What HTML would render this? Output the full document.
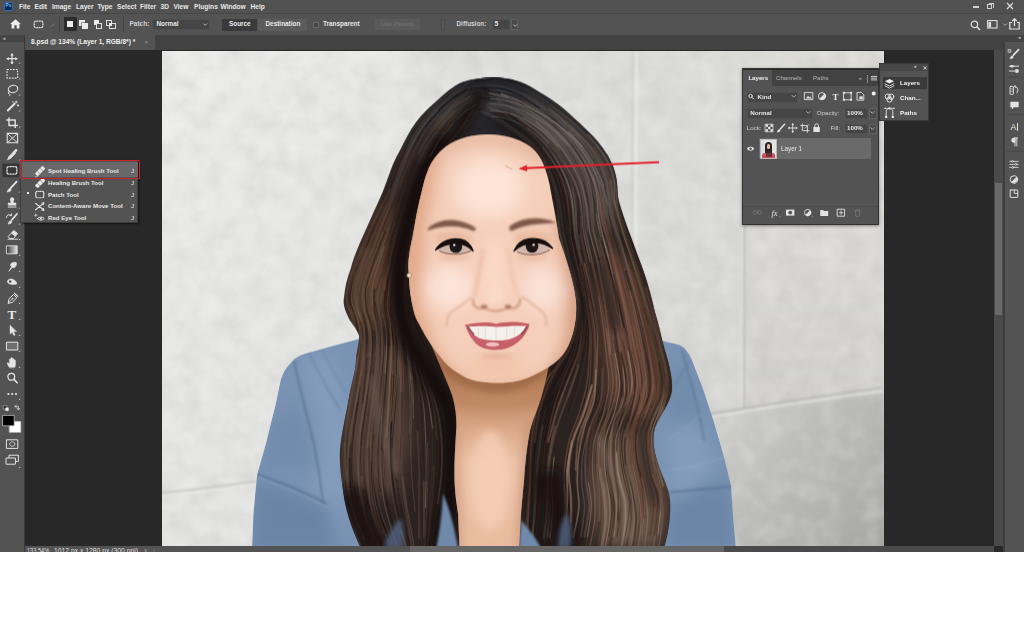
<!DOCTYPE html>
<html lang="en">
<head>
<meta charset="utf-8">
<title>Photoshop - Spot Healing Brush Tool</title>
<style>
*{box-sizing:border-box;margin:0;padding:0}
html,body{width:1024px;height:640px;overflow:hidden;background:#fff}
body{position:relative;font-family:"Liberation Sans",sans-serif;font-size:6.4px;color:#e6e6e6;line-height:1}
.abs{position:absolute}
.t{position:absolute;white-space:nowrap;font-weight:bold;color:#e8e8e8}
#app{position:absolute;left:0;top:0;width:1024px;height:552px;background:#282828;overflow:hidden}
#menubar{position:absolute;left:0;top:0;width:1024px;height:13px;background:#515151}
#menubar .t{top:3.600px;font-size:6.600px}
#optbar{position:absolute;left:0;top:13px;width:1024px;height:22px;background:#535353;border-top:1px solid #464646}
#tabbar{position:absolute;left:0;top:35px;width:1024px;height:15px;background:#424242}
#tab{position:absolute;left:25px;top:0;width:130px;height:15px;background:#535353}
#tools{position:absolute;left:0;top:35px;width:25px;height:517px;background:#535353;border-right:1px solid #3a3a3a}
#toolshead{position:absolute;left:0;top:0;width:24px;height:7px;background:#454545}
#rstrip{position:absolute;left:1003px;top:35px;width:21px;height:517px;background:#535353;border-left:2px solid #3e3e3e}
#vscroll{position:absolute;left:994px;top:50px;width:9px;height:496px;background:#4a4a4a}
#vthumb{position:absolute;left:1px;top:133px;width:7px;height:132px;background:#696969}
#status{position:absolute;left:25px;top:546px;width:385px;height:6px;background:#535353;overflow:hidden}
#hscroll{position:absolute;left:410px;top:546px;width:584px;height:6px;background:#4a4a4a}
#hthumb{position:absolute;left:0;top:0;width:314px;height:6px;background:#666}
#photo{position:absolute;left:162px;top:50.600px;width:721.500px;height:495.400px;background:#e0e0de;overflow:hidden}
.ico{position:absolute;overflow:visible}
/* flyout */
#fly{position:absolute;left:20px;top:160px;width:118px;height:63px;background:#535353;border:1px solid #3c3c3c;box-shadow:1px 1px 2px rgba(0,0,0,.5)}
#fly .t{font-size:6.100px;left:27px}
#fly .k{left:110px}
#flysel{position:absolute;left:20px;top:160px;width:119.500px;height:18.500px;border:1.800px solid #cf1f29;border-radius:1px}
/* layers panel */
#lp{position:absolute;left:742px;top:68px;width:137px;height:157px;background:#535353;border:1px solid #333;box-shadow:0 1px 3px rgba(0,0,0,.4)}
#lp .t{font-size:6.3px}
.dd{position:absolute;background:#454545;border:0.8px solid #505050;border-radius:1px}
#mp{position:absolute;left:879px;top:63px;width:50px;height:58px;background:#535353;border:1px solid #3a3a3a}
#mp .t{font-size:6.4px}
</style>
</head>
<body>
<div id="app">

<!-- ============ canvas + photo ============ -->
<div id="photo">
<svg width="721.500" height="495.400" viewBox="162 50.600 721.500 495.400" style="position:absolute;left:0;top:0;display:block">
<defs>
  <filter id="b05" x="-20%" y="-20%" width="140%" height="140%"><feGaussianBlur stdDeviation="0.5"/></filter>
  <filter id="b1" x="-20%" y="-20%" width="140%" height="140%"><feGaussianBlur stdDeviation="1"/></filter>
  <filter id="b2" x="-30%" y="-30%" width="160%" height="160%"><feGaussianBlur stdDeviation="2"/></filter>
  <filter id="b3" x="-30%" y="-30%" width="160%" height="160%"><feGaussianBlur stdDeviation="3"/></filter>
  <filter id="b5" x="-40%" y="-40%" width="180%" height="180%"><feGaussianBlur stdDeviation="5"/></filter>
  <filter id="b8" x="-50%" y="-50%" width="200%" height="200%"><feGaussianBlur stdDeviation="8"/></filter>
  <filter id="b14" x="-60%" y="-60%" width="220%" height="220%"><feGaussianBlur stdDeviation="14"/></filter>
  <filter id="b25" x="-80%" y="-80%" width="260%" height="260%"><feGaussianBlur stdDeviation="25"/></filter>
  <filter id="wallnoise" x="0" y="0" width="100%" height="100%">
    <feTurbulence type="fractalNoise" baseFrequency="0.045" numOctaves="3" seed="7" result="n"/>
    <feColorMatrix type="matrix" values="0 0 0 0 0.5  0 0 0 0 0.5  0 0 0 0 0.5  1.1 0 0 0 -0.42"/>
  </filter>
  <filter id="wallnoise2" x="0" y="0" width="100%" height="100%">
    <feTurbulence type="fractalNoise" baseFrequency="0.05" numOctaves="2" seed="23" result="n"/>
    <feColorMatrix type="matrix" values="0 0 0 0 1  0 0 0 0 1  0 0 0 0 1  1.0 0 0 0 -0.40"/>
  </filter>
  <clipPath id="pc"><rect x="162" y="50" width="722" height="497"/></clipPath>
  <linearGradient id="jk" x1="0" y1="0" x2="1" y2="0">
    <stop offset="0" stop-color="#6f8bab"/><stop offset="0.5" stop-color="#617b9a"/><stop offset="1" stop-color="#6c87a6"/>
  </linearGradient>
  <radialGradient id="faceg" cx="0.5" cy="0.42" r="0.62">
    <stop offset="0" stop-color="#fbdcc8"/><stop offset="0.55" stop-color="#f3c7ac"/><stop offset="1" stop-color="#dba385"/>
  </radialGradient>
</defs>
<g clip-path="url(#pc)">
<!-- wall -->
<defs>
  <linearGradient id="wg" x1="162" y1="0" x2="883" y2="0" gradientUnits="userSpaceOnUse">
    <stop offset="0" stop-color="#ececeb"/><stop offset="0.35" stop-color="#e6e6e4"/><stop offset="0.66" stop-color="#dddddb"/><stop offset="1" stop-color="#dad9d6"/>
  </linearGradient>
  <linearGradient id="wg2" x1="720" y1="410" x2="883" y2="546" gradientUnits="userSpaceOnUse">
    <stop offset="0" stop-color="#d0d0cd"/><stop offset="0.4" stop-color="#bdbdba"/><stop offset="1" stop-color="#a6a6a2"/>
  </linearGradient>
  <linearGradient id="wg3" x1="0" y1="225" x2="0" y2="400" gradientUnits="userSpaceOnUse">
    <stop offset="0" stop-color="#dbdad7"/><stop offset="1" stop-color="#d0cfcb"/>
  </linearGradient>
  <linearGradient id="wg4" x1="0" y1="51" x2="0" y2="546" gradientUnits="userSpaceOnUse">
    <stop offset="0" stop-color="#000" stop-opacity="0"/><stop offset="1" stop-color="#000" stop-opacity=".035"/>
  </linearGradient>
</defs>
<rect x="162" y="50" width="722" height="497" fill="url(#wg)"/>
<rect x="162" y="50" width="722" height="497" fill="url(#wg4)"/>
<g filter="url(#b3)">
  <path d="M746 225 L890 225 L890 386 L746 409 Z" fill="url(#wg3)"/>
  <path d="M690 420 C760 407 820 398 890 388 L890 560 L690 560 Z" fill="url(#wg2)"/>
  <rect x="420" y="40" width="214" height="60" fill="#dbdbd9" opacity=".6"/>
</g>
<rect x="162" y="50" width="722" height="497" filter="url(#wallnoise)" opacity=".5"/>
<rect x="162" y="50" width="722" height="497" filter="url(#wallnoise2)" opacity=".45"/>
<!-- seams -->
<g filter="url(#b1)" fill="none">
  <path d="M636.500 51 L635.500 400" stroke="#ebebe9" stroke-width="2.200" opacity=".8"/>
  <path d="M632.500 51 L631.500 330" stroke="#c6c6c4" stroke-width="1.800" opacity=".6"/>
  <path d="M744.500 225 L744 408" stroke="#bcbcba" stroke-width="2" opacity=".85"/>
  <path d="M742 225 L741.500 408" stroke="#e6e6e4" stroke-width="1.600" opacity=".6"/>
  <path d="M700 415.500 C760 405 820 396 883 387.500" stroke="#b4b4b2" stroke-width="1.800" opacity=".85"/>
  <path d="M700 418.500 C760 408 820 399 883 390.500" stroke="#e9e9e7" stroke-width="2" opacity=".7"/>
  <path d="M162 492.600 C195 489 225 485 257 481" stroke="#c6c2bf" stroke-width="2" opacity=".85"/>
  <path d="M162 495.500 C195 492 225 488 257 484" stroke="#eeeeec" stroke-width="1.600" opacity=".7"/>
</g>

<!-- jacket -->
<defs><clipPath id="jkclip"><path d="M360 338 L330 346 L309 352 C300 354 295 357 291 362 C285 368 282 374 280 382 L276 402 L266 443 L257 474 L253.5 512 L252 548 L736 548 L733.5 521 L731 485 L724 456 L713.5 420 L703 388 L692 359.5 C688 350 683 345 677 343.5 L659 339.5 L640 338 Z"/></clipPath></defs>
<g clip-path="url(#jkclip)">
  <path d="M360 338 L330 346 L309 352 C300 354 295 357 291 362 C285 368 282 374 280 382 L276 402 L266 443 L257 474 L253.5 512 L252 548 L736 548 L733.5 521 L731 485 L724 456 L713.5 420 L703 388 L692 359.5 C688 350 683 345 677 343.5 L659 339.5 L640 338 Z" fill="#7a93b4"/>
  <g filter="url(#b8)" opacity=".9">
    <path d="M300 360 L330 350 L352 420 L345 500 L330 548 L300 548 L320 440 Z" fill="#869ebd"/>
    <path d="M255 480 L330 505 L335 548 L250 548 Z" fill="#6983a5"/>
    <path d="M268 420 L300 400 L318 470 L262 470 Z" fill="#728cad"/>
    <path d="M680 350 L700 400 L728 480 L732 548 L700 548 L690 470 L665 400 Z" fill="#718bac"/>
    <path d="M668 430 L700 420 L720 470 L672 500 Z" fill="#869ebd"/>
    <path d="M670 500 L730 490 L734 548 L665 548 Z" fill="#6a84a6"/>
    <path d="M380 500 L470 490 L470 548 L380 548 Z" fill="#6f88a9"/>
    <path d="M515 500 L580 500 L580 548 L515 548 Z" fill="#6f88a9"/>
  </g>
  <!-- fold lines -->
  <g filter="url(#b1)" fill="none" stroke-linecap="round">
    <path d="M294 360 C300 390 308 420 314 444 C318 465 321 485 323 503" stroke="#54698a" stroke-width="1.6" opacity=".75"/>
    <path d="M258 474 C280 482 305 492 326 503" stroke="#50668a" stroke-width="1.8" opacity=".8"/>
    <path d="M259 477 C280 485 305 495 326 506" stroke="#8ca4c2" stroke-width="1.2" opacity=".7"/>
    <path d="M309 352 C318 372 330 392 340 410" stroke="#5a7091" stroke-width="1.1" opacity=".6"/>
    <path d="M322 350 C330 366 338 380 346 392" stroke="#5a7091" stroke-width="1" opacity=".5"/>
    <path d="M682 350 C690 380 700 410 704 440" stroke="#57708f" stroke-width="1.8" opacity=".6"/>
    <path d="M668 470 C690 468 712 462 726 456" stroke="#8fa8c6" stroke-width="1.4" opacity=".8"/>
    <path d="M670 492 C692 490 715 488 731 486" stroke="#536c8e" stroke-width="1.8" opacity=".7"/>
    <path d="M666 440 C680 432 692 424 700 414" stroke="#8ea6c3" stroke-width="1.1" opacity=".7"/>
    <path d="M660 398 C672 388 684 372 690 360" stroke="#5b7393" stroke-width="1.4" opacity=".5"/>
  </g>
</g>

<defs><clipPath id="hairclip"><path d="M500 77.5 C515 78 528 84 538 91 C552 99 563 107 572 116 C583 126 593 135 600 144 C608 154 614 165 616 176 C618 186 617 193 619 201 C624 220 632 238 638 256 C646 276 651 294 655 312 C659 324 661 336 664 347 C668 360 673 376 672 390 C670 404 660 414 655 427 C651 440 655 455 659 466 C663 478 669 488 670 500 C671 514 669 530 664 548 L361 548 C355 535 346 515 343 490 C340 470 339 455 340.500 444 C343 425 347 410 349 397 C352 380 356 370 356 359 C357 348 360 340 359 335 C356 326 350 322 348 316 C344 308 343 302 344 297 C345 287 347 278 350.500 269 C355 252 362 238 368 224.500 C374 210 382 195 387 180 C391 168 395 158 400 150 C405 140 410 130 416 122 C422 114 428 108 434 103 C444 94 452 86 463 81.5 C475 77.5 488 77 500 77.5 Z"/></clipPath></defs>
<!-- hair mass -->
<path id="hairshape" d="M500 77.5 C515 78 528 84 538 91 C552 99 563 107 572 116 C583 126 593 135 600 144 C608 154 614 165 616 176 C618 186 617 193 619 201 C624 220 632 238 638 256 C646 276 651 294 655 312 C659 324 661 336 664 347 C668 360 673 376 672 390 C670 404 660 414 655 427 C651 440 655 455 659 466 C663 478 669 488 670 500 C671 514 669 530 664 548 L361 548 C355 535 346 515 343 490 C340 470 339 455 340.500 444 C343 425 347 410 349 397 C352 380 356 370 356 359 C357 348 360 340 359 335 C356 326 350 322 348 316 C344 308 343 302 344 297 C345 287 347 278 350.500 269 C355 252 362 238 368 224.500 C374 210 382 195 387 180 C391 168 395 158 400 150 C405 140 410 130 416 122 C422 114 428 108 434 103 C444 94 452 86 463 81.5 C475 77.5 488 77 500 77.5 Z" fill="#2b2320"/>
<g clip-path="url(#hairclip)">
  <!-- toptone --><ellipse cx="500" cy="105" rx="120" ry="62" fill="#26262a" filter="url(#b14)"/>
  <g filter="url(#b8)">
    <!-- lighter zones -->
    <path d="M384 200 L400 215 L392 300 L372 335 L350 320 L352 270 Z" fill="#5a3f31"/>
    <path d="M355 345 L400 350 L410 440 L395 500 L350 480 L345 420 Z" fill="#56433a"/>
    <path d="M520 92 L575 118 L612 170 L618 230 L590 230 L570 170 L530 125 Z" fill="#5a4f4a"/>
    <path d="M600 240 L640 270 L662 350 L668 395 L640 420 L610 400 L600 320 Z" fill="#66463a"/>
    <path d="M600 430 L655 430 L668 500 L660 548 L600 548 L590 480 Z" fill="#6b5548"/>
    <path d="M430 105 L470 88 L480 110 L440 150 L410 200 L395 190 L410 140 Z" fill="#39322f"/>
  </g>
</g>

<g fill="none" stroke-linecap="round" filter="url(#b05)" clip-path="url(#hairclip)">
<path d="M543.9 95.2C547.7 98.3 559.8 107.1 567.1 113.4C574.3 119.7 581.2 126.1 587.2 133.0C593.3 139.8 598.7 147.1 603.1 154.5C607.5 162.0 611.4 170.5 613.8 177.6C616.2 184.7 616.7 193.9 617.3 197.2" stroke="#36363a" stroke-width="1.1" opacity="0.73"/>
<path d="M634.2 435.0C634.4 439.8 634.4 454.8 635.9 463.9C637.3 472.9 641.0 480.3 642.7 489.3C644.4 498.2 646.0 507.8 645.8 517.6C645.6 527.4 642.2 542.9 641.5 548.0" stroke="#6a5447" stroke-width="0.9" opacity="0.47"/>
<path d="M412.2 239.5C411.3 244.7 407.8 260.4 406.6 270.4C405.4 280.4 404.7 291.1 405.2 299.7C405.7 308.4 407.6 315.2 409.5 322.3C411.4 329.4 415.6 338.9 416.8 342.2" stroke="#452e24" stroke-width="1.5" opacity="0.68"/>
<path d="M571.7 441.1C570.9 445.9 567.8 461.1 567.1 470.1C566.4 479.1 567.6 486.7 567.4 495.2C567.2 503.8 567.1 512.7 565.8 521.5C564.5 530.3 560.6 543.6 559.6 548.0" stroke="#a8947f" stroke-width="1.8" opacity="0.71"/>
<path d="M626.7 366.5C626.9 371.6 629.8 387.2 628.1 396.8C626.5 406.4 619.5 414.7 616.9 424.0C614.4 433.3 613.1 443.2 612.9 452.5C612.8 461.8 614.5 471.4 615.9 480.0C617.4 488.7 621.1 495.1 621.6 504.4C622.1 513.6 619.3 530.5 618.8 535.8" stroke="#7e695e" stroke-width="2.1" opacity="0.46"/>
<path d="M365.2 273.1C364.2 277.4 359.5 291.6 359.3 299.2C359.1 306.9 362.6 311.7 364.0 318.8C365.3 325.9 367.2 333.1 367.5 342.0C367.7 350.8 366.4 362.0 365.5 372.1C364.7 382.1 363.0 397.2 362.5 402.2" stroke="#1e1815" stroke-width="1.7" opacity="0.48"/>
<path d="M621.1 465.8C622.1 470.0 625.6 482.2 627.0 491.1C628.5 499.9 630.2 509.3 630.0 518.8C629.8 528.3 626.7 543.1 626.0 548.0" stroke="#6a5447" stroke-width="1.3" opacity="0.57"/>
<path d="M471.0 82.3C468.8 83.5 462.9 86.3 458.1 89.4C453.2 92.6 447.0 96.5 441.9 101.0C436.7 105.4 431.9 110.3 427.2 116.2C422.6 122.0 418.0 128.4 414.0 136.1C409.9 143.9 406.7 153.6 403.1 162.6C399.6 171.6 396.3 181.4 392.7 190.3C389.1 199.1 385.3 207.0 381.5 215.6C377.8 224.3 374.0 232.8 370.1 242.2C366.2 251.6 360.1 267.0 358.1 271.9" stroke="#222225" stroke-width="1.6" opacity="0.39"/>
<path d="M545.2 441.7C544.7 446.9 543.0 463.0 542.2 472.5C541.3 482.0 540.9 490.1 540.1 498.7C539.3 507.3 538.3 515.9 537.3 524.1C536.3 532.3 534.5 544.0 533.9 548.0" stroke="#4c3a31" stroke-width="1.6" opacity="0.53"/>
<path d="M648.7 323.6C649.6 327.6 652.2 338.5 653.9 347.6C655.7 356.6 659.2 368.2 659.1 378.0C659.0 387.8 655.9 397.3 653.3 406.6C650.7 415.8 644.9 424.3 643.7 433.5C642.6 442.8 644.7 453.2 646.5 462.1C648.2 471.0 652.5 478.0 654.4 487.0C656.3 495.9 658.2 505.6 658.0 515.8C657.8 526.0 653.9 542.6 653.1 548.0" stroke="#7e695e" stroke-width="1.9" opacity="0.35"/>
<path d="M382.8 478.0C383.5 482.3 385.4 495.2 387.4 503.8C389.5 512.3 392.7 521.7 395.0 529.1C397.3 536.5 400.2 544.9 401.3 548.0" stroke="#191412" stroke-width="0.9" opacity="0.34"/>
<path d="M631.1 350.7C631.9 355.7 635.9 371.0 635.8 380.8C635.8 390.5 633.2 400.0 630.9 409.4C628.6 418.7 623.3 427.4 622.1 436.7C620.9 446.1 622.4 456.6 623.6 465.7C624.8 474.7 628.1 482.1 629.3 491.0C630.6 499.8 631.7 509.2 631.2 518.7C630.6 528.2 626.8 543.1 626.0 548.0" stroke="#2a201c" stroke-width="1.1" opacity="0.72"/>
<path d="M467.5 91.5C465.5 93.1 459.4 97.4 455.3 101.2C451.3 104.9 447.2 109.2 443.0 114.1C438.8 119.0 434.2 124.1 430.2 130.7C426.2 137.2 422.6 144.9 419.0 153.2C415.5 161.6 412.2 171.8 408.8 180.8C405.4 189.7 401.9 198.3 398.6 206.9C395.3 215.5 392.1 223.5 388.9 232.4C385.7 241.3 381.0 255.7 379.5 260.3" stroke="#56565b" stroke-width="0.7" opacity="0.67"/>
<path d="M646.4 336.1C647.2 340.6 650.2 353.4 651.2 363.0C652.2 372.6 654.4 383.9 652.6 393.5C650.9 403.1 643.1 411.3 640.7 420.5C638.3 429.7 637.5 439.5 638.0 448.8C638.5 458.1 642.7 471.6 643.7 476.2" stroke="#7d5442" stroke-width="2.2" opacity="0.60"/>
<path d="M426.1 115.3C423.8 118.6 416.3 127.6 412.1 135.4C407.9 143.2 404.4 152.9 400.7 161.9C397.1 171.0 393.9 180.8 390.3 189.6C386.7 198.5 383.0 206.3 379.4 215.0C375.7 223.6 372.1 232.1 368.2 241.6C364.3 251.0 358.9 262.1 355.9 271.5C352.9 280.9 350.1 290.3 350.0 298.0C349.8 305.6 353.8 310.3 355.2 317.5C356.5 324.6 357.8 337.0 358.3 340.9" stroke="#2a1b15" stroke-width="1.7" opacity="0.72"/>
<path d="M508.5 100.7C511.9 102.5 522.0 107.0 528.9 111.5C535.7 116.0 543.5 121.8 549.8 127.7C556.2 133.6 562.0 140.1 567.1 146.9C572.1 153.7 576.6 161.0 580.2 168.5C583.9 175.9 587.2 184.0 589.0 191.7C590.8 199.4 589.6 206.0 590.9 214.5C592.3 222.9 596.2 238.0 597.2 242.6" stroke="#37302d" stroke-width="1.6" opacity="0.69"/>
<path d="M405.7 284.4C405.8 288.7 405.4 302.6 406.4 310.4C407.4 318.2 409.5 324.4 411.5 331.1C413.4 337.9 415.8 344.1 418.2 350.8C420.5 357.4 422.8 364.2 425.4 371.0C427.9 377.9 431.2 384.5 433.5 391.6C435.8 398.7 438.2 410.1 439.1 413.8" stroke="#44352e" stroke-width="1.1" opacity="0.56"/>
<path d="M639.3 324.6C640.4 328.6 643.6 339.5 645.9 348.6C648.1 357.6 652.5 368.9 652.9 378.7C653.2 388.5 650.7 398.0 648.2 407.3C645.7 416.7 639.6 425.2 638.0 434.6C636.4 443.9 637.4 454.3 638.5 463.4C639.5 472.4 642.8 479.6 644.4 488.6C645.9 497.6 647.6 507.2 647.7 517.1C647.7 527.0 645.0 542.9 644.4 548.0" stroke="#96816f" stroke-width="0.9" opacity="0.58"/>
<path d="M392.8 375.3C392.6 380.3 392.0 395.1 391.5 405.3C391.0 415.5 389.8 426.4 389.6 436.5C389.4 446.5 389.5 456.2 390.1 465.4C390.6 474.6 391.7 483.0 393.0 491.5C394.2 500.0 395.5 508.2 397.3 516.3C399.1 524.5 402.6 536.2 403.7 540.2" stroke="#1e1815" stroke-width="2.0" opacity="0.68"/>
<path d="M646.4 447.8C647.1 452.3 648.9 466.4 650.7 475.0C652.6 483.6 656.8 489.6 657.4 499.4C658.0 509.3 654.9 528.4 654.4 534.2" stroke="#4c3a31" stroke-width="2.0" opacity="0.62"/>
<path d="M495.3 116.1C497.3 117.5 503.0 121.3 507.5 124.5C511.9 127.6 517.3 131.0 522.1 135.2C526.9 139.4 532.0 144.1 536.2 149.8C540.4 155.5 545.4 166.2 547.2 169.4" stroke="#36363a" stroke-width="1.0" opacity="0.46"/>
<path d="M490.5 88.2C494.1 89.0 505.0 90.3 512.4 92.9C519.7 95.6 527.1 99.4 534.6 104.2C542.1 108.9 550.5 115.4 557.5 121.5C564.6 127.6 571.4 134.1 577.1 140.9C582.8 147.7 587.8 155.0 591.8 162.5C595.7 169.9 599.0 178.2 600.9 185.6C602.7 193.1 601.2 198.6 602.7 207.0C604.2 215.4 608.8 231.4 610.0 236.2" stroke="#222225" stroke-width="0.9" opacity="0.62"/>
<path d="M616.7 423.9C616.0 428.7 612.5 443.1 612.4 452.5C612.2 461.8 614.0 471.4 615.6 480.0C617.2 488.6 621.3 495.0 622.1 504.3C622.8 513.6 620.2 530.5 619.9 535.8" stroke="#2a201c" stroke-width="1.8" opacity="0.31"/>
<path d="M653.3 307.0C654.4 311.5 657.7 325.1 659.6 334.1C661.4 343.1 663.3 351.5 664.7 361.2C666.0 370.8 669.0 382.5 667.7 392.1C666.4 401.7 658.8 414.2 657.0 418.6" stroke="#9a7260" stroke-width="1.4" opacity="0.56"/>
<path d="M577.6 313.8C576.6 319.2 575.2 336.1 571.5 346.2C567.8 356.2 560.3 363.9 555.4 374.0C550.6 384.1 544.5 401.1 542.3 406.5" stroke="#4d3329" stroke-width="1.7" opacity="0.42"/>
<path d="M389.3 232.5C387.6 237.2 382.5 251.0 379.6 260.4C376.8 269.8 373.2 280.4 372.2 288.8C371.2 297.3 372.5 304.0 373.6 311.0C374.7 318.0 378.1 323.2 378.9 330.9C379.7 338.7 379.1 348.1 378.4 357.5C377.7 367.0 375.9 377.7 374.6 387.7C373.2 397.7 371.5 407.7 370.3 417.7C369.0 427.6 367.7 442.5 367.2 447.5" stroke="#725d50" stroke-width="1.4" opacity="0.70"/>
<path d="M560.7 118.4C564.2 121.7 575.7 131.1 581.8 137.9C588.0 144.7 593.5 152.0 597.7 159.5C601.9 166.9 605.2 175.3 606.9 182.6C608.7 189.9 606.7 194.9 608.2 203.3C609.6 211.7 612.2 221.9 615.4 233.0C618.6 244.2 623.3 257.4 627.2 270.1C631.0 282.8 636.5 302.6 638.3 309.2" stroke="#675d57" stroke-width="1.3" opacity="0.31"/>
<path d="M591.3 214.6C592.2 219.3 594.4 232.5 596.6 242.8C598.9 253.0 602.2 264.5 604.7 276.2C607.3 287.9 610.0 302.2 612.0 312.8C614.0 323.4 615.4 330.9 616.9 339.9C618.4 349.0 620.1 357.6 621.1 367.2C622.1 376.8 622.5 392.5 622.8 397.5" stroke="#3f2c24" stroke-width="2.0" opacity="0.55"/>
<path d="M443.2 128.5C441.1 131.6 434.7 140.1 430.9 147.2C427.1 154.4 423.5 163.1 420.2 171.4C416.9 179.7 413.8 188.7 411.0 197.3C408.1 205.8 404.5 218.4 403.3 222.6" stroke="#303034" stroke-width="0.7" opacity="0.41"/>
<path d="M473.5 107.1C472.3 109.3 468.9 115.7 466.0 120.2C463.1 124.7 459.6 129.1 456.1 134.1C452.6 139.2 448.5 144.0 445.1 150.4C441.8 156.7 438.9 164.4 435.8 172.3C432.7 180.2 429.7 188.9 426.5 197.7C423.3 206.6 419.5 215.7 416.6 225.2C413.6 234.6 410.8 244.4 408.9 254.6C406.9 264.7 405.6 280.6 405.0 285.8" stroke="#82664f" stroke-width="1.6" opacity="0.59"/>
<path d="M394.8 360.9C394.8 365.8 395.0 380.3 394.7 390.3C394.4 400.3 393.5 410.8 392.8 421.0C392.1 431.2 390.7 441.9 390.4 451.6C390.0 461.2 390.3 470.1 390.9 478.8C391.5 487.5 392.3 495.4 393.9 503.8C395.5 512.1 398.2 521.7 400.5 529.0C402.7 536.4 406.2 544.8 407.3 548.0" stroke="#44352e" stroke-width="1.6" opacity="0.67"/>
<path d="M443.6 102.0C441.1 104.5 433.4 111.2 428.6 117.1C423.8 122.9 419.0 129.2 414.9 136.9C410.8 144.6 407.5 154.3 404.1 163.3C400.6 172.3 395.9 186.3 394.2 190.9" stroke="#36363a" stroke-width="2.1" opacity="0.63"/>
<path d="M400.3 312.6C400.9 315.9 402.7 325.6 403.9 332.4C405.1 339.3 406.5 346.1 407.6 353.7C408.8 361.4 410.3 374.2 410.8 378.3" stroke="#725d50" stroke-width="1.8" opacity="0.73"/>
<path d="M358.1 416.4C357.3 421.1 354.5 435.2 353.6 444.7C352.7 454.2 352.3 464.0 352.6 473.5C353.0 482.9 353.7 492.1 355.9 501.2C358.0 510.3 362.2 520.2 365.3 528.0C368.5 535.8 373.2 544.7 374.8 548.0" stroke="#5f4c40" stroke-width="1.1" opacity="0.51"/>
<path d="M388.4 203.4C386.4 207.7 380.3 219.9 376.3 228.9C372.2 237.8 367.8 247.7 364.3 257.2C360.7 266.8 356.2 277.8 355.0 286.4C353.8 295.0 355.5 301.7 357.0 308.7C358.5 315.7 363.0 320.7 364.0 328.6C365.1 336.5 364.3 346.4 363.3 356.2C362.4 366.0 360.0 377.4 358.3 387.4C356.6 397.4 354.6 406.7 353.1 416.1C351.6 425.6 350.0 439.4 349.4 444.0" stroke="#82664f" stroke-width="1.9" opacity="0.47"/>
<path d="M375.0 301.9C375.8 305.1 378.4 314.4 379.7 321.5C381.1 328.6 382.9 335.7 383.3 344.3C383.6 352.9 382.6 363.4 381.8 373.3C381.0 383.1 379.8 393.3 378.4 403.3C377.1 413.4 375.0 423.7 373.9 433.6C372.8 443.6 372.0 453.3 372.1 462.9C372.1 472.4 372.8 481.8 374.2 490.8C375.6 499.7 377.8 508.3 380.4 516.5C383.0 524.8 388.3 536.3 389.9 540.2" stroke="#1e1815" stroke-width="1.8" opacity="0.52"/>
<path d="M616.9 424.1C616.3 428.9 613.4 443.3 613.1 452.6C612.9 462.0 614.3 471.5 615.5 480.2C616.6 488.8 619.9 495.2 620.1 504.5C620.3 513.7 617.3 530.6 616.7 535.8" stroke="#6a5447" stroke-width="1.5" opacity="0.30"/>
<path d="M369.7 258.1C368.2 263.0 362.1 278.5 360.8 287.0C359.4 295.6 360.6 302.3 361.8 309.3C362.9 316.4 366.7 321.4 367.5 329.2C368.4 337.1 366.9 352.0 366.8 356.5" stroke="#452e24" stroke-width="2.2" opacity="0.32"/>
<path d="M399.4 268.2C398.6 272.8 395.0 287.8 394.2 296.2C393.5 304.5 394.0 311.2 394.8 318.2C395.5 325.2 397.8 330.6 399.0 338.1C400.1 345.5 401.1 354.1 401.8 362.9C402.5 371.7 403.3 381.2 403.4 390.7C403.6 400.3 403.1 410.3 402.6 420.1C402.2 430.0 400.9 440.4 400.6 449.8C400.3 459.1 400.8 472.0 400.8 476.4" stroke="#1e1815" stroke-width="1.4" opacity="0.40"/>
<path d="M581.6 138.5C584.0 142.1 592.4 152.6 596.2 160.1C600.0 167.5 603.0 175.9 604.6 183.2C606.2 190.5 604.4 195.6 606.0 204.1C607.6 212.5 610.7 222.6 614.1 233.7C617.6 244.8 622.8 257.9 626.8 270.5C630.7 283.1 635.1 298.4 638.1 309.4C641.0 320.4 642.7 327.4 644.6 336.3C646.4 345.3 648.2 353.6 649.2 363.2C650.2 372.7 650.6 388.5 650.9 393.6" stroke="#2b2320" stroke-width="0.8" opacity="0.45"/>
<path d="M413.5 220.0C412.5 224.7 409.0 238.4 407.3 248.1C405.6 257.8 404.3 268.7 403.5 278.1C402.7 287.6 402.2 296.9 402.7 304.9C403.1 312.9 404.6 319.3 406.0 326.2C407.4 333.0 409.4 338.9 411.0 345.9C412.6 352.8 414.0 360.4 415.7 367.9C417.3 375.5 419.4 383.2 420.9 391.3C422.4 399.3 423.6 407.7 424.4 416.2C425.3 424.8 425.6 438.2 425.9 442.5" stroke="#342924" stroke-width="2.1" opacity="0.64"/>
<path d="M425.8 115.7C423.6 119.1 416.3 128.0 412.3 135.8C408.3 143.5 405.2 153.2 401.8 162.3C398.5 171.3 395.6 181.1 392.2 190.0C388.8 198.8 383.2 211.1 381.4 215.3" stroke="#46464b" stroke-width="1.7" opacity="0.31"/>
<path d="M637.6 421.1C636.9 425.9 633.8 440.2 633.7 449.6C633.7 458.9 635.6 468.5 637.3 477.2C639.1 486.0 643.4 492.4 644.3 502.1C645.1 511.7 642.7 529.6 642.4 535.1" stroke="#5a463b" stroke-width="1.8" opacity="0.58"/>
<path d="M646.1 287.6C647.6 293.4 652.7 312.7 655.1 322.5C657.5 332.3 658.5 337.3 660.5 346.4C662.6 355.5 667.1 367.2 667.6 377.1C668.1 387.0 665.8 396.5 663.7 405.7C661.6 414.9 655.9 423.1 654.8 432.3C653.7 441.4 655.6 451.8 657.0 460.5C658.4 469.3 662.2 480.9 663.3 485.0" stroke="#9a7260" stroke-width="2.1" opacity="0.59"/>
<path d="M658.7 346.7C659.8 351.8 665.1 367.5 665.6 377.4C666.0 387.2 663.5 396.7 661.2 405.9C658.9 415.1 653.1 423.4 651.9 432.6C650.6 441.8 652.4 452.1 653.9 461.0C655.3 469.8 658.9 476.6 660.4 485.5C661.9 494.5 663.4 504.3 663.1 514.7C662.7 525.1 659.3 542.5 658.5 548.0" stroke="#7e695e" stroke-width="1.3" opacity="0.55"/>
<path d="M382.8 313.4C383.5 316.8 385.9 325.7 386.7 333.4C387.4 341.0 387.4 350.2 387.3 359.5C387.2 368.8 386.8 379.2 386.2 389.2C385.6 399.2 384.6 409.5 383.8 419.6C382.9 429.7 381.6 440.1 381.2 449.8C380.9 459.5 381.0 468.9 381.6 477.8C382.1 486.8 382.9 495.2 384.5 503.7C386.2 512.3 389.1 521.8 391.4 529.1C393.8 536.5 397.4 544.9 398.6 548.0" stroke="#725d50" stroke-width="1.2" opacity="0.60"/>
<path d="M492.6 82.9C496.4 83.7 507.4 84.8 515.0 87.5C522.6 90.2 530.3 94.3 538.2 99.2C546.1 104.1 554.9 110.8 562.5 117.0C570.1 123.3 577.7 129.7 583.9 136.5C590.1 143.4 595.7 150.6 599.9 158.1C604.1 165.5 607.6 177.3 609.1 181.2" stroke="#28282b" stroke-width="1.0" opacity="0.35"/>
<path d="M663.7 346.2C664.7 351.3 669.8 367.1 669.9 377.0C670.0 386.9 666.9 396.4 664.2 405.6C661.6 414.7 655.4 423.0 654.1 432.1C652.8 441.2 654.9 451.6 656.6 460.3C658.3 469.1 662.5 475.8 664.4 484.7C666.3 493.7 668.3 503.5 668.2 514.1C668.1 524.6 664.5 542.3 663.8 548.0" stroke="#4c3a31" stroke-width="0.9" opacity="0.66"/>
<path d="M407.4 352.9C407.9 357.0 409.6 369.4 410.4 378.0C411.1 386.5 411.8 395.3 411.9 404.4C412.0 413.5 411.2 423.4 411.0 432.6C410.9 441.9 410.7 451.1 410.9 459.8C411.2 468.6 411.8 476.6 412.5 485.1C413.2 493.7 414.7 506.7 415.2 511.0" stroke="#725d50" stroke-width="0.7" opacity="0.69"/>
<path d="M587.8 469.0C588.2 473.1 589.5 485.4 590.0 494.0C590.4 502.7 591.0 511.7 590.3 520.7C589.6 529.7 586.5 543.4 585.7 548.0" stroke="#6a5447" stroke-width="1.0" opacity="0.40"/>
<path d="M406.6 179.9C405.2 184.3 400.9 197.5 397.8 206.1C394.7 214.7 391.6 222.7 388.1 231.6C384.7 240.5 380.5 250.2 377.1 259.6C373.7 269.0 369.1 279.6 367.5 288.1C366.0 296.6 366.7 303.3 367.7 310.3C368.7 317.3 372.5 326.9 373.5 330.2" stroke="#82664f" stroke-width="0.9" opacity="0.61"/>
<path d="M542.9 147.1C545.2 150.4 552.7 160.2 556.4 167.4C560.1 174.6 563.3 182.6 565.4 190.2C567.5 197.8 568.2 205.3 569.1 213.0C570.0 220.8 569.5 228.0 570.8 236.7C572.1 245.4 574.8 255.2 576.9 265.0C579.1 274.9 582.6 290.7 583.7 295.9" stroke="#85726a" stroke-width="1.5" opacity="0.75"/>
<path d="M364.8 257.0C363.2 261.9 356.7 277.6 355.2 286.2C353.8 294.8 354.9 301.5 356.0 308.5C357.1 315.6 360.9 320.5 361.7 328.4C362.4 336.4 361.4 346.3 360.5 356.1C359.6 366.0 357.6 377.4 356.3 387.4C354.9 397.4 353.6 406.7 352.5 416.0C351.4 425.4 350.2 439.1 349.8 443.8" stroke="#44352e" stroke-width="1.5" opacity="0.58"/>
<path d="M479.5 92.8C483.0 93.1 493.7 93.0 500.5 94.7C507.2 96.3 513.4 99.1 520.2 102.8C527.0 106.4 534.3 111.4 541.1 116.8C547.9 122.1 554.9 128.4 561.0 134.9C567.1 141.3 574.8 151.9 577.5 155.3" stroke="#303034" stroke-width="1.6" opacity="0.33"/>
<path d="M489.9 88.1C493.7 88.9 505.1 90.1 512.7 92.8C520.3 95.5 528.0 99.3 535.7 104.1C543.3 108.8 551.6 115.3 558.6 121.4C565.5 127.6 572.0 134.0 577.4 140.8C582.9 147.6 587.5 154.9 591.3 162.4C595.0 169.8 598.5 181.7 600.0 185.5" stroke="#56565b" stroke-width="1.7" opacity="0.72"/>
<path d="M569.8 279.1C570.9 282.3 575.4 289.8 576.0 298.1C576.7 306.3 576.1 318.3 573.6 328.5C571.1 338.7 566.2 349.3 561.1 359.1C555.9 369.0 547.4 376.8 542.7 387.6C538.1 398.5 535.4 412.7 533.1 424.5C530.9 436.3 529.9 447.8 529.0 458.4C528.2 468.9 528.2 478.7 527.9 487.7C527.5 496.7 527.1 508.2 526.9 512.3" stroke="#5a3a2d" stroke-width="2.1" opacity="0.31"/>
<path d="M489.1 92.6C492.4 93.4 502.1 94.9 508.8 97.6C515.6 100.3 522.5 104.0 529.7 108.6C536.9 113.2 545.3 119.3 552.3 125.3C559.3 131.3 566.1 137.7 571.7 144.5C577.4 151.3 582.4 158.6 586.2 166.1C590.0 173.6 593.2 181.8 594.7 189.3C596.3 196.9 594.4 203.1 595.4 211.5C596.5 220.0 600.1 235.4 601.0 240.1" stroke="#70665f" stroke-width="1.3" opacity="0.72"/>
<path d="M386.8 314.2C387.4 317.5 389.5 326.5 390.1 334.1C390.6 341.8 390.4 350.9 390.3 360.1C390.1 369.4 389.6 379.6 389.1 389.7C388.5 399.7 387.4 415.1 387.0 420.2" stroke="#806c5e" stroke-width="0.8" opacity="0.65"/>
<path d="M627.8 351.4C628.5 356.4 632.4 371.7 632.1 381.5C631.8 391.3 628.7 400.8 626.0 410.1C623.2 419.4 617.4 428.1 615.8 437.5C614.3 446.9 615.5 457.4 616.6 466.4C617.7 475.4 621.2 482.8 622.6 491.6C624.1 500.4 625.7 509.7 625.5 519.1C625.3 528.5 621.9 543.2 621.2 548.0" stroke="#a8947f" stroke-width="1.8" opacity="0.45"/>
<path d="M466.7 103.6C465.2 105.7 460.7 111.4 457.3 116.0C453.9 120.5 450.0 125.2 446.2 130.8C442.4 136.4 438.2 142.4 434.3 149.5C430.5 156.5 425.0 169.1 423.1 173.0" stroke="#1d1d20" stroke-width="0.7" opacity="0.57"/>
<path d="M547.7 157.7C549.4 161.3 554.8 171.8 557.5 179.3C560.1 186.8 562.2 195.2 563.6 202.9C564.9 210.5 564.5 217.0 565.8 225.0C567.1 233.1 569.2 242.1 571.4 251.2C573.6 260.4 576.7 270.4 578.9 279.9C581.2 289.4 584.0 298.7 584.8 308.1C585.5 317.6 584.9 327.0 583.5 336.5C582.2 346.1 577.8 360.5 576.6 365.3" stroke="#4a3a33" stroke-width="1.8" opacity="0.72"/>
<path d="M646.7 379.2C645.9 383.9 644.0 398.5 641.7 407.8C639.5 417.1 634.1 425.8 633.0 435.1C632.0 444.5 633.8 455.0 635.3 464.1C636.9 473.1 640.6 480.6 642.2 489.5C643.8 498.5 644.4 513.1 644.8 517.8" stroke="#7e695e" stroke-width="1.1" opacity="0.61"/>
<path d="M352.2 271.0C351.2 275.4 346.1 289.9 346.0 297.6C346.0 305.2 350.3 309.9 351.9 317.1C353.6 324.2 355.7 331.4 355.9 340.5C356.1 349.6 354.2 361.5 353.0 371.8C351.9 382.0 350.4 392.3 349.0 401.8C347.6 411.4 345.7 419.8 344.5 428.9C343.4 438.0 342.4 447.1 342.0 456.4C341.7 465.8 342.5 480.3 342.6 485.0" stroke="#634e43" stroke-width="0.9" opacity="0.74"/>
<path d="M500.6 119.5C502.7 121.1 508.8 125.6 513.7 129.3C518.6 132.9 525.1 136.6 530.0 141.6C535.0 146.5 539.5 152.5 543.3 159.0C547.1 165.5 550.4 172.9 553.1 180.5C555.8 188.0 557.8 196.7 559.3 204.3C560.9 211.9 560.8 218.3 562.1 226.3C563.5 234.3 565.6 243.6 567.6 252.4C569.7 261.3 573.3 275.0 574.5 279.5" stroke="#70665f" stroke-width="2.1" opacity="0.55"/>
<path d="M558.0 136.8C560.9 140.2 570.5 150.1 575.5 157.3C580.5 164.5 585.0 172.4 587.9 180.0C590.7 187.5 591.6 194.9 592.5 202.9C593.4 210.8 592.1 218.3 593.3 227.6C594.6 236.9 597.6 247.6 600.0 258.8C602.4 270.0 605.2 283.3 607.7 294.8C610.2 306.3 612.8 318.0 614.9 327.6C617.0 337.2 619.3 348.3 620.2 352.5" stroke="#75625a" stroke-width="0.9" opacity="0.57"/>
<path d="M613.1 353.3C613.7 358.4 617.1 373.7 616.6 383.4C616.2 393.2 613.2 402.7 610.5 412.0C607.7 421.4 602.1 430.0 600.2 439.4C598.2 448.8 598.5 459.4 599.0 468.4C599.5 477.4 602.1 484.8 603.0 493.4C604.0 502.0 605.1 511.1 604.7 520.2C604.2 529.3 601.1 543.4 600.4 548.0" stroke="#a8947f" stroke-width="1.0" opacity="0.43"/>
<path d="M596.8 210.7C597.8 215.4 600.0 228.8 602.6 239.4C605.1 250.0 609.1 262.0 612.3 274.1C615.5 286.1 619.1 300.8 621.7 311.5C624.3 322.3 626.1 329.5 628.0 338.5C629.8 347.6 631.7 356.1 632.8 365.6C633.8 375.2 635.9 386.3 634.2 395.9C632.5 405.5 624.7 418.6 622.7 423.1" stroke="#3f2c24" stroke-width="0.9" opacity="0.56"/>
<path d="M622.2 272.0C623.8 278.4 629.0 299.4 631.4 310.3C633.8 321.2 634.9 328.2 636.5 337.2C638.1 346.1 639.8 354.5 641.0 364.0C642.2 373.6 644.9 384.8 643.7 394.4C642.5 403.9 635.9 412.3 634.0 421.5C632.0 430.8 631.6 440.7 632.0 450.0C632.4 459.4 634.7 468.9 636.4 477.7C638.2 486.4 642.0 492.9 642.4 502.5C642.7 512.0 639.1 529.7 638.5 535.2" stroke="#6e4838" stroke-width="1.8" opacity="0.51"/>
<path d="M577.2 221.8C577.8 226.3 579.2 238.8 580.8 248.4C582.3 258.1 584.6 268.7 586.5 279.7C588.4 290.8 590.9 304.6 592.2 314.9C593.5 325.3 593.9 332.9 594.4 341.9C594.8 351.0 595.2 359.7 594.9 369.4C594.6 379.0 594.8 390.0 592.6 399.6C590.5 409.2 585.1 417.5 582.2 426.8C579.3 436.1 576.4 450.6 575.3 455.3" stroke="#3f2c24" stroke-width="1.7" opacity="0.54"/>
<path d="M448.9 135.6C447.0 138.7 441.3 147.2 437.7 154.3C434.0 161.4 430.3 169.8 426.8 178.0C423.3 186.2 419.7 195.0 416.7 203.7C413.6 212.4 410.7 221.0 408.4 230.1C406.1 239.3 403.7 253.7 402.7 258.5" stroke="#684838" stroke-width="1.1" opacity="0.34"/>
<path d="M588.3 482.1C588.9 486.1 591.6 497.2 591.4 506.2C591.2 515.3 588.0 531.3 587.3 536.4" stroke="#8a7060" stroke-width="1.1" opacity="0.72"/>
<path d="M403.2 209.1C402.0 213.4 398.3 225.8 396.0 234.8C393.7 243.7 391.5 253.3 389.5 262.7C387.5 272.1 385.0 282.7 384.1 291.1C383.3 299.5 384.0 306.3 384.5 313.3C385.0 320.4 387.1 325.6 387.3 333.3C387.6 340.9 386.7 350.1 386.1 359.4C385.5 368.7 384.4 379.1 383.6 389.1C382.9 399.1 381.8 414.4 381.5 419.5" stroke="#82664f" stroke-width="1.4" opacity="0.71"/>
<path d="M550.6 142.9C553.0 146.3 561.0 156.2 564.9 163.5C568.9 170.7 572.3 178.6 574.5 186.1C576.7 193.7 577.4 201.2 578.2 209.0C579.1 216.9 578.4 224.3 579.8 233.3C581.3 242.2 584.5 251.9 586.9 262.6C589.4 273.2 592.5 286.0 594.6 297.1C596.7 308.2 598.7 319.7 599.7 329.2C600.6 338.8 600.2 350.1 600.4 354.3" stroke="#5f4c43" stroke-width="0.9" opacity="0.65"/>
<path d="M594.0 200.7C594.3 204.8 594.2 215.9 596.0 225.3C597.9 234.7 602.1 245.7 605.3 257.1C608.5 268.6 612.2 282.2 615.1 293.8C618.0 305.5 620.7 317.3 622.7 326.9C624.6 336.5 625.4 342.4 626.7 351.5C628.0 360.6 630.8 371.8 630.4 381.6C630.1 391.4 627.0 400.9 624.5 410.2C622.0 419.5 616.8 433.0 615.3 437.6" stroke="#6e4838" stroke-width="0.8" opacity="0.55"/>
<path d="M413.6 347.9C414.7 351.5 417.8 362.0 420.0 369.2C422.2 376.5 425.1 383.7 426.9 391.4C428.8 399.1 430.3 407.0 431.2 415.2C432.1 423.4 432.2 432.2 432.3 440.7C432.5 449.1 432.4 457.3 432.1 465.7C431.9 474.1 431.4 481.6 430.9 490.9C430.4 500.3 429.7 512.1 429.1 521.6C428.5 531.1 427.6 543.6 427.3 548.0" stroke="#44352e" stroke-width="1.0" opacity="0.64"/>
<path d="M434.2 465.4C434.0 469.6 433.8 481.3 433.1 490.7C432.5 500.0 431.3 511.9 430.2 521.5C429.2 531.0 427.5 543.6 427.0 548.0" stroke="#4e3e35" stroke-width="1.7" opacity="0.42"/>
<path d="M622.7 339.1C623.5 343.6 626.2 356.7 627.4 366.2C628.5 375.8 631.0 386.9 629.6 396.5C628.3 406.1 621.6 414.4 619.3 423.7C617.1 433.0 616.5 447.5 616.0 452.2" stroke="#2a1f1b" stroke-width="1.9" opacity="0.37"/>
<path d="M630.2 291.0C631.6 296.7 636.5 315.2 638.7 324.9C640.9 334.5 641.7 339.9 643.4 348.9C645.0 357.9 648.5 369.2 648.5 379.0C648.5 388.8 645.8 398.3 643.6 407.6C641.3 416.9 635.9 425.5 634.8 434.9C633.8 444.3 636.8 458.9 637.2 463.8" stroke="#8b6350" stroke-width="1.1" opacity="0.56"/>
<path d="M562.1 359.8C559.3 364.6 549.9 377.7 545.7 388.5C541.5 399.3 539.1 413.0 537.0 424.6C534.9 436.3 533.9 447.7 532.9 458.2C531.9 468.7 531.6 478.4 531.0 487.4C530.3 496.3 529.8 503.5 529.1 512.0C528.4 520.5 527.2 533.9 526.8 538.3" stroke="#2a201c" stroke-width="2.2" opacity="0.68"/>
<path d="M592.0 385.0C590.5 389.7 586.6 404.2 583.4 413.6C580.2 422.9 575.1 431.6 572.6 440.9C570.2 450.3 568.9 460.9 568.5 469.9C568.2 478.9 570.3 486.5 570.7 495.0C571.1 503.6 571.0 517.0 571.1 521.4" stroke="#a8947f" stroke-width="2.0" opacity="0.73"/>
<path d="M519.5 120.2C522.9 122.7 533.9 129.4 540.2 135.1C546.4 140.7 552.3 147.2 557.1 153.9C561.9 160.7 566.0 168.1 569.1 175.6C572.2 183.1 574.6 191.2 575.8 198.9C576.9 206.5 575.3 213.2 576.0 221.4C576.7 229.6 579.4 243.7 580.1 248.1" stroke="#4a413d" stroke-width="1.6" opacity="0.67"/>
<path d="M451.7 110.0C449.4 112.4 442.4 119.0 438.1 124.6C433.8 130.2 429.4 136.3 425.8 143.6C422.1 151.0 419.1 160.1 416.1 168.8C413.0 177.4 410.4 186.8 407.5 195.5C404.7 204.2 402.0 212.2 399.1 220.8C396.3 229.5 393.4 238.1 390.3 247.3C387.3 256.5 383.2 267.1 380.8 276.3C378.5 285.4 377.1 297.8 376.3 302.1" stroke="#573a2d" stroke-width="1.3" opacity="0.72"/>
<path d="M610.2 313.1C611.3 317.6 614.6 331.2 616.3 340.3C618.0 349.4 619.7 358.0 620.4 367.6C621.2 377.2 622.7 388.3 620.7 397.9C618.7 407.4 611.3 415.8 608.6 425.1C605.8 434.3 604.3 444.3 604.1 453.6C603.8 462.9 606.6 476.5 607.1 481.1" stroke="#4d3329" stroke-width="1.9" opacity="0.40"/>
<path d="M378.3 418.8C377.7 423.8 375.1 439.1 374.5 448.8C373.9 458.6 374.0 468.1 374.7 477.3C375.4 486.4 376.6 495.1 378.7 503.7C380.8 512.4 384.5 521.8 387.3 529.2C390.1 536.6 394.0 544.9 395.3 548.0" stroke="#4e3e35" stroke-width="1.0" opacity="0.53"/>
<path d="M582.5 319.8C581.9 324.8 581.4 339.8 579.1 349.5C576.8 359.2 572.2 368.2 568.5 378.2C564.8 388.1 560.4 398.7 557.0 409.2C553.7 419.8 549.6 436.2 548.2 441.6" stroke="#8b6350" stroke-width="1.9" opacity="0.63"/>
<path d="M578.0 155.0C580.1 158.7 587.4 170.1 590.4 177.7C593.5 185.2 594.9 192.4 596.3 200.3C597.8 208.1 597.2 215.3 599.0 224.8C600.9 234.2 604.7 245.3 607.4 256.8C610.1 268.3 613.1 282.0 615.5 293.6C617.9 305.3 620.8 321.2 621.9 326.7" stroke="#5f4c43" stroke-width="0.9" opacity="0.59"/>
<path d="M460.8 122.8C459.0 125.2 453.6 131.9 449.9 137.4C446.2 143.0 442.2 149.1 438.5 156.2C434.8 163.3 431.1 171.8 427.6 180.0C424.1 188.3 420.5 197.2 417.4 206.0C414.4 214.8 411.5 223.7 409.3 233.0C407.1 242.4 405.1 257.2 404.2 262.1" stroke="#775846" stroke-width="0.7" opacity="0.47"/>
<path d="M430.4 146.3C428.4 150.3 422.0 162.3 418.3 170.7C414.5 179.1 411.0 188.2 408.1 196.8C405.1 205.4 402.8 213.5 400.5 222.1C398.3 230.8 396.6 239.4 394.5 248.6C392.5 257.9 389.9 268.5 388.3 277.6C386.7 286.8 385.2 295.9 385.0 303.5C384.7 311.1 386.6 316.1 387.0 323.2C387.5 330.2 387.7 342.1 387.8 345.8" stroke="#4e3427" stroke-width="2.1" opacity="0.52"/>
<path d="M579.5 264.4C580.5 270.0 584.1 286.9 585.8 297.7C587.5 308.5 589.2 319.6 589.8 329.1C590.4 338.5 589.8 345.3 589.3 354.6C588.7 363.8 588.4 374.8 586.7 384.6C584.9 394.4 581.7 403.9 578.8 413.4C575.8 422.8 571.3 431.7 568.9 441.2C566.5 450.6 565.0 461.2 564.3 470.2C563.7 479.3 565.1 486.9 565.1 495.5C565.1 504.0 564.3 517.3 564.2 521.7" stroke="#8b6350" stroke-width="1.5" opacity="0.46"/>
<path d="M510.1 97.1C513.3 99.0 522.6 103.5 529.5 108.2C536.3 112.8 544.2 118.9 551.1 124.9C558.0 130.9 564.9 137.3 570.8 144.2C576.8 151.0 582.4 158.3 586.7 165.7C591.1 173.2 595.1 185.1 596.8 188.9" stroke="#36363a" stroke-width="0.8" opacity="0.31"/>
<path d="M418.4 205.0C417.1 209.4 412.7 222.5 410.3 231.7C407.9 241.0 405.8 250.8 404.0 260.5C402.3 270.1 400.4 280.7 399.8 289.6C399.1 298.5 400.1 309.8 400.2 313.9" stroke="#452e24" stroke-width="1.8" opacity="0.64"/>
<path d="M589.6 426.4C588.4 431.1 584.1 445.6 582.7 454.9C581.4 464.3 581.2 473.8 581.5 482.4C581.8 491.0 584.6 497.5 584.5 506.5C584.4 515.5 581.5 531.5 580.9 536.5" stroke="#96816f" stroke-width="1.4" opacity="0.33"/>
<path d="M583.5 232.1C584.7 237.1 588.2 251.1 590.5 261.8C592.8 272.6 595.5 285.5 597.5 296.7C599.4 307.9 601.2 319.4 602.2 328.9C603.3 338.5 603.2 344.8 603.7 354.0C604.1 363.2 605.7 374.3 604.9 384.1C604.0 393.9 601.3 403.3 598.8 412.7C596.2 422.0 591.2 435.5 589.7 440.0" stroke="#3f2c24" stroke-width="0.8" opacity="0.65"/>
<path d="M515.2 88.7C519.0 90.6 530.2 95.4 537.8 100.2C545.5 105.1 553.8 111.8 561.1 118.0C568.4 124.2 575.6 130.6 581.7 137.5C587.7 144.3 594.9 155.4 597.5 159.0" stroke="#1d1d20" stroke-width="0.8" opacity="0.51"/>
<path d="M433.9 120.1C431.7 123.3 424.6 131.9 420.6 139.5C416.6 147.1 413.3 156.7 410.0 165.6C406.6 174.5 403.6 184.3 400.4 193.1C397.3 201.9 394.2 209.9 391.0 218.5C387.9 227.1 384.9 235.7 381.6 244.9C378.3 254.2 373.9 264.9 371.3 274.1C368.8 283.2 366.5 292.4 366.4 300.0C366.2 307.6 369.8 316.4 370.5 319.6" stroke="#4e3427" stroke-width="0.8" opacity="0.34"/>
<path d="M504.8 105.2C507.7 107.0 516.1 111.5 522.6 115.8C529.1 120.2 537.0 125.6 543.6 131.3C550.1 137.1 556.6 143.6 562.0 150.4C567.4 157.1 572.3 164.5 576.0 172.0C579.7 179.5 582.9 191.4 584.3 195.2" stroke="#222225" stroke-width="1.6" opacity="0.33"/>
<path d="M482.0 82.7C485.8 82.8 497.4 81.6 505.0 83.1C512.5 84.5 519.6 87.6 527.3 91.5C535.0 95.4 543.4 101.0 551.3 106.7C559.1 112.4 567.3 119.2 574.4 125.7C581.5 132.3 590.6 142.7 593.8 146.1" stroke="#28282b" stroke-width="1.7" opacity="0.53"/>
<path d="M388.8 436.4C388.8 441.3 388.3 456.2 388.9 465.4C389.5 474.6 390.8 483.0 392.2 491.5C393.7 500.0 395.4 508.2 397.5 516.4C399.5 524.5 403.3 536.2 404.5 540.2" stroke="#5f4c40" stroke-width="1.0" opacity="0.37"/>
<path d="M546.6 110.7C550.1 113.9 561.1 123.0 567.7 129.5C574.4 136.1 581.0 142.7 586.4 149.9C591.8 157.1 596.8 165.2 600.2 172.7C603.6 180.1 605.2 187.0 606.8 194.6C608.4 202.3 607.7 209.0 609.8 218.6C611.9 228.3 616.1 240.4 619.2 252.5C622.3 264.6 627.0 284.6 628.5 291.1" stroke="#231e1c" stroke-width="0.8" opacity="0.71"/>
<path d="M578.6 365.1C576.9 370.1 571.8 384.5 568.2 394.7C564.6 404.8 560.0 415.6 557.0 426.0C553.9 436.4 551.5 447.0 550.0 456.9C548.6 466.7 548.1 476.4 548.0 485.2C547.9 493.9 549.6 500.8 549.4 509.5C549.3 518.2 547.6 532.8 547.2 537.5" stroke="#8a7060" stroke-width="2.1" opacity="0.34"/>
<path d="M563.6 133.0C566.6 136.4 576.4 146.2 581.5 153.4C586.6 160.6 591.2 168.6 594.2 176.1C597.2 183.7 598.4 190.8 599.6 198.6C600.9 206.3 601.3 218.8 601.7 222.9" stroke="#5c524e" stroke-width="1.0" opacity="0.36"/>
<path d="M360.4 272.1C359.3 276.5 354.2 290.8 353.8 298.5C353.4 306.1 356.7 310.9 357.9 318.0C359.1 325.1 360.8 332.3 360.9 341.3C361.0 350.3 359.1 366.8 358.7 371.9" stroke="#573a2d" stroke-width="1.0" opacity="0.72"/>
<path d="M523.8 132.0C526.6 134.6 535.7 141.7 540.8 147.7C545.9 153.6 550.6 160.6 554.4 167.8C558.3 175.0 561.6 183.1 563.9 190.8C566.2 198.4 567.1 205.8 568.1 213.6C569.1 221.3 568.6 228.5 569.8 237.1C571.0 245.8 573.4 255.8 575.3 265.4C577.3 275.0 579.9 285.0 581.5 294.7C583.0 304.5 584.3 318.9 584.8 323.7" stroke="#3b2f2a" stroke-width="2.1" opacity="0.55"/>
<path d="M454.6 111.1C452.3 113.5 445.7 120.1 441.2 125.7C436.7 131.3 431.7 137.4 427.5 144.7C423.2 152.0 419.4 161.0 415.9 169.5C412.4 178.1 409.3 187.4 406.6 196.0C403.8 204.6 401.6 212.7 399.3 221.3C396.9 230.0 395.0 238.6 392.7 247.8C390.3 257.1 387.0 267.7 385.0 276.8C383.0 285.9 381.3 298.4 380.6 302.7" stroke="#775846" stroke-width="1.8" opacity="0.33"/>
<path d="M564.8 394.3C563.0 399.5 556.7 415.5 554.0 425.9C551.3 436.4 549.7 447.1 548.8 457.0C547.9 466.9 548.2 476.5 548.5 485.3C548.7 494.1 550.4 501.0 550.2 509.7C549.9 518.4 547.5 532.9 546.9 537.5" stroke="#6a5447" stroke-width="1.0" opacity="0.31"/>
<path d="M357.7 317.9C358.5 321.8 361.9 332.2 362.3 341.2C362.7 350.2 361.1 361.8 360.0 371.9C358.9 382.0 357.3 392.3 355.7 402.0C354.2 411.6 351.9 420.5 350.5 429.8C349.1 439.1 347.9 448.4 347.5 457.9C347.1 467.3 347.2 477.2 348.3 486.5C349.5 495.8 351.7 504.9 354.6 513.7C357.5 522.6 364.0 535.2 365.9 539.5" stroke="#634e43" stroke-width="1.8" opacity="0.59"/>
<path d="M550.2 142.4C552.8 145.8 561.3 155.7 565.7 162.9C570.1 170.1 574.1 178.0 576.6 185.6C579.1 193.2 580.0 204.7 580.7 208.5" stroke="#857a73" stroke-width="0.8" opacity="0.43"/>
<path d="M377.9 321.3C378.5 325.1 381.0 335.5 381.5 344.1C381.9 352.7 381.2 363.3 380.6 373.1C380.0 383.0 379.1 393.1 378.0 403.2C376.8 413.2 374.8 423.5 373.8 433.4C372.7 443.3 371.7 453.1 371.5 462.7C371.4 472.2 371.7 481.7 372.8 490.7C373.9 499.7 375.8 508.3 378.3 516.6C380.8 524.8 386.3 536.3 387.9 540.3" stroke="#634e43" stroke-width="2.0" opacity="0.73"/>
<path d="M448.0 424.0C448.3 428.0 449.5 439.8 449.4 447.9C449.4 455.9 448.6 463.6 447.6 472.4C446.6 481.2 444.1 496.0 443.4 500.7" stroke="#44352e" stroke-width="1.9" opacity="0.38"/>
<path d="M623.2 367.1C623.4 372.2 626.0 387.8 624.2 397.4C622.4 407.0 615.2 415.3 612.5 424.6C609.8 433.9 608.2 443.8 607.9 453.1C607.6 462.5 609.3 472.0 610.7 480.6C612.1 489.2 615.9 495.6 616.5 504.8C617.1 514.1 614.5 530.7 614.1 535.9" stroke="#96816f" stroke-width="1.2" opacity="0.63"/>
<path d="M620.9 352.1C621.8 357.1 626.1 372.3 626.4 382.1C626.7 391.9 624.6 401.4 622.6 410.7C620.6 420.1 615.6 428.7 614.2 438.1C612.8 447.5 613.7 458.0 614.4 467.0C615.0 476.1 617.3 483.5 617.9 492.2C618.6 500.9 618.2 514.9 618.2 519.4" stroke="#2a201c" stroke-width="2.1" opacity="0.59"/>
<path d="M626.0 270.9C627.8 277.4 633.9 298.7 636.6 309.7C639.3 320.6 640.7 327.6 642.3 336.6C643.9 345.5 645.4 353.9 646.4 363.4C647.4 372.9 649.7 384.2 648.2 393.8C646.8 403.4 639.4 416.4 637.7 420.9" stroke="#3f2c24" stroke-width="1.9" opacity="0.70"/>
<path d="M398.3 286.5C398.3 290.7 397.7 303.9 398.5 311.3C399.3 318.7 401.6 324.2 403.0 331.1C404.4 338.0 405.9 344.8 406.9 352.6C407.9 360.4 408.4 369.2 409.0 377.8C409.5 386.5 410.1 395.3 410.2 404.4C410.3 413.6 409.8 428.1 409.7 432.9" stroke="#806c5e" stroke-width="1.2" opacity="0.35"/>
<path d="M594.9 174.9C595.7 178.6 598.5 189.4 600.0 197.1C601.4 204.9 601.0 211.8 603.4 221.3C605.8 230.9 610.7 242.6 614.2 254.4C617.8 266.2 621.8 280.3 624.8 292.2C627.8 304.1 630.5 316.1 632.4 325.7C634.3 335.3 635.5 345.9 636.2 349.9" stroke="#2b2320" stroke-width="0.8" opacity="0.61"/>
<path d="M506.6 101.9C509.9 103.7 519.5 108.3 526.3 112.7C533.2 117.2 541.2 122.9 547.9 128.7C554.5 134.6 563.1 144.7 566.1 147.9" stroke="#151517" stroke-width="1.0" opacity="0.45"/>
<path d="M511.5 112.9C514.6 115.0 523.8 120.7 530.1 125.7C536.4 130.7 543.4 136.4 549.2 142.7C555.1 149.0 560.5 156.1 565.0 163.3C569.5 170.5 573.7 178.4 576.2 186.0C578.8 193.6 579.7 201.0 580.5 208.8C581.4 216.7 580.2 224.2 581.2 233.1C582.2 242.0 585.8 257.6 586.7 262.5" stroke="#675d57" stroke-width="1.7" opacity="0.66"/>
<path d="M374.4 289.5C374.4 293.2 373.6 304.7 374.5 311.7C375.3 318.7 378.6 323.9 379.7 331.6C380.7 339.3 380.9 348.7 380.8 358.1C380.7 367.5 379.9 378.1 379.0 388.1C378.2 398.1 376.8 408.2 375.5 418.2C374.3 428.2 372.5 438.3 371.7 448.1C370.9 457.9 370.6 467.6 371.0 476.8C371.4 486.1 372.0 495.0 373.9 503.7C375.8 512.4 380.8 525.0 382.2 529.2" stroke="#1e1815" stroke-width="2.0" opacity="0.52"/>
<path d="M354.0 487.5C354.9 492.0 356.6 505.8 359.1 514.5C361.7 523.2 367.5 535.5 369.2 539.7" stroke="#191412" stroke-width="1.6" opacity="0.69"/>
<path d="M386.8 203.0C385.0 207.2 379.9 219.5 376.3 228.4C372.6 237.4 368.3 247.3 364.7 256.9C361.0 266.5 355.9 277.5 354.2 286.1C352.5 294.7 353.3 301.4 354.3 308.4C355.3 315.5 359.2 320.4 360.0 328.3C360.9 336.3 360.2 346.2 359.6 356.1C358.9 365.9 356.7 382.2 356.1 387.4" stroke="#4e3427" stroke-width="0.9" opacity="0.67"/>
<path d="M582.1 219.1C583.0 223.6 585.4 236.4 587.6 246.3C589.7 256.2 592.8 267.1 595.0 278.4C597.3 289.7 599.7 303.7 601.0 314.2C602.4 324.6 602.7 332.1 603.2 341.2C603.8 350.3 604.2 359.0 604.2 368.6C604.3 378.2 605.2 389.3 603.4 398.9C601.6 408.5 596.0 416.8 593.7 426.1C591.4 435.4 590.0 445.3 589.5 454.6C588.9 463.9 590.1 477.5 590.2 482.1" stroke="#5a3a2d" stroke-width="1.8" opacity="0.60"/>
<path d="M581.0 154.1C582.9 157.9 590.0 169.3 592.7 176.8C595.4 184.4 596.2 191.5 597.3 199.3C598.4 207.2 597.4 214.3 599.2 223.8C601.0 233.2 605.0 244.5 608.1 256.1C611.2 267.7 614.8 281.5 617.7 293.2C620.6 304.9 624.3 320.9 625.6 326.4" stroke="#907d74" stroke-width="0.8" opacity="0.60"/>
<path d="M472.6 101.4C471.2 103.3 467.6 108.5 464.5 112.7C461.4 116.9 457.7 121.4 453.8 126.4C449.9 131.4 445.3 136.6 441.3 142.9C437.3 149.1 433.5 156.4 430.0 164.1C426.5 171.8 423.1 180.6 420.1 189.1C417.1 197.5 413.4 210.5 412.1 214.8" stroke="#36363a" stroke-width="0.9" opacity="0.47"/>
<path d="M407.8 252.1C407.3 257.2 404.9 273.4 404.6 282.8C404.2 292.3 404.6 301.2 405.6 309.0C406.7 316.9 409.0 323.1 410.9 329.9C412.9 336.7 415.2 342.9 417.2 349.6C419.3 356.3 421.1 363.3 423.3 370.3C425.4 377.3 428.0 384.2 429.9 391.5C431.8 398.9 433.5 406.5 434.7 414.4C435.8 422.3 436.6 435.0 437.0 439.1" stroke="#725d50" stroke-width="1.7" opacity="0.47"/>
<path d="M392.7 305.3C393.1 308.6 394.3 318.0 394.8 325.0C395.3 332.1 395.7 339.1 395.7 347.6C395.6 356.0 394.9 366.0 394.5 375.6C394.1 385.3 393.7 395.4 393.2 405.6C392.8 415.8 391.8 426.8 391.7 436.9C391.6 446.9 392.0 456.7 392.7 465.8C393.4 474.9 394.7 483.2 395.9 491.6C397.2 500.0 399.4 512.2 400.1 516.3" stroke="#44352e" stroke-width="1.3" opacity="0.47"/>
<path d="M501.2 111.8C503.9 113.5 511.7 118.0 517.9 122.1C524.1 126.3 532.2 131.1 538.3 136.6C544.5 142.2 550.2 148.7 554.9 155.5C559.5 162.2 564.4 173.6 566.3 177.2" stroke="#1d1d20" stroke-width="0.9" opacity="0.50"/>
<path d="M370.5 342.3C370.0 347.3 368.6 362.2 367.6 372.2C366.6 382.1 365.6 392.4 364.6 402.3C363.5 412.1 362.2 421.7 361.5 431.4C360.8 441.1 360.6 455.5 360.4 460.3" stroke="#342924" stroke-width="1.3" opacity="0.43"/>
<path d="M384.4 373.9C384.0 378.9 383.1 393.8 382.2 403.9C381.3 414.0 379.7 424.5 379.0 434.4C378.3 444.4 377.8 454.2 378.0 463.6C378.1 473.0 379.6 486.4 379.9 491.0" stroke="#1e1815" stroke-width="1.1" opacity="0.62"/>
<path d="M603.8 313.8C604.4 318.3 606.3 331.8 607.3 340.9C608.3 350.0 609.4 358.7 609.7 368.3C610.1 377.9 611.5 389.0 609.7 398.6C608.0 408.1 601.8 416.5 599.3 425.7C596.9 435.0 595.6 449.5 594.9 454.3" stroke="#6e4838" stroke-width="1.2" opacity="0.61"/>
<path d="M344.0 442.4C344.0 447.2 343.5 461.4 343.8 470.8C344.1 480.2 344.3 489.5 345.9 498.8C347.5 508.1 350.9 518.6 353.5 526.8C356.1 535.0 360.3 544.5 361.6 548.0" stroke="#5f4c40" stroke-width="1.5" opacity="0.74"/>
<path d="M624.6 366.6C624.9 371.6 628.0 387.3 626.8 396.9C625.5 406.4 619.1 414.8 616.9 424.1C614.8 433.3 614.0 443.2 614.0 452.6C613.9 461.9 615.5 471.5 616.7 480.1C617.9 488.7 621.1 495.1 621.2 504.4C621.2 513.7 617.7 530.6 617.0 535.8" stroke="#2a201c" stroke-width="1.6" opacity="0.49"/>
<path d="M614.3 327.8C614.9 332.0 616.6 343.6 617.9 352.8C619.1 361.9 622.0 373.1 621.7 382.9C621.4 392.6 618.7 402.1 616.3 411.5C613.9 420.8 608.6 429.4 607.3 438.8C605.9 448.2 607.1 458.8 608.0 467.8C609.0 476.8 611.9 484.2 612.9 492.8C613.9 501.5 614.7 510.6 614.0 519.8C613.3 529.0 609.5 543.3 608.6 548.0" stroke="#2a201c" stroke-width="1.5" opacity="0.46"/>
<path d="M389.5 305.2C390.0 308.5 391.3 317.9 392.3 324.9C393.2 332.0 394.7 339.0 395.3 347.4C396.0 355.9 396.1 365.9 396.1 375.6C396.0 385.2 395.8 395.3 395.1 405.5C394.5 415.7 392.8 426.7 392.0 436.8C391.3 446.8 390.9 460.9 390.7 465.7" stroke="#1e1815" stroke-width="1.5" opacity="0.68"/>
<path d="M622.1 397.4C620.5 402.0 614.7 415.3 612.8 424.6C610.8 433.9 610.2 443.8 610.3 453.2C610.3 462.5 612.0 472.0 613.1 480.7C614.3 489.3 617.2 495.6 617.0 504.9C616.8 514.1 612.9 530.8 612.1 535.9" stroke="#8a7060" stroke-width="1.6" opacity="0.63"/>
<path d="M571.4 127.0C574.8 130.4 585.9 140.1 591.6 147.3C597.3 154.5 602.3 162.7 605.6 170.1C608.9 177.6 610.0 184.2 611.4 191.8C612.7 199.3 611.5 205.7 613.5 215.4C615.5 225.2 619.9 237.9 623.4 250.3C626.8 262.7 630.7 277.4 634.1 289.7C637.5 302.0 642.1 318.2 643.7 324.0" stroke="#5f4c43" stroke-width="1.6" opacity="0.66"/>
<path d="M544.3 170.5C545.4 174.4 548.8 186.1 550.5 193.8C552.3 201.5 553.4 209.0 554.9 216.7C556.5 224.3 557.5 231.3 559.6 239.8C561.8 248.2 566.5 262.9 567.9 267.6" stroke="#4a3a33" stroke-width="1.8" opacity="0.35"/>
<path d="M625.3 270.8C627.2 277.3 633.8 298.7 636.8 309.6C639.9 320.6 641.7 327.6 643.6 336.5C645.5 345.5 647.2 353.8 648.1 363.3C649.1 372.9 651.1 384.2 649.4 393.7C647.7 403.3 640.1 411.6 637.7 420.8C635.4 430.1 634.7 439.9 635.3 449.2C635.8 458.5 640.0 472.2 641.0 476.8" stroke="#2a1f1b" stroke-width="1.6" opacity="0.74"/>
<path d="M555.7 103.0C559.3 106.2 570.8 115.7 577.7 122.3C584.6 128.9 591.4 135.4 597.0 142.6C602.5 149.8 607.5 158.2 611.0 165.5C614.6 172.8 616.3 179.1 618.3 186.5C620.2 193.9 620.0 199.7 622.9 209.7C625.8 219.6 631.6 233.4 635.7 246.3C639.8 259.2 645.5 280.4 647.5 287.3" stroke="#37302d" stroke-width="1.7" opacity="0.61"/>
<path d="M529.0 142.9C531.2 145.7 538.3 153.5 541.9 159.9C545.5 166.3 548.3 173.7 550.5 181.3C552.8 188.9 554.1 197.6 555.3 205.3C556.5 212.9 556.4 219.2 557.8 227.2C559.2 235.2 561.5 244.6 563.8 253.3C566.2 262.0 569.4 271.5 571.8 279.2C574.1 287.0 576.8 296.3 577.8 299.7" stroke="#4a3a33" stroke-width="1.6" opacity="0.48"/>
<path d="M417.6 226.6C416.5 231.5 412.6 246.1 410.9 256.3C409.2 266.5 407.7 278.4 407.2 287.9C406.7 297.5 407.0 305.8 408.1 313.5C409.2 321.1 411.6 327.3 413.8 334.0C416.1 340.6 418.8 347.1 421.7 353.6C424.6 360.0 427.8 366.5 431.0 372.8C434.3 379.2 439.7 388.6 441.4 391.8" stroke="#573a2d" stroke-width="1.0" opacity="0.68"/>
<path d="M410.9 344.7C411.5 348.5 413.6 359.4 414.8 367.2C416.1 374.9 417.4 382.9 418.2 391.2C419.0 399.5 419.5 408.1 419.9 416.8C420.3 425.5 420.2 434.9 420.6 443.6C421.0 452.3 422.0 464.9 422.2 469.1" stroke="#44352e" stroke-width="1.0" opacity="0.55"/>
<path d="M572.9 266.3C573.9 270.6 577.9 283.2 579.2 291.9C580.6 300.6 581.5 309.1 580.9 318.5C580.3 328.0 578.4 339.0 575.6 348.8C572.7 358.6 567.5 367.3 563.8 377.3C560.2 387.3 556.3 397.9 553.5 408.7C550.6 419.4 547.9 436.2 546.7 441.7" stroke="#8b6350" stroke-width="1.3" opacity="0.49"/>
<path d="M549.6 108.8C553.3 111.9 565.0 121.1 571.7 127.7C578.5 134.2 585.0 140.9 590.2 148.0C595.4 155.2 599.8 163.4 602.8 170.9C605.9 178.3 607.0 185.0 608.5 192.6C610.0 200.1 609.3 206.6 611.7 216.3C614.1 226.0 619.2 238.6 622.9 250.9C626.6 263.2 630.8 277.9 634.1 290.1C637.5 302.3 641.5 318.5 642.9 324.2" stroke="#70665f" stroke-width="1.9" opacity="0.35"/>
<path d="M595.7 341.8C595.7 346.4 596.1 359.6 595.8 369.3C595.4 378.9 595.6 389.9 593.5 399.5C591.4 409.1 586.1 417.4 583.4 426.7C580.7 436.0 578.6 445.9 577.4 455.2C576.2 464.6 576.4 478.2 576.2 482.8" stroke="#6e4838" stroke-width="1.5" opacity="0.48"/>
<path d="M514.2 127.6C517.1 129.8 526.6 135.4 531.9 140.5C537.3 145.6 542.3 151.7 546.5 158.2C550.6 164.8 554.1 172.2 556.8 179.8C559.5 187.3 561.4 195.8 562.7 203.4C563.9 211.1 563.2 217.5 564.3 225.5C565.4 233.6 567.1 242.7 569.1 251.7C571.1 260.7 573.9 270.7 576.1 279.7C578.3 288.8 581.4 296.9 582.3 306.1C583.2 315.3 581.8 330.1 581.7 334.9" stroke="#4a3a33" stroke-width="1.1" opacity="0.41"/>
<path d="M570.9 266.8C571.9 270.7 575.5 282.4 576.7 290.6C577.8 298.9 578.8 306.7 578.1 316.2C577.4 325.7 573.5 342.3 572.6 347.5" stroke="#2a1f1b" stroke-width="1.3" opacity="0.59"/>
<path d="M592.5 278.7C593.6 284.6 597.2 303.9 598.7 314.3C600.3 324.7 600.9 332.3 601.7 341.4C602.4 350.4 603.1 359.2 603.2 368.8C603.3 378.4 604.1 389.4 602.2 399.0C600.3 408.6 594.5 416.9 591.8 426.2C589.2 435.5 587.2 450.0 586.3 454.7" stroke="#4d3329" stroke-width="1.6" opacity="0.35"/>
<path d="M500.4 119.3C502.4 120.9 507.9 125.4 512.7 129.1C517.5 132.8 524.0 136.5 529.1 141.5C534.2 146.4 539.1 152.4 543.2 158.9C547.4 165.4 551.2 172.9 554.2 180.4C557.1 187.9 559.5 196.6 561.0 204.2C562.5 211.8 562.2 218.2 563.3 226.2C564.4 234.2 566.9 248.0 567.6 252.4" stroke="#5c524e" stroke-width="1.5" opacity="0.46"/>
<path d="M453.4 98.2C451.1 100.4 444.5 106.3 440.0 111.3C435.4 116.3 430.5 121.5 426.2 128.2C421.8 134.8 417.8 142.6 414.0 151.1C410.2 159.6 405.1 174.3 403.3 179.0" stroke="#46464b" stroke-width="1.6" opacity="0.59"/>
<path d="M368.0 287.8C368.0 291.6 367.1 303.1 367.7 310.1C368.3 317.1 371.2 322.2 371.7 330.0C372.1 337.8 371.3 347.4 370.6 356.9C369.9 366.5 368.6 377.4 367.7 387.5C366.8 397.5 365.9 407.2 365.1 417.0C364.3 426.8 363.4 436.5 363.0 446.2C362.7 455.9 362.8 465.8 363.2 475.2C363.6 484.7 365.0 498.2 365.4 502.8" stroke="#44352e" stroke-width="1.5" opacity="0.48"/>
<path d="M574.9 172.1C576.3 176.0 582.0 187.7 583.6 195.4C585.3 203.1 583.8 209.8 584.6 218.2C585.5 226.6 586.9 235.7 588.7 245.6C590.5 255.6 593.2 266.6 595.5 278.0C597.7 289.4 600.3 303.4 602.1 313.9C603.9 324.4 605.1 331.9 606.2 341.0C607.4 350.1 608.7 358.8 609.2 368.4C609.7 378.0 609.2 393.6 609.2 398.6" stroke="#4a3a33" stroke-width="1.5" opacity="0.53"/>
<path d="M374.7 357.1C374.2 362.2 372.9 377.4 371.7 387.5C370.6 397.5 369.2 407.4 368.0 417.2C366.8 427.1 365.2 437.0 364.6 446.7C364.0 456.5 363.9 466.5 364.4 475.9C364.8 485.3 366.9 498.8 367.4 503.4" stroke="#1e1815" stroke-width="1.7" opacity="0.33"/>
<path d="M413.1 356.5C414.0 360.3 416.5 371.7 418.2 379.5C419.9 387.3 422.0 395.1 423.2 403.4C424.4 411.8 424.8 420.8 425.2 429.5C425.7 438.1 425.9 447.0 426.1 455.4C426.2 463.9 426.2 471.8 426.0 480.4C425.9 489.1 425.4 502.8 425.3 507.3" stroke="#806c5e" stroke-width="1.1" opacity="0.66"/>
<path d="M523.5 116.4C526.8 119.0 537.1 126.1 543.2 131.8C549.4 137.6 555.1 144.1 560.2 150.8C565.2 157.6 569.8 165.0 573.5 172.5C577.3 179.9 580.7 188.0 582.4 195.7C584.1 203.4 583.0 210.1 584.0 218.5C585.0 226.9 586.7 235.9 588.6 245.9C590.5 255.8 594.3 272.8 595.4 278.1" stroke="#675d57" stroke-width="1.2" opacity="0.47"/>
<path d="M470.2 82.1C468.3 83.3 463.2 86.1 458.8 89.3C454.3 92.4 448.4 96.3 443.3 100.8C438.3 105.3 433.3 110.1 428.3 116.0C423.4 121.9 418.1 128.3 413.6 136.0C409.1 143.8 405.2 153.5 401.4 162.5C397.6 171.5 392.5 185.6 390.7 190.2" stroke="#46464b" stroke-width="0.9" opacity="0.62"/>
<path d="M530.7 126.7C533.6 129.5 542.6 137.3 547.7 143.6C552.9 149.8 557.4 156.9 561.5 164.1C565.6 171.4 569.6 179.2 572.3 186.8C575.1 194.4 576.6 201.9 578.0 209.7C579.4 217.5 579.2 225.0 580.7 233.8C582.3 242.7 585.1 252.4 587.1 263.0C589.2 273.6 591.4 286.3 592.8 297.4C594.3 308.4 595.4 319.9 595.9 329.4C596.5 338.9 595.9 350.3 595.9 354.5" stroke="#3b2f2a" stroke-width="0.8" opacity="0.35"/>
<path d="M459.6 91.9C457.1 93.8 449.6 99.0 444.9 103.4C440.1 107.8 435.5 112.5 431.0 118.3C426.5 124.1 422.0 130.3 418.0 137.9C414.1 145.6 410.8 155.2 407.2 164.2C403.7 173.2 400.4 183.0 396.9 191.8C393.4 200.6 389.8 208.5 386.3 217.2C382.7 225.8 379.3 234.3 375.8 243.6C372.2 253.0 366.7 268.2 364.9 273.1" stroke="#1d1d20" stroke-width="1.3" opacity="0.58"/>
<path d="M541.9 116.3C545.1 119.4 555.2 128.1 561.1 134.5C567.0 140.9 572.6 147.8 577.3 154.9C582.1 162.1 586.6 170.1 589.7 177.6C592.9 185.2 594.5 192.4 596.2 200.2C597.8 208.1 597.5 215.3 599.5 224.7C601.5 234.2 605.5 245.3 608.2 256.8C611.0 268.2 613.8 282.0 616.0 293.6C618.3 305.3 620.8 321.2 621.8 326.7" stroke="#857a73" stroke-width="1.6" opacity="0.55"/>
<path d="M591.4 315.1C591.9 319.6 593.9 333.0 594.3 342.1C594.7 351.2 594.7 359.9 593.9 369.5C593.2 379.1 592.5 390.2 589.8 399.8C587.1 409.4 581.2 417.7 578.0 427.0C574.8 436.3 572.0 446.2 570.6 455.5C569.1 464.9 569.0 474.4 569.3 483.0C569.7 491.6 572.7 498.2 572.6 507.1C572.6 516.1 569.4 531.7 568.8 536.7" stroke="#6e4838" stroke-width="1.7" opacity="0.37"/>
<path d="M537.9 120.5C541.2 123.4 552.1 131.8 558.1 138.1C564.0 144.5 569.2 151.4 573.5 158.6C577.8 165.8 581.4 173.7 583.7 181.3C586.1 188.9 586.6 196.3 587.6 204.3C588.5 212.3 587.6 219.9 589.3 229.2C590.9 238.4 594.7 248.8 597.6 259.8C600.4 270.9 603.7 284.1 606.3 295.5C608.8 306.8 611.8 322.7 612.9 328.1" stroke="#3b2f2a" stroke-width="1.4" opacity="0.60"/>
<path d="M427.8 372.0C429.2 375.3 433.7 384.9 436.2 391.7C438.7 398.6 441.0 405.6 442.6 413.1C444.2 420.6 445.2 428.7 445.9 436.7C446.5 444.7 446.7 452.7 446.4 461.0C446.1 469.3 445.4 476.8 444.1 486.5C442.9 496.2 440.7 508.8 438.9 519.1C437.0 529.3 434.1 543.2 433.1 548.0" stroke="#725d50" stroke-width="1.0" opacity="0.63"/>
<path d="M560.9 150.7C563.1 154.3 570.2 164.8 573.8 172.3C577.3 179.8 580.5 187.9 582.1 195.6C583.8 203.2 582.5 210.0 583.6 218.4C584.7 226.7 587.8 241.2 588.6 245.8" stroke="#37302d" stroke-width="1.8" opacity="0.69"/>
<path d="M389.8 451.4C390.0 456.0 390.5 470.0 391.2 478.8C392.0 487.5 393.0 495.4 394.5 503.8C396.0 512.2 398.4 521.7 400.3 529.0C402.3 536.4 405.2 544.8 406.1 548.0" stroke="#3a2e29" stroke-width="0.8" opacity="0.42"/>
<path d="M467.1 88.5C464.7 90.1 457.5 94.3 452.8 98.0C448.0 101.8 443.3 106.2 438.6 111.2C434.0 116.2 429.1 121.4 425.0 128.0C420.8 134.7 417.2 142.5 413.7 151.0C410.1 159.4 405.5 174.2 403.9 178.9" stroke="#151517" stroke-width="1.4" opacity="0.72"/>
<path d="M600.6 468.3C601.2 472.5 603.6 484.7 604.5 493.3C605.4 502.0 606.5 511.1 606.1 520.2C605.6 529.3 602.5 543.4 601.8 548.0" stroke="#96816f" stroke-width="2.1" opacity="0.49"/>
<path d="M582.1 295.1C582.6 300.0 585.0 314.9 585.1 324.4C585.3 333.9 584.4 342.5 583.0 352.0C581.7 361.5 579.6 371.5 577.2 381.4C574.7 391.2 569.9 406.3 568.5 411.3" stroke="#2a1f1b" stroke-width="1.3" opacity="0.43"/>
<path d="M619.6 212.0C621.6 218.0 627.8 235.2 631.7 247.9C635.6 260.6 639.6 275.7 642.9 288.2C646.1 300.7 649.0 313.2 651.3 323.0C653.6 332.7 654.5 337.8 656.6 346.8C658.8 355.9 663.3 367.6 664.0 377.5C664.6 387.3 662.5 396.8 660.5 406.0C658.5 415.3 653.0 423.6 651.8 432.8C650.7 441.9 653.4 456.4 653.7 461.1" stroke="#9a7260" stroke-width="1.0" opacity="0.50"/>
<path d="M412.3 149.7C410.5 154.4 405.0 168.7 401.2 177.7C397.3 186.8 393.1 195.4 389.2 204.0C385.2 212.6 381.3 220.5 377.5 229.4C373.8 238.4 369.8 248.2 366.6 257.7C363.4 267.3 359.4 278.2 358.4 286.7C357.4 295.3 360.2 305.3 360.5 309.0" stroke="#452e24" stroke-width="1.7" opacity="0.75"/>
<path d="M552.8 106.3C556.6 109.5 568.7 118.8 575.6 125.4C582.4 132.0 588.9 138.6 594.0 145.8C599.1 153.0 603.2 161.2 606.1 168.6C609.0 176.0 610.0 182.5 611.5 190.0C613.0 197.5 612.4 203.7 615.2 213.5C617.9 223.4 623.6 236.4 627.8 249.0C632.0 261.5 636.8 276.5 640.4 288.9C644.1 301.3 648.3 317.6 649.9 323.4" stroke="#4a413d" stroke-width="2.0" opacity="0.33"/>
<path d="M390.1 189.8C388.4 194.0 383.2 206.5 379.7 215.1C376.2 223.8 373.0 232.3 369.2 241.7C365.5 251.1 359.3 266.6 357.3 271.6" stroke="#4e3427" stroke-width="1.2" opacity="0.57"/>
<path d="M652.0 393.5C650.2 398.0 643.3 411.3 641.0 420.5C638.8 429.8 638.3 439.5 638.8 448.8C639.3 458.1 641.9 467.6 644.0 476.3C646.1 485.0 650.6 491.2 651.4 501.0C652.1 510.7 648.9 529.1 648.4 534.7" stroke="#5a463b" stroke-width="1.9" opacity="0.46"/>
<path d="M640.6 308.7C641.6 313.2 644.8 326.7 646.9 335.7C648.9 344.7 651.3 353.0 652.9 362.6C654.5 372.2 657.7 383.6 656.6 393.2C655.5 402.8 648.5 410.9 646.3 420.1C644.2 429.3 643.4 439.0 643.6 448.3C643.8 457.5 645.8 466.9 647.5 475.6C649.2 484.2 653.1 490.3 653.6 500.2C654.1 510.0 651.0 528.7 650.5 534.4" stroke="#3f2c24" stroke-width="1.4" opacity="0.50"/>
<path d="M567.1 225.1C567.9 229.5 570.0 242.2 571.8 251.3C573.6 260.4 576.0 270.4 577.8 279.8C579.7 289.3 582.0 303.2 582.8 307.8" stroke="#2b2320" stroke-width="1.0" opacity="0.68"/>
<path d="M479.6 95.1C483.0 95.5 493.3 95.7 499.8 97.4C506.3 99.1 512.0 101.9 518.5 105.5C524.9 109.1 531.8 113.9 538.3 119.2C544.8 124.4 551.5 130.6 557.3 137.0C563.1 143.4 568.6 150.3 573.3 157.5C578.1 164.7 582.6 172.5 585.7 180.1C588.7 187.7 590.7 199.3 591.7 203.1" stroke="#56565b" stroke-width="1.9" opacity="0.38"/>
<path d="M489.1 107.0C491.5 108.1 498.8 110.5 503.6 113.2C508.4 115.9 512.5 119.4 517.7 123.5C523.0 127.5 529.7 132.2 535.1 137.6C540.5 143.1 545.4 149.5 549.9 156.3C554.4 163.0 558.6 170.4 562.1 177.9C565.6 185.4 568.9 193.6 570.7 201.2C572.6 208.9 572.8 219.9 573.2 223.6" stroke="#675d57" stroke-width="1.4" opacity="0.46"/>
<path d="M367.2 319.2C367.8 323.0 370.5 333.4 370.6 342.2C370.8 351.1 369.2 362.1 368.2 372.1C367.2 382.1 365.8 392.4 364.5 402.2C363.1 412.1 361.2 421.6 360.1 431.3C359.1 440.9 358.3 450.5 358.2 460.1C358.1 469.6 358.4 479.5 359.5 488.7C360.7 498.0 362.6 506.9 365.2 515.4C367.8 523.9 373.4 535.9 375.1 540.0" stroke="#806c5e" stroke-width="2.0" opacity="0.39"/>
<path d="M358.2 355.9C357.3 361.1 354.5 377.4 352.8 387.4C351.1 397.4 349.3 406.5 348.0 415.8C346.7 425.0 345.4 433.7 345.0 443.0C344.7 452.3 345.0 462.1 345.8 471.5C346.5 480.9 347.5 490.2 349.6 499.4C351.7 508.7 356.9 522.5 358.3 527.1" stroke="#725d50" stroke-width="1.9" opacity="0.42"/>
<path d="M558.6 226.9C559.7 231.2 562.8 244.3 565.2 253.0C567.7 261.7 571.1 271.4 573.4 279.3C575.7 287.3 578.8 292.2 579.2 300.8C579.7 309.3 578.6 320.6 576.1 330.6C573.6 340.6 568.9 351.0 564.3 360.8C559.6 370.6 550.7 384.8 548.0 389.6" stroke="#3f2c24" stroke-width="1.7" opacity="0.58"/>
<path d="M396.1 478.1C396.8 482.3 398.4 494.5 400.1 502.9C401.8 511.3 404.4 520.9 406.3 528.5C408.3 536.0 410.8 544.7 411.7 548.0" stroke="#1d1715" stroke-width="1.8" opacity="0.41"/>
<path d="M597.2 439.6C597.0 444.4 595.9 459.6 596.4 468.6C596.8 477.6 599.2 485.0 599.8 493.6C600.4 502.3 600.9 511.3 600.1 520.4C599.2 529.4 595.5 543.4 594.5 548.0" stroke="#2a201c" stroke-width="2.1" opacity="0.37"/>
<path d="M565.3 163.1C567.1 166.8 573.4 178.1 575.8 185.7C578.3 193.3 579.1 200.8 580.0 208.6C580.9 216.5 580.0 224.0 581.3 232.9C582.6 241.9 585.4 251.7 587.7 262.4C589.9 273.0 592.7 285.9 594.7 297.0C596.7 308.1 598.7 319.6 599.8 329.1C600.9 338.7 601.0 345.0 601.4 354.2C601.7 363.4 601.9 379.3 602.0 384.3" stroke="#3b2f2a" stroke-width="1.8" opacity="0.55"/>
<path d="M392.9 306.5C393.5 309.8 395.1 319.3 396.1 326.3C397.1 333.3 398.4 340.3 398.9 348.6C399.4 356.9 399.2 371.6 399.3 376.2" stroke="#806c5e" stroke-width="0.8" opacity="0.71"/>
<path d="M402.9 475.9C403.4 480.0 404.7 492.2 406.0 500.7C407.3 509.3 409.2 519.3 410.6 527.2C412.0 535.1 413.8 544.5 414.4 548.0" stroke="#6e5a4c" stroke-width="1.3" opacity="0.54"/>
<path d="M393.8 360.8C393.6 365.7 392.9 380.1 392.3 390.1C391.7 400.2 390.8 410.6 390.2 420.8C389.6 431.0 388.8 441.7 388.9 451.4C389.0 461.0 390.0 470.0 390.9 478.7C391.9 487.5 393.1 495.4 394.8 503.8C396.4 512.2 398.9 521.7 400.8 529.0C402.7 536.4 405.3 544.8 406.2 548.0" stroke="#725d50" stroke-width="1.7" opacity="0.57"/>
<path d="M613.6 274.0C615.0 280.2 619.5 300.7 621.7 311.5C624.0 322.2 625.3 329.5 627.0 338.5C628.7 347.5 630.7 356.0 631.9 365.5C633.2 375.1 635.8 386.2 634.5 395.8C633.3 405.4 626.6 413.7 624.4 423.0C622.2 432.3 621.7 446.8 621.2 451.5" stroke="#3f2c24" stroke-width="1.1" opacity="0.69"/>
<path d="M501.2 93.7C504.5 95.1 514.2 98.1 520.9 101.8C527.7 105.5 535.0 110.5 541.8 115.9C548.5 121.3 555.5 127.7 561.7 134.1C567.8 140.6 573.6 147.4 578.5 154.6C583.5 161.8 588.0 169.7 591.1 177.3C594.2 184.8 595.7 192.0 597.2 199.8C598.6 207.7 598.1 214.9 599.9 224.3C601.8 233.7 607.0 251.1 608.4 256.5" stroke="#857a73" stroke-width="2.0" opacity="0.58"/>
<path d="M361.2 446.0C361.2 450.8 360.7 465.5 361.2 475.0C361.6 484.4 362.1 493.6 363.8 502.5C365.5 511.5 368.9 521.1 371.4 528.7C374.0 536.3 378.0 544.8 379.3 548.0" stroke="#6e5a4c" stroke-width="2.2" opacity="0.36"/>
<path d="M475.3 80.8C478.8 80.4 489.2 78.2 496.5 78.5C503.8 78.9 511.6 80.3 519.1 83.0C526.6 85.8 533.8 90.1 541.5 95.2C549.1 100.2 557.5 107.1 565.1 113.3C572.8 119.6 580.6 126.0 587.3 132.9C594.0 139.7 602.2 150.9 605.2 154.5" stroke="#151517" stroke-width="1.1" opacity="0.58"/>
<path d="M651.3 407.0C649.8 411.5 643.6 424.8 642.3 434.1C640.9 443.4 642.2 453.8 643.2 462.8C644.2 471.8 647.3 478.9 648.5 487.9C649.7 496.9 650.2 511.8 650.5 516.6" stroke="#4c3a31" stroke-width="0.9" opacity="0.55"/>
<path d="M452.7 123.5C450.8 126.3 445.1 133.8 441.3 140.1C437.4 146.4 433.5 153.5 429.7 161.1C425.9 168.8 422.0 177.7 418.6 186.0C415.2 194.4 412.2 202.7 409.5 211.2C406.9 219.7 404.8 228.0 402.8 236.9C400.7 245.9 398.7 255.5 397.1 264.9C395.5 274.3 393.6 284.9 393.0 293.3C392.4 301.8 393.1 308.6 393.7 315.6C394.3 322.6 396.1 332.2 396.5 335.5" stroke="#82664f" stroke-width="1.7" opacity="0.45"/>
<path d="M417.3 431.4C417.5 435.9 418.3 449.5 418.6 458.2C419.0 466.8 419.2 474.8 419.2 483.3C419.3 491.9 419.0 500.4 419.0 509.6C418.9 518.8 418.9 533.5 418.9 538.3" stroke="#6e5a4c" stroke-width="2.1" opacity="0.32"/>
<path d="M610.3 294.6C611.6 300.0 616.2 317.8 618.3 327.4C620.5 337.0 621.6 343.1 623.0 352.2C624.4 361.4 627.2 372.5 626.7 382.3C626.2 392.1 622.9 401.6 620.1 410.9C617.2 420.2 611.4 428.9 609.8 438.3C608.2 447.7 609.3 458.2 610.5 467.2C611.6 476.2 615.5 488.2 616.5 492.3" stroke="#6e4838" stroke-width="0.7" opacity="0.62"/>
<path d="M462.8 95.9C460.9 97.8 455.2 103.1 451.0 107.4C446.8 111.7 442.3 116.3 437.8 121.9C433.3 127.5 428.4 133.6 424.1 141.1C419.9 148.6 416.1 158.1 412.4 166.9C408.8 175.8 403.9 189.7 402.2 194.2" stroke="#303034" stroke-width="0.8" opacity="0.44"/>
<path d="M416.2 136.7C414.4 141.1 409.0 154.1 405.3 163.1C401.6 172.1 398.0 182.0 394.2 190.8C390.4 199.6 386.2 207.5 382.4 216.1C378.5 224.8 374.8 233.3 371.1 242.7C367.3 252.0 362.5 263.0 359.9 272.3C357.3 281.7 355.3 291.0 355.6 298.6C355.9 306.3 360.1 311.1 361.6 318.2C363.1 325.3 364.9 332.5 364.7 341.4C364.6 350.4 361.5 366.9 360.9 372.0" stroke="#573a2d" stroke-width="0.7" opacity="0.48"/>
<path d="M467.7 118.7C465.9 121.0 460.9 127.5 457.0 132.5C453.1 137.5 448.2 142.4 444.2 148.8C440.2 155.1 436.5 162.7 433.0 170.5C429.5 178.4 426.3 187.2 423.3 195.9C420.3 204.7 417.3 213.7 414.9 223.0C412.6 232.3 410.2 247.0 409.3 251.8" stroke="#82664f" stroke-width="1.8" opacity="0.57"/>
<path d="M408.5 226.8C407.4 231.3 404.0 244.8 402.0 254.2C400.1 263.6 397.7 274.1 396.5 283.2C395.3 292.2 394.6 301.0 394.9 308.5C395.3 316.0 397.3 321.3 398.5 328.3C399.7 335.2 401.1 342.1 401.9 350.2C402.7 358.3 403.1 367.7 403.4 376.8C403.6 386.0 403.9 395.4 403.6 405.0C403.4 414.7 402.3 425.2 401.9 434.9C401.6 444.6 401.8 458.3 401.7 463.0" stroke="#725d50" stroke-width="1.3" opacity="0.34"/>
<path d="M416.0 183.9C414.5 188.2 409.8 200.9 406.7 209.4C403.7 218.0 400.7 226.2 397.7 235.1C394.8 244.0 390.5 258.4 389.1 263.0" stroke="#452e24" stroke-width="1.3" opacity="0.66"/>
<path d="M550.3 372.8C548.3 378.2 540.9 394.2 537.9 405.7C534.9 417.3 533.5 430.7 532.3 442.0C531.1 453.3 531.3 463.9 530.7 473.6C530.1 483.3 529.5 491.6 528.8 500.2C528.0 508.8 527.0 517.3 526.2 525.3C525.4 533.2 524.3 544.2 523.9 548.0" stroke="#7e695e" stroke-width="2.2" opacity="0.33"/>
<path d="M396.2 191.8C394.6 196.1 389.7 208.6 386.5 217.2C383.3 225.8 380.3 234.4 376.9 243.7C373.5 253.0 368.9 263.8 366.2 273.1C363.5 282.4 361.0 291.6 360.8 299.3C360.6 306.9 363.8 311.7 364.9 318.8C366.0 326.0 367.0 338.1 367.4 342.0" stroke="#3a271f" stroke-width="1.0" opacity="0.36"/>
<path d="M602.6 368.8C602.3 373.8 602.8 389.5 600.8 399.1C598.7 408.6 592.9 417.0 590.3 426.2C587.7 435.5 586.1 445.4 585.4 454.8C584.6 464.1 585.3 473.7 586.0 482.3C586.6 490.9 589.5 497.4 589.3 506.4C589.0 515.4 585.2 531.4 584.4 536.4" stroke="#7e695e" stroke-width="1.9" opacity="0.41"/>
<path d="M371.9 310.9C372.7 314.2 375.7 323.1 376.5 330.8C377.3 338.6 377.0 348.0 376.6 357.4C376.2 366.9 375.2 377.6 374.3 387.6C373.4 397.7 372.3 407.6 371.2 417.6C370.2 427.5 368.7 437.5 368.2 447.3C367.6 457.1 367.4 467.0 367.8 476.4C368.1 485.8 368.6 494.9 370.3 503.7C372.0 512.5 375.3 521.9 377.9 529.3C380.6 536.7 384.7 544.9 386.0 548.0" stroke="#634e43" stroke-width="1.8" opacity="0.71"/>
<path d="M607.1 154.1C608.8 157.9 615.3 170.0 617.1 177.1C618.9 184.2 616.6 188.2 618.0 196.6C619.4 204.9 622.1 215.6 625.6 227.3C629.0 238.9 636.4 259.9 638.5 266.4" stroke="#37302d" stroke-width="0.9" opacity="0.55"/>
<path d="M546.1 407.1C544.7 412.9 539.7 430.9 537.8 441.8C535.9 452.8 535.3 463.4 534.7 473.0C534.1 482.6 534.2 490.7 534.0 499.3C533.8 507.9 533.9 516.5 533.6 524.6C533.4 532.7 532.5 544.1 532.3 548.0" stroke="#96816f" stroke-width="1.6" opacity="0.34"/>
<path d="M390.2 346.2C390.2 351.0 390.6 364.9 390.4 374.7C390.3 384.4 389.9 394.5 389.0 404.6C388.2 414.8 386.4 425.6 385.6 435.5C384.7 445.5 383.8 455.3 383.8 464.6C383.7 473.9 385.1 486.8 385.3 491.3" stroke="#725d50" stroke-width="1.2" opacity="0.36"/>
<path d="M394.0 375.5C393.8 380.5 393.2 395.2 392.6 405.4C392.1 415.6 390.9 426.6 390.6 436.7C390.4 446.7 390.5 456.5 391.1 465.6C391.7 474.8 392.9 483.1 394.2 491.6C395.4 500.0 397.9 512.2 398.7 516.3" stroke="#1e1815" stroke-width="1.4" opacity="0.68"/>
<path d="M568.7 267.2C570.0 270.9 574.9 281.5 576.5 289.2C578.1 296.9 579.2 304.1 578.2 313.6C577.3 323.1 574.8 336.0 570.6 346.0C566.5 356.1 558.5 363.8 553.5 373.9C548.4 383.9 543.7 395.1 540.5 406.4C537.4 417.8 535.6 436.0 534.6 441.9" stroke="#8b6350" stroke-width="2.2" opacity="0.69"/>
<path d="M572.3 187.8C572.9 191.6 575.1 202.8 575.8 210.6C576.5 218.5 575.5 225.9 576.6 234.7C577.7 243.5 580.3 253.0 582.5 263.5C584.7 274.0 587.6 286.7 589.6 297.7C591.6 308.7 593.7 320.1 594.7 329.6C595.6 339.1 595.4 345.5 595.3 354.7C595.2 363.9 594.3 379.8 594.1 384.8" stroke="#85726a" stroke-width="1.4" opacity="0.40"/>
<path d="M618.2 479.6C619.3 483.7 623.9 494.7 624.7 504.0C625.5 513.4 623.1 530.4 622.8 535.7" stroke="#7e695e" stroke-width="2.1" opacity="0.52"/>
<path d="M584.9 246.7C586.0 252.0 589.1 267.4 591.4 278.7C593.6 289.9 596.4 303.8 598.2 314.3C600.1 324.7 601.2 332.3 602.3 341.4C603.3 350.4 604.3 359.1 604.5 368.8C604.6 378.4 605.3 389.4 603.2 399.0C601.1 408.6 594.8 416.9 591.9 426.2C588.9 435.5 586.5 450.0 585.4 454.7" stroke="#3f2c24" stroke-width="0.9" opacity="0.51"/>
<path d="M409.1 313.3C410.2 316.7 413.3 327.1 415.5 333.8C417.7 340.5 420.1 346.9 422.6 353.4C425.1 359.9 427.5 366.3 430.3 372.7C433.1 379.1 436.7 385.2 439.4 391.8C442.0 398.4 444.5 405.2 446.2 412.5C447.9 419.8 448.9 427.7 449.5 435.6C450.2 443.4 450.3 451.4 449.9 459.7C449.5 467.9 447.7 481.0 447.3 485.2" stroke="#44352e" stroke-width="1.3" opacity="0.68"/>
<path d="M549.3 143.2C551.9 146.7 560.5 156.6 564.8 163.8C569.1 171.0 572.9 178.9 575.2 186.5C577.6 194.1 578.1 201.5 578.8 209.4C579.5 217.2 579.3 229.5 579.4 233.5" stroke="#231e1c" stroke-width="2.2" opacity="0.74"/>
<path d="M585.5 279.8C586.5 285.7 590.3 304.6 591.9 315.0C593.4 325.3 594.2 332.9 594.8 342.0C595.4 351.0 595.8 359.8 595.4 369.4C595.0 379.0 594.9 390.1 592.5 399.6C590.2 409.2 583.1 422.3 581.3 426.8" stroke="#5a3a2d" stroke-width="2.0" opacity="0.68"/>
<path d="M393.5 335.2C393.6 339.5 394.1 351.8 394.2 361.0C394.4 370.2 394.5 380.3 394.3 390.3C394.1 400.3 393.6 410.8 393.1 421.0C392.6 431.3 391.6 442.0 391.5 451.6C391.4 461.3 391.7 470.2 392.3 478.9C392.9 487.6 393.5 495.4 394.9 503.8C396.3 512.1 399.7 524.8 400.6 529.0" stroke="#342924" stroke-width="2.1" opacity="0.71"/>
<path d="M529.6 487.5C529.4 491.6 529.1 503.6 528.7 512.1C528.3 520.6 527.5 534.0 527.2 538.3" stroke="#7e695e" stroke-width="1.3" opacity="0.71"/>
<path d="M426.2 127.6C424.1 131.4 417.8 142.1 413.8 150.5C409.8 159.0 406.1 169.4 402.2 178.5C398.3 187.5 394.2 196.1 390.5 204.7C386.9 213.3 383.4 221.2 380.0 230.2C376.7 239.1 373.2 248.8 370.3 258.3C367.5 267.9 363.8 278.7 362.8 287.2C361.8 295.7 363.3 302.4 364.4 309.5C365.5 316.5 369.0 321.5 369.5 329.4C370.0 337.2 367.8 352.1 367.5 356.6" stroke="#684838" stroke-width="2.2" opacity="0.54"/>
<path d="M489.3 97.2C492.3 98.1 501.4 99.9 507.5 102.6C513.6 105.3 519.5 109.0 526.0 113.4C532.4 117.9 539.9 123.5 546.2 129.3C552.5 135.1 560.9 145.2 563.8 148.4" stroke="#303034" stroke-width="1.5" opacity="0.36"/>
<path d="M554.1 123.8C557.4 127.0 568.0 136.2 573.8 143.1C579.5 149.9 584.6 157.2 588.6 164.6C592.5 172.1 595.8 180.3 597.5 187.8C599.2 195.3 597.4 201.2 598.6 209.7C599.8 218.2 603.7 233.7 604.7 238.6" stroke="#231e1c" stroke-width="1.4" opacity="0.31"/>
<path d="M628.0 422.6C627.3 427.4 624.3 441.8 624.1 451.1C623.8 460.5 625.2 470.0 626.4 478.7C627.7 487.4 631.2 493.8 631.6 503.3C631.9 512.8 629.2 530.1 628.7 535.5" stroke="#5a463b" stroke-width="1.5" opacity="0.74"/>
<path d="M369.5 356.8C368.7 361.9 366.2 377.4 364.7 387.4C363.3 397.5 361.8 407.1 360.7 416.8C359.7 426.5 358.8 436.0 358.7 445.7C358.6 455.3 359.3 465.2 360.1 474.6C361.0 484.1 362.1 493.2 364.0 502.2C365.9 511.2 369.3 520.9 371.7 528.6C374.0 536.2 377.2 544.8 378.3 548.0" stroke="#342924" stroke-width="0.7" opacity="0.42"/>
<path d="M554.1 456.6C553.7 461.3 551.8 476.0 551.6 484.8C551.4 493.5 553.0 500.3 552.7 509.1C552.4 517.8 550.3 532.6 549.8 537.3" stroke="#96816f" stroke-width="1.1" opacity="0.66"/>
<path d="M581.9 137.7C584.3 141.3 592.7 151.8 596.6 159.2C600.6 166.7 603.9 175.1 605.8 182.4C607.7 189.7 606.3 194.6 608.1 203.0C609.9 211.4 615.3 227.8 616.8 232.8" stroke="#4a413d" stroke-width="1.0" opacity="0.70"/>
<path d="M615.2 452.4C615.7 457.0 616.7 471.3 617.8 480.0C619.0 488.6 622.2 495.0 622.2 504.3C622.3 513.6 618.8 530.5 618.1 535.8" stroke="#6a5447" stroke-width="1.5" opacity="0.31"/>
<path d="M425.9 128.0C423.7 131.8 416.7 142.4 412.7 150.9C408.6 159.4 405.1 169.8 401.6 178.8C398.1 187.8 394.9 196.4 391.7 205.0C388.6 213.6 384.4 226.2 382.9 230.5" stroke="#3a271f" stroke-width="2.1" opacity="0.49"/>
<path d="M449.4 460.1C448.9 464.4 448.0 475.9 446.4 485.6C444.9 495.4 442.3 508.2 440.1 518.6C438.0 529.0 434.7 543.1 433.6 548.0" stroke="#1d1715" stroke-width="0.7" opacity="0.60"/>
<path d="M414.3 348.9C415.4 352.4 418.6 362.7 421.0 369.8C423.5 376.9 426.7 384.0 429.0 391.5C431.2 399.0 433.3 406.7 434.5 414.7C435.8 422.8 436.1 431.4 436.3 439.8C436.6 448.1 436.3 456.2 435.8 464.6C435.3 473.0 434.4 480.5 433.5 489.9C432.6 499.3 430.9 515.9 430.3 521.1" stroke="#342924" stroke-width="1.0" opacity="0.38"/>
<path d="M567.0 252.5C568.2 257.0 572.1 271.1 574.3 279.5C576.4 287.9 579.3 294.0 579.9 302.8C580.5 311.6 579.8 322.4 577.8 332.3C575.8 342.1 572.0 352.2 568.1 362.0C564.1 371.8 556.3 386.2 554.0 391.0" stroke="#9a7260" stroke-width="0.7" opacity="0.61"/>
<path d="M420.8 360.6C421.9 364.1 425.2 374.3 427.7 381.2C430.1 388.2 433.3 394.9 435.3 402.4C437.4 409.8 438.9 417.9 440.0 425.9C441.1 433.9 441.8 442.3 442.0 450.5C442.2 458.7 441.9 466.4 441.2 475.2C440.4 483.9 438.3 498.4 437.7 503.0" stroke="#806c5e" stroke-width="1.8" opacity="0.68"/>
<path d="M636.7 350.1C637.6 355.1 642.3 370.4 642.2 380.1C642.2 389.9 639.0 399.4 636.3 408.8C633.5 418.1 627.3 426.8 625.5 436.1C623.8 445.5 624.8 456.0 625.9 465.1C627.1 474.1 630.6 481.5 632.3 490.4C634.0 499.3 636.0 508.8 636.1 518.4C636.2 528.0 633.4 543.1 632.8 548.0" stroke="#2a201c" stroke-width="1.7" opacity="0.59"/>
<path d="M542.6 425.0C541.9 430.5 539.2 447.5 538.1 457.8C537.1 468.1 536.7 477.9 536.2 486.8C535.6 495.7 535.5 502.8 534.8 511.3C534.1 519.9 532.5 533.6 532.1 538.1" stroke="#a8947f" stroke-width="2.1" opacity="0.59"/>
<path d="M531.3 141.2C533.5 144.2 540.5 152.3 544.2 158.8C547.8 165.3 550.8 172.7 553.4 180.3C555.9 187.8 557.9 196.4 559.5 204.0C561.0 211.6 561.0 218.0 562.5 226.1C564.0 234.1 566.4 243.3 568.7 252.2C570.9 261.1 574.8 275.0 576.0 279.6" stroke="#70665f" stroke-width="1.2" opacity="0.66"/>
<path d="M360.1 387.4C359.5 392.2 357.3 406.8 356.0 416.3C354.7 425.8 353.1 434.9 352.4 444.3C351.8 453.8 351.6 463.7 352.0 473.1C352.5 482.5 353.1 491.7 355.0 500.8C357.0 509.9 360.8 520.0 363.7 527.8C366.6 535.7 370.9 544.6 372.3 548.0" stroke="#191412" stroke-width="1.2" opacity="0.51"/>
<path d="M391.4 315.5C391.8 318.8 393.3 327.7 393.9 335.4C394.4 343.0 394.5 352.0 394.7 361.1C394.9 370.3 394.9 385.5 395.0 390.4" stroke="#44352e" stroke-width="1.4" opacity="0.48"/>
<path d="M610.6 166.1C611.6 169.6 614.7 179.8 616.2 187.2C617.8 194.6 617.1 200.5 619.9 210.4C622.7 220.4 628.7 234.0 633.1 246.8C637.4 259.7 642.3 275.0 646.2 287.6C650.1 300.2 653.7 312.7 656.3 322.5C658.9 332.3 660.0 337.3 662.0 346.4C663.9 355.5 668.0 367.2 668.2 377.1C668.4 387.0 663.9 400.9 663.1 405.7" stroke="#3b2f2a" stroke-width="1.4" opacity="0.45"/>
<path d="M444.8 115.6C442.5 118.4 435.2 125.7 431.0 132.2C426.7 138.6 422.8 146.2 419.3 154.5C415.7 162.7 412.6 172.8 409.5 181.6C406.4 190.5 403.6 199.0 400.7 207.6C397.9 216.2 395.3 224.2 392.4 233.1C389.6 242.1 385.0 256.4 383.5 261.1" stroke="#573a2d" stroke-width="1.0" opacity="0.36"/>
<path d="M348.5 486.3C349.5 490.8 351.8 504.7 354.5 513.6C357.3 522.4 363.2 535.2 364.9 539.5" stroke="#4e3e35" stroke-width="1.3" opacity="0.71"/>
<path d="M536.5 121.7C539.5 124.6 549.1 132.9 554.6 139.2C560.1 145.5 565.0 152.5 569.3 159.7C573.6 166.9 577.8 174.7 580.7 182.4C583.5 190.0 585.0 197.4 586.5 205.4C588.0 213.3 587.7 220.9 589.4 230.1C591.2 239.3 594.6 249.5 597.0 260.5C599.4 271.4 601.8 284.5 603.7 295.8C605.5 307.2 607.0 318.8 608.1 328.4C609.2 337.9 610.0 349.2 610.3 353.4" stroke="#907d74" stroke-width="1.5" opacity="0.52"/>
<path d="M571.1 279.1C572.1 282.3 576.5 290.1 576.9 298.3C577.3 306.6 576.3 318.5 573.6 328.7C570.8 338.8 565.7 349.4 560.5 359.3C555.3 369.1 546.9 377.0 542.4 387.8C537.9 398.7 535.5 412.8 533.5 424.5C531.5 436.3 531.0 447.8 530.3 458.3C529.7 468.9 529.9 478.6 529.6 487.6C529.2 496.6 528.8 503.8 528.2 512.3C527.6 520.7 526.2 534.0 525.8 538.4" stroke="#9a7260" stroke-width="0.8" opacity="0.74"/>
<path d="M479.7 110.4C482.0 111.2 489.1 113.0 493.5 115.2C498.0 117.3 501.5 120.3 506.3 123.5C511.2 126.7 517.4 130.2 522.8 134.4C528.2 138.7 534.2 143.5 538.8 149.3C543.4 155.1 547.3 161.9 550.5 169.1C553.6 176.2 555.8 184.5 557.6 192.2C559.4 199.9 560.1 207.3 561.1 215.0C562.2 222.7 563.6 234.5 564.1 238.4" stroke="#857a73" stroke-width="0.8" opacity="0.56"/>
<path d="M623.0 382.8C622.1 387.5 620.0 402.1 617.4 411.4C614.9 420.7 609.3 429.4 607.7 438.8C606.1 448.1 607.0 458.7 607.8 467.7C608.6 476.7 611.5 484.1 612.5 492.8C613.6 501.5 614.7 510.6 614.2 519.8C613.7 529.0 610.4 543.3 609.6 548.0" stroke="#2a201c" stroke-width="2.0" opacity="0.33"/>
<path d="M566.6 224.8C567.5 229.2 570.1 241.8 572.2 251.0C574.4 260.2 577.5 270.3 579.8 279.9C582.0 289.6 584.8 299.5 585.6 309.0C586.3 318.6 585.7 327.8 584.5 337.3C583.2 346.7 580.7 356.2 578.1 365.9C575.4 375.6 570.2 390.6 568.6 395.5" stroke="#6e4838" stroke-width="1.6" opacity="0.40"/>
<path d="M553.7 155.6C555.8 159.2 562.8 169.8 566.0 177.3C569.2 184.7 571.9 192.9 573.2 200.5C574.5 208.1 573.0 214.8 573.6 222.9C574.3 231.1 575.5 239.7 577.1 249.3C578.8 258.8 582.5 275.1 583.6 280.3" stroke="#3b2f2a" stroke-width="1.1" opacity="0.59"/>
<path d="M433.0 169.6C431.2 173.9 425.7 186.2 422.5 194.9C419.3 203.6 416.1 212.6 413.7 221.8C411.3 231.1 409.5 240.5 408.1 250.3C406.7 260.2 405.7 271.3 405.2 280.8C404.7 290.3 404.6 299.3 405.2 307.2C405.8 315.2 408.2 324.8 408.8 328.3" stroke="#82664f" stroke-width="1.5" opacity="0.63"/>
<path d="M431.2 163.5C429.3 167.6 423.5 180.0 420.1 188.4C416.7 196.8 413.4 205.3 410.7 214.0C408.1 222.7 405.9 231.3 404.0 240.5C402.0 249.6 400.3 259.7 399.1 269.1C397.8 278.5 396.5 288.7 396.3 297.0C396.2 305.3 397.3 312.0 398.2 318.9C399.1 325.9 400.9 331.4 401.7 338.8C402.5 346.2 402.5 354.7 402.7 363.4C402.9 372.0 402.9 386.2 402.9 390.8" stroke="#684838" stroke-width="1.4" opacity="0.49"/>
<path d="M399.9 490.5C400.7 494.7 402.9 507.2 404.5 515.4C406.1 523.6 408.8 535.8 409.7 539.9" stroke="#4e3e35" stroke-width="0.9" opacity="0.50"/>
<path d="M360.8 356.0C360.1 361.2 358.1 377.4 356.5 387.4C354.9 397.4 352.8 406.6 351.2 415.9C349.5 425.2 347.3 438.8 346.6 443.4" stroke="#44352e" stroke-width="1.2" opacity="0.60"/>
<path d="M614.4 340.3C615.2 344.8 618.1 358.0 619.2 367.6C620.3 377.2 622.5 388.3 621.0 397.9C619.5 407.5 612.6 415.8 610.1 425.1C607.5 434.4 606.0 444.3 605.6 453.6C605.1 462.9 606.3 472.5 607.4 481.1C608.5 489.7 611.7 496.1 612.0 505.2C612.2 514.4 609.4 530.9 608.9 536.0" stroke="#2a201c" stroke-width="1.0" opacity="0.72"/>
<path d="M584.6 181.2C585.5 185.1 588.9 196.3 590.0 204.3C591.2 212.3 590.2 219.9 591.6 229.2C592.9 238.4 595.8 248.8 598.0 259.8C600.2 270.9 602.5 284.1 604.6 295.5C606.7 306.8 608.7 318.5 610.4 328.1C612.1 337.7 613.3 343.9 614.9 353.1C616.4 362.3 619.1 378.2 619.9 383.2" stroke="#75625a" stroke-width="1.3" opacity="0.46"/>
<path d="M565.1 162.5C566.9 166.3 573.5 177.6 576.3 185.2C579.0 192.8 580.3 200.2 581.6 208.1C582.8 216.0 582.2 223.4 583.6 232.4C585.0 241.4 588.9 257.1 590.0 262.0" stroke="#907d74" stroke-width="0.9" opacity="0.64"/>
<path d="M397.1 249.4C395.9 254.2 391.7 269.2 389.9 278.4C388.2 287.5 386.7 296.7 386.6 304.3C386.5 311.9 388.6 316.9 389.5 324.0C390.3 331.0 391.5 338.1 391.8 346.6C392.0 355.1 391.5 365.2 391.2 374.9C390.8 384.6 389.9 399.9 389.6 404.9" stroke="#452e24" stroke-width="1.9" opacity="0.48"/>
<path d="M602.7 196.8C603.1 200.9 603.0 211.5 604.8 221.0C606.7 230.6 610.7 242.3 613.7 254.2C616.8 266.0 620.2 280.2 623.2 292.1C626.1 304.0 629.0 316.0 631.4 325.6C633.7 335.2 635.1 340.8 637.0 349.8C639.0 358.8 643.0 370.1 643.3 379.8C643.6 389.6 641.1 399.1 638.8 408.5C636.4 417.8 630.7 426.4 629.2 435.8C627.7 445.2 629.7 459.9 629.7 464.7" stroke="#6e4838" stroke-width="2.2" opacity="0.56"/>
<path d="M427.5 442.1C427.6 446.3 428.0 459.0 428.0 467.4C428.0 475.8 427.7 483.4 427.3 492.6C427.0 501.8 426.4 513.3 425.9 522.6C425.5 531.8 424.8 543.8 424.5 548.0" stroke="#6e5a4c" stroke-width="0.8" opacity="0.50"/>
<path d="M519.6 137.3C522.2 139.6 530.6 145.6 534.9 151.2C539.3 156.7 543.1 163.4 545.9 170.5C548.7 177.6 550.4 186.2 552.0 193.9C553.5 201.6 554.1 209.1 555.1 216.7C556.2 224.4 556.5 231.3 558.3 239.8C560.1 248.3 563.4 259.6 566.0 267.6C568.6 275.6 572.1 280.7 573.8 288.1C575.5 295.4 575.8 307.6 576.2 311.5" stroke="#3b2f2a" stroke-width="0.8" opacity="0.53"/>
<path d="M402.0 194.0C400.5 198.2 396.0 210.8 393.2 219.4C390.4 228.0 388.0 236.6 385.1 245.8C382.3 255.0 378.4 265.6 376.2 274.8C373.9 283.9 371.8 293.0 371.6 300.6C371.4 308.2 374.1 313.2 374.9 320.3C375.7 327.4 376.7 334.5 376.5 343.2C376.4 351.9 374.8 362.5 373.9 372.4C373.0 382.3 371.7 397.5 371.2 402.5" stroke="#573a2d" stroke-width="0.8" opacity="0.55"/>
<path d="M383.6 450.2C383.8 454.9 384.1 469.1 384.8 478.1C385.4 487.0 386.1 495.2 387.6 503.8C389.1 512.3 391.6 521.7 393.6 529.1C395.7 536.5 398.7 544.9 399.8 548.0" stroke="#191412" stroke-width="0.7" opacity="0.47"/>
<path d="M591.4 413.2C589.6 417.7 583.2 431.2 580.7 440.6C578.2 449.9 576.9 460.5 576.5 469.5C576.1 478.5 577.9 486.0 578.2 494.6C578.6 503.2 579.3 512.2 578.6 521.1C577.8 530.0 574.7 543.5 573.9 548.0" stroke="#2a201c" stroke-width="0.9" opacity="0.69"/>
<path d="M402.6 322.8C403.5 326.1 406.6 335.5 408.1 342.6C409.5 349.8 410.3 357.8 411.2 365.8C412.0 373.9 412.8 382.4 413.2 391.0C413.5 399.7 413.4 413.4 413.5 417.9" stroke="#806c5e" stroke-width="0.8" opacity="0.59"/>
<path d="M464.2 84.5C461.4 86.0 452.6 90.1 447.4 93.9C442.1 97.8 437.2 102.2 432.6 107.4C428.0 112.5 423.7 118.0 419.7 124.8C415.7 131.6 412.2 139.6 408.6 148.1C405.0 156.7 401.8 167.2 398.0 176.3C394.2 185.3 390.0 193.9 385.8 202.6C381.6 211.2 375.1 223.8 373.0 228.0" stroke="#36363a" stroke-width="1.2" opacity="0.39"/>
<path d="M665.3 392.5C663.2 397.0 655.3 410.1 652.5 419.2C649.6 428.3 648.2 438.0 648.3 447.1C648.4 456.3 650.9 465.6 653.0 474.2C655.2 482.7 660.3 488.5 661.5 498.5C662.7 508.4 660.6 528.0 660.5 533.9" stroke="#6a5447" stroke-width="1.9" opacity="0.61"/>
<path d="M531.9 107.6C535.4 110.4 546.6 118.4 553.2 124.4C559.8 130.5 566.0 136.9 571.5 143.7C577.0 150.5 583.6 161.7 586.0 165.3" stroke="#46464b" stroke-width="1.9" opacity="0.34"/>
<path d="M487.6 114.4C489.5 115.6 495.0 118.5 499.0 121.2C503.0 124.0 506.6 127.3 511.4 130.9C516.3 134.4 522.9 137.8 527.9 142.7C533.0 147.5 537.8 153.4 541.7 159.8C545.7 166.2 549.1 173.6 551.7 181.2C554.3 188.7 556.0 197.5 557.3 205.1C558.6 212.8 558.2 219.0 559.4 227.0C560.5 235.0 563.4 248.8 564.2 253.1" stroke="#70665f" stroke-width="1.1" opacity="0.35"/>
<path d="M513.8 129.2C516.5 131.2 525.0 136.6 529.9 141.5C534.7 146.5 539.2 152.5 543.0 159.0C546.9 165.5 550.3 172.9 553.0 180.4C555.8 188.0 558.0 196.6 559.6 204.2C561.2 211.9 562.1 222.6 562.6 226.2" stroke="#675d57" stroke-width="2.1" opacity="0.37"/>
<path d="M614.6 340.3C615.1 344.8 617.2 358.0 618.0 367.6C618.7 377.2 620.7 388.3 619.2 397.9C617.7 407.5 611.3 415.8 609.1 425.1C606.9 434.4 606.0 444.3 606.0 453.6C606.0 463.0 607.7 472.5 608.9 481.1C610.1 489.7 613.3 496.1 613.3 505.2C613.4 514.4 609.7 530.9 609.0 536.1" stroke="#4c3a31" stroke-width="1.9" opacity="0.45"/>
<path d="M583.8 181.1C584.7 184.9 587.9 196.1 589.2 204.1C590.5 212.1 589.9 219.7 591.5 229.0C593.2 238.2 597.8 254.6 599.1 259.7" stroke="#2b2320" stroke-width="2.2" opacity="0.62"/>
<path d="M398.5 176.8C396.7 181.1 391.3 194.4 387.5 203.0C383.7 211.7 379.8 219.5 375.8 228.5C371.8 237.5 367.2 247.3 363.5 256.9C359.7 266.5 354.8 277.5 353.3 286.1C351.9 294.7 353.2 301.4 354.6 308.5C355.9 315.5 360.3 320.4 361.4 328.4C362.5 336.3 361.9 346.3 361.2 356.1C360.4 365.9 357.6 382.2 356.9 387.4" stroke="#4e3427" stroke-width="1.6" opacity="0.34"/>
<path d="M352.4 430.1C352.1 434.8 350.7 448.9 350.6 458.4C350.5 467.8 350.8 477.7 352.0 487.0C353.1 496.3 355.0 505.3 357.7 514.1C360.3 522.9 366.0 535.4 367.7 539.6" stroke="#5f4c40" stroke-width="1.6" opacity="0.72"/>
<path d="M552.9 123.7C556.2 126.9 567.0 136.2 573.0 143.0C579.0 149.8 584.6 157.1 588.9 164.6C593.2 172.0 596.9 180.3 598.7 187.8C600.6 195.3 598.8 201.2 599.9 209.7C600.9 218.1 602.8 227.9 605.1 238.5C607.4 249.2 610.9 261.4 613.8 273.5C616.7 285.6 620.1 300.4 622.7 311.2C625.2 322.0 627.2 329.2 629.3 338.2C631.5 347.2 634.4 360.7 635.4 365.2" stroke="#3b2f2a" stroke-width="0.9" opacity="0.51"/>
<path d="M600.9 277.3C602.1 283.3 606.2 302.9 608.0 313.5C609.8 324.0 610.7 331.5 611.7 340.6C612.7 349.7 613.7 358.4 614.2 368.0C614.6 377.6 616.1 388.6 614.4 398.2C612.7 407.8 606.3 416.1 604.1 425.4C601.8 434.7 600.9 444.6 600.8 454.0C600.7 463.3 603.1 476.9 603.6 481.4" stroke="#4d3329" stroke-width="1.7" opacity="0.43"/>
<path d="M584.5 263.2C585.8 268.9 590.4 286.4 592.5 297.5C594.7 308.5 596.7 320.0 597.5 329.5C598.2 339.0 597.6 345.4 597.2 354.6C596.8 363.8 596.9 374.9 595.3 384.7C593.6 394.5 590.1 403.9 587.2 413.3C584.3 422.6 579.7 431.3 577.8 440.6C575.9 450.0 576.0 464.8 575.7 469.6" stroke="#8b6350" stroke-width="1.9" opacity="0.62"/>
<path d="M576.9 440.8C576.3 445.6 573.4 460.7 573.0 469.7C572.6 478.7 574.4 486.3 574.7 494.8C575.0 503.4 575.5 512.4 574.6 521.2C573.6 530.1 570.0 543.5 569.1 548.0" stroke="#2a201c" stroke-width="2.1" opacity="0.34"/>
<path d="M371.7 432.9C371.4 437.8 370.4 452.6 370.3 462.2C370.2 471.9 370.4 481.5 371.3 490.6C372.2 499.6 373.5 508.3 375.7 516.6C377.9 524.9 382.8 536.3 384.2 540.3" stroke="#5f4c40" stroke-width="1.9" opacity="0.69"/>
<path d="M554.9 425.8C553.9 431.0 550.3 447.1 548.9 457.0C547.5 467.0 547.1 476.6 546.7 485.4C546.4 494.2 547.4 501.1 546.9 509.8C546.4 518.5 544.3 532.9 543.8 537.6" stroke="#6a5447" stroke-width="2.0" opacity="0.64"/>
<path d="M625.6 465.3C626.5 469.5 629.9 481.7 631.4 490.6C632.8 499.4 634.3 508.9 634.1 518.5C633.9 528.0 630.9 543.1 630.2 548.0" stroke="#96816f" stroke-width="1.4" opacity="0.38"/>
<path d="M408.6 196.3C407.3 200.5 403.5 213.0 401.0 221.6C398.5 230.3 396.1 238.9 393.5 248.1C390.8 257.4 387.3 268.0 385.2 277.1C383.1 286.3 381.6 298.7 380.8 303.0" stroke="#775846" stroke-width="1.6" opacity="0.31"/>
<path d="M490.1 93.5C493.3 94.3 503.0 95.9 509.5 98.6C516.0 101.3 522.4 105.0 529.2 109.6C536.0 114.1 543.8 120.1 550.4 126.1C557.1 132.0 563.6 138.5 569.1 145.3C574.7 152.1 579.9 159.4 584.0 166.9C588.1 174.3 591.8 182.5 593.6 190.1C595.5 197.7 594.0 204.0 595.2 212.5C596.4 221.0 599.7 236.2 600.6 240.9" stroke="#70665f" stroke-width="1.7" opacity="0.33"/>
<path d="M530.1 125.8C533.2 128.6 543.1 136.6 548.8 142.8C554.5 149.1 559.8 156.2 564.3 163.4C568.8 170.6 573.0 178.5 575.7 186.1C578.4 193.7 579.5 201.1 580.4 209.0C581.4 216.8 580.4 224.3 581.4 233.2C582.5 242.1 585.0 251.9 586.9 262.5C588.8 273.2 591.2 286.0 593.1 297.1C594.9 308.2 596.8 319.7 597.9 329.2C599.1 338.7 599.6 350.1 599.9 354.3" stroke="#4a3a33" stroke-width="1.4" opacity="0.61"/>
<path d="M387.7 359.6C387.3 364.5 386.1 379.2 385.2 389.2C384.3 399.3 383.2 409.6 382.5 419.7C381.8 429.8 380.9 440.2 381.0 449.9C381.1 459.6 382.7 473.2 383.0 477.9" stroke="#634e43" stroke-width="2.2" opacity="0.61"/>
<path d="M630.3 435.6C630.7 440.5 631.1 455.5 632.5 464.6C633.9 473.6 637.3 481.0 638.6 490.0C639.9 498.9 640.9 508.4 640.3 518.1C639.6 527.8 635.7 543.0 634.7 548.0" stroke="#4c3a31" stroke-width="2.1" opacity="0.59"/>
<path d="M462.0 122.5C459.9 125.0 453.8 131.6 449.7 137.2C445.5 142.8 440.9 148.9 436.9 156.0C432.9 163.1 427.7 175.8 425.8 179.8" stroke="#46464b" stroke-width="1.7" opacity="0.52"/>
<path d="M395.9 248.8C394.7 253.7 390.6 268.7 388.7 277.8C386.8 286.9 385.0 296.1 384.6 303.7C384.3 311.3 386.1 316.3 386.7 323.4C387.3 330.4 388.1 342.3 388.4 346.0" stroke="#3a271f" stroke-width="1.6" opacity="0.36"/>
<path d="M357.3 402.1C356.5 406.8 353.9 420.8 352.9 430.2C351.8 439.6 351.1 449.0 351.1 458.5C351.0 468.0 351.3 477.8 352.5 487.1C353.7 496.4 355.7 505.5 358.3 514.2C361.0 523.0 366.7 535.4 368.4 539.7" stroke="#1d1715" stroke-width="0.9" opacity="0.61"/>
<path d="M557.2 216.4C557.7 220.3 558.4 231.0 560.0 239.5C561.6 248.0 564.5 259.2 566.8 267.4C569.1 275.6 572.3 281.2 573.9 288.7C575.5 296.3 575.9 308.8 576.3 312.8" stroke="#4a3a33" stroke-width="1.7" opacity="0.43"/>
<path d="M614.3 199.5C615.7 204.5 618.9 218.3 622.2 229.8C625.6 241.2 630.5 255.0 634.4 268.0C638.3 281.0 642.5 296.8 645.6 307.9C648.8 319.1 650.8 325.9 653.2 334.9C655.5 343.9 658.7 357.4 659.8 361.9" stroke="#907d74" stroke-width="0.9" opacity="0.43"/>
<path d="M528.3 128.8C531.3 131.6 541.0 139.3 546.3 145.5C551.6 151.7 556.1 158.9 560.0 166.1C563.8 173.3 567.2 181.2 569.4 188.8C571.6 196.4 572.4 203.8 573.4 211.6C574.3 219.3 573.7 226.7 575.0 235.5C576.4 244.2 580.4 259.3 581.4 264.1" stroke="#70665f" stroke-width="2.0" opacity="0.72"/>
<path d="M369.9 447.8C369.9 452.7 369.2 467.4 369.8 476.7C370.3 486.0 371.2 494.9 373.2 503.7C375.1 512.5 378.8 521.9 381.5 529.3C384.3 536.6 388.4 544.9 389.7 548.0" stroke="#5f4c40" stroke-width="2.1" opacity="0.49"/>
<path d="M390.1 189.1C388.0 193.4 381.6 205.8 377.4 214.5C373.2 223.1 368.9 231.6 364.7 241.1C360.4 250.5 354.9 261.7 351.9 271.1C349.0 280.5 346.7 290.0 347.0 297.7C347.4 305.3 352.1 310.0 354.0 317.2C355.8 324.3 357.4 336.7 358.0 340.6" stroke="#684838" stroke-width="1.5" opacity="0.39"/>
<path d="M563.4 483.5C563.8 487.6 565.9 498.8 565.4 507.7C564.9 516.6 561.3 532.0 560.5 536.9" stroke="#a8947f" stroke-width="0.8" opacity="0.46"/>
<path d="M375.9 477.3C376.4 481.7 377.3 495.1 379.1 503.7C380.9 512.4 384.1 521.8 386.5 529.2C389.0 536.6 392.6 544.9 393.8 548.0" stroke="#3a2e29" stroke-width="2.1" opacity="0.51"/>
<path d="M514.2 110.0C517.6 112.2 527.7 118.1 534.3 123.2C540.8 128.3 547.8 134.2 553.5 140.5C559.3 146.8 564.4 153.8 568.7 161.0C573.0 168.2 576.8 176.1 579.3 183.7C581.8 191.3 582.7 198.8 583.7 206.7C584.7 214.6 583.9 222.1 585.3 231.2C586.8 240.3 590.0 250.4 592.4 261.2C594.9 272.1 597.8 285.1 599.9 296.3C602.1 307.5 604.5 323.3 605.5 328.7" stroke="#675d57" stroke-width="1.0" opacity="0.48"/>
<path d="M596.7 144.3C599.0 148.1 607.3 159.8 610.5 167.2C613.6 174.5 614.6 180.9 615.9 188.4C617.2 195.8 616.0 201.8 618.3 211.7C620.6 221.6 625.7 235.0 629.6 247.7C633.6 260.5 638.1 275.6 641.9 288.1C645.7 300.7 649.6 313.1 652.5 322.9C655.4 332.7 657.1 337.7 659.5 346.8C661.9 355.9 666.4 367.5 666.7 377.4C667.0 387.3 662.3 401.2 661.5 406.0" stroke="#75625a" stroke-width="1.7" opacity="0.40"/>
<path d="M363.8 309.7C364.9 313.0 369.4 321.7 370.5 329.6C371.7 337.4 371.3 347.1 370.6 356.7C369.9 366.4 368.0 377.4 366.4 387.4C364.9 397.5 362.8 407.1 361.2 416.8C359.7 426.4 357.8 440.7 357.1 445.5" stroke="#725d50" stroke-width="0.8" opacity="0.48"/>
<path d="M447.6 120.6C445.7 123.3 439.6 130.8 436.0 137.1C432.4 143.5 429.3 150.8 426.2 158.6C423.0 166.5 420.1 175.8 417.1 184.4C414.1 192.9 409.6 205.6 408.1 209.8" stroke="#1d1d20" stroke-width="1.9" opacity="0.40"/>
<path d="M629.5 310.4C630.5 314.9 633.7 328.3 635.6 337.3C637.6 346.2 639.9 354.6 641.3 364.1C642.8 373.7 645.7 384.9 644.5 394.4C643.4 404.0 636.5 412.4 634.2 421.6C632.0 430.9 631.6 445.4 631.0 450.1" stroke="#8b6350" stroke-width="0.7" opacity="0.33"/>
<path d="M595.5 145.7C597.5 149.5 604.9 161.2 607.6 168.6C610.4 176.0 610.8 182.5 611.9 190.0C613.0 197.5 611.8 203.7 614.2 213.5C616.6 223.3 622.1 236.4 626.3 249.0C630.5 261.5 635.5 276.5 639.5 288.9C643.5 301.3 647.5 313.7 650.3 323.4C653.1 333.1 654.5 338.2 656.4 347.3C658.4 356.4 661.1 372.7 662.0 377.8" stroke="#3b2f2a" stroke-width="1.0" opacity="0.37"/>
<path d="M617.1 272.8C618.6 279.2 623.6 300.0 626.2 310.8C628.7 321.6 630.5 328.8 632.6 337.7C634.6 346.7 636.9 355.1 638.3 364.7C639.7 374.2 640.7 389.9 641.1 395.0" stroke="#8b6350" stroke-width="1.8" opacity="0.40"/>
<path d="M635.4 309.7C636.5 314.1 640.0 327.6 642.0 336.5C644.0 345.5 646.1 353.8 647.4 363.4C648.7 372.9 649.5 388.7 649.9 393.8" stroke="#2a1f1b" stroke-width="1.1" opacity="0.31"/>
<path d="M356.1 327.6C355.8 332.3 355.6 345.7 354.6 355.7C353.5 365.7 351.2 377.4 349.7 387.4C348.3 397.4 346.8 406.3 345.7 415.5C344.6 424.7 343.5 433.2 343.1 442.4C342.7 451.7 342.8 461.4 343.3 470.8C343.9 480.2 344.4 489.5 346.2 498.8C348.1 508.1 353.1 522.1 354.4 526.8" stroke="#342924" stroke-width="1.6" opacity="0.37"/>
<path d="M616.3 451.9C616.8 456.5 617.7 470.8 619.3 479.5C620.9 488.1 625.1 494.5 625.9 503.9C626.7 513.3 624.4 530.4 624.1 535.6" stroke="#a8947f" stroke-width="1.6" opacity="0.50"/>
<path d="M461.4 123.8C459.6 126.2 454.1 132.8 450.3 138.4C446.6 144.0 442.6 150.1 438.8 157.2C435.1 164.3 429.8 177.1 428.0 181.1" stroke="#56565b" stroke-width="1.6" opacity="0.32"/>
<path d="M399.3 250.8C398.4 255.6 395.2 270.6 394.1 279.7C393.1 288.9 392.5 298.0 392.9 305.6C393.4 313.2 395.7 318.3 396.6 325.4C397.5 332.4 398.4 339.4 398.5 347.8C398.5 356.2 397.6 366.2 397.0 375.8C396.3 385.5 395.3 395.5 394.4 405.7C393.5 415.9 392.0 431.8 391.5 437.0" stroke="#725d50" stroke-width="1.1" opacity="0.54"/>
<path d="M554.4 155.5C556.3 159.1 562.8 169.7 565.8 177.2C568.8 184.7 571.1 192.8 572.3 200.4C573.5 208.0 572.1 214.7 572.9 222.9C573.7 231.0 575.3 239.6 577.3 249.2C579.2 258.8 582.2 269.2 584.6 280.2C586.9 291.2 590.3 309.4 591.4 315.2" stroke="#85726a" stroke-width="0.9" opacity="0.44"/>
<path d="M543.0 159.6C544.6 163.1 550.1 173.4 552.6 181.0C555.0 188.5 556.5 197.2 557.7 204.9C558.8 212.5 558.3 218.8 559.4 226.8C560.6 234.8 562.4 244.2 564.5 252.9C566.6 261.7 569.6 271.3 571.9 279.3C574.1 287.4 577.1 297.4 578.2 301.0" stroke="#85726a" stroke-width="2.1" opacity="0.72"/>
<path d="M410.9 197.5C409.6 201.8 405.5 214.2 403.2 222.8C400.8 231.5 398.9 240.2 396.8 249.4C394.6 258.7 392.0 269.2 390.5 278.4C388.9 287.5 387.6 296.7 387.6 304.3C387.5 311.9 389.5 316.9 390.2 324.0C390.9 331.0 391.6 338.1 391.7 346.6C391.7 355.1 390.9 365.2 390.4 374.9C389.9 384.6 389.3 394.7 388.7 404.9C388.1 415.0 386.9 430.7 386.5 435.9" stroke="#82664f" stroke-width="1.5" opacity="0.68"/>
<path d="M630.1 269.1C632.0 275.7 638.6 297.5 641.9 308.6C645.1 319.6 647.4 326.6 649.8 335.5C652.2 344.5 654.6 352.9 656.1 362.5C657.6 372.1 660.2 383.5 658.6 393.1C657.0 402.7 649.2 410.8 646.5 419.9C643.9 429.1 642.6 438.8 642.8 448.1C642.9 457.3 645.2 466.7 647.3 475.4C649.3 484.0 654.1 490.0 655.1 499.9C656.2 509.7 653.8 528.6 653.6 534.3" stroke="#6e4838" stroke-width="1.1" opacity="0.56"/>
<path d="M416.3 470.8C416.6 475.0 417.4 486.9 418.1 495.9C418.8 504.8 419.9 515.8 420.5 524.4C421.2 533.1 421.8 544.1 422.1 548.0" stroke="#3a2e29" stroke-width="1.7" opacity="0.41"/>
<path d="M497.7 100.7C500.6 102.1 509.1 105.3 515.3 108.9C521.6 112.4 528.7 117.0 535.2 122.1C541.7 127.3 548.6 133.3 554.3 139.6C560.1 145.9 565.4 152.9 569.8 160.1C574.3 167.3 578.4 175.2 581.1 182.8C583.7 190.4 584.8 197.8 585.9 205.8C587.0 213.7 587.4 226.3 587.7 230.4" stroke="#675d57" stroke-width="1.2" opacity="0.34"/>
<path d="M595.2 212.3C596.0 217.1 598.0 230.4 600.2 240.8C602.4 251.3 605.8 263.1 608.6 275.0C611.3 286.8 614.4 301.4 616.8 312.1C619.2 322.8 621.8 334.6 622.8 339.1" stroke="#5f4c43" stroke-width="1.9" opacity="0.68"/>
<path d="M580.3 233.4C581.2 238.3 583.5 252.1 585.4 262.7C587.3 273.3 589.9 286.1 591.9 297.2C593.8 308.3 596.1 319.7 597.4 329.3C598.7 338.8 599.2 345.2 599.7 354.4C600.3 363.6 601.8 374.7 600.8 384.5C599.7 394.2 594.9 408.3 593.7 413.1" stroke="#4d3329" stroke-width="0.8" opacity="0.44"/>
<path d="M457.6 102.8C455.6 105.0 449.8 111.0 445.6 115.9C441.4 120.8 436.6 126.0 432.4 132.4C428.2 138.9 424.1 146.5 420.3 154.7C416.5 162.9 413.0 172.9 409.7 181.8C406.3 190.6 401.7 203.4 400.1 207.7" stroke="#28282b" stroke-width="0.8" opacity="0.36"/>
<path d="M631.5 290.5C633.0 296.2 638.1 314.8 640.6 324.5C643.1 334.2 644.4 339.4 646.4 348.5C648.4 357.5 652.4 368.9 652.7 378.7C652.9 388.5 650.3 398.0 647.9 407.3C645.5 416.6 639.7 425.1 638.3 434.5C636.9 443.8 638.3 454.2 639.6 463.2C640.9 472.2 644.9 484.3 646.0 488.5" stroke="#6e4838" stroke-width="1.6" opacity="0.59"/>
<path d="M423.7 481.1C423.7 485.6 424.0 498.4 424.0 507.8C424.1 517.2 423.9 532.8 423.9 537.7" stroke="#5f4c40" stroke-width="1.6" opacity="0.66"/>
<path d="M417.5 358.7C418.4 362.3 420.9 373.1 422.8 380.4C424.7 387.8 427.2 395.0 428.8 402.9C430.4 410.7 431.9 423.5 432.5 427.6" stroke="#806c5e" stroke-width="1.4" opacity="0.59"/>
<path d="M640.0 336.6C641.0 341.1 644.5 353.9 646.1 363.4C647.8 372.9 651.1 384.2 650.0 393.8C649.0 403.4 642.3 411.7 640.1 420.9C637.9 430.2 637.0 440.0 637.1 449.3C637.1 458.6 638.8 468.2 640.3 476.9C641.8 485.6 645.1 497.5 646.0 501.7" stroke="#6e4838" stroke-width="1.2" opacity="0.33"/>
<path d="M471.7 100.8C470.4 102.7 466.8 107.8 463.8 112.0C460.8 116.1 457.4 120.6 453.7 125.6C450.0 130.6 445.6 135.8 441.6 142.1C437.7 148.4 433.8 155.6 430.1 163.3C426.5 171.0 421.4 184.1 419.6 188.2" stroke="#36363a" stroke-width="1.6" opacity="0.48"/>
<path d="M480.1 107.9C482.7 108.7 491.0 110.2 495.9 112.3C500.7 114.4 504.3 117.3 509.2 120.6C514.1 123.9 519.9 127.6 525.2 132.2C530.4 136.7 538.0 145.2 540.6 147.8" stroke="#303034" stroke-width="0.8" opacity="0.70"/>
<path d="M474.1 99.0C473.1 100.5 470.4 104.5 467.9 108.2C465.4 112.0 462.5 116.7 459.4 121.3C456.2 125.9 452.4 130.4 448.9 136.0C445.3 141.6 441.6 147.7 438.1 154.8C434.5 161.8 431.0 170.2 427.5 178.5C424.0 186.7 420.4 195.5 417.2 204.2C414.1 212.9 410.0 226.4 408.6 230.8" stroke="#36363a" stroke-width="1.6" opacity="0.34"/>
<path d="M452.9 141.7C450.8 144.9 444.7 153.5 440.7 160.7C436.8 167.8 432.9 176.4 429.2 184.8C425.5 193.2 420.4 206.8 418.7 211.2" stroke="#1d1d20" stroke-width="2.0" opacity="0.62"/>
<path d="M348.1 457.7C348.4 462.4 349.0 477.0 350.2 486.3C351.5 495.6 353.3 504.7 355.7 513.6C358.1 522.5 363.2 535.2 364.7 539.5" stroke="#5f4c40" stroke-width="0.7" opacity="0.73"/>
<path d="M650.7 447.2C651.4 451.8 653.5 465.7 655.3 474.3C657.1 482.9 661.1 488.7 661.5 498.7C661.8 508.6 658.2 528.1 657.5 533.9" stroke="#7e695e" stroke-width="1.1" opacity="0.66"/>
<path d="M355.6 271.5C354.9 275.9 351.0 290.3 351.3 298.0C351.6 305.7 355.9 310.4 357.4 317.5C358.9 324.7 360.4 331.9 360.1 340.9C359.8 350.0 356.3 366.7 355.5 371.8" stroke="#82664f" stroke-width="0.8" opacity="0.55"/>
<path d="M521.0 118.5C524.1 121.0 534.0 127.9 539.9 133.6C545.9 139.2 551.7 145.7 556.8 152.5C561.9 159.3 566.8 166.7 570.7 174.2C574.6 181.6 578.4 193.5 580.0 197.4" stroke="#857a73" stroke-width="2.0" opacity="0.33"/>
<path d="M639.8 324.7C640.8 328.7 644.0 339.7 646.0 348.7C648.0 357.7 651.7 369.0 651.7 378.8C651.7 388.6 648.5 398.1 645.8 407.5C643.1 416.8 637.2 430.2 635.4 434.7" stroke="#3f2c24" stroke-width="0.9" opacity="0.41"/>
<path d="M652.4 474.7C653.8 478.7 659.7 489.2 660.6 499.1C661.5 509.0 658.4 528.2 658.0 534.1" stroke="#96816f" stroke-width="1.1" opacity="0.72"/>
<path d="M349.5 458.1C349.7 462.9 349.4 477.5 350.6 486.8C351.7 496.1 353.7 505.2 356.4 514.0C359.1 522.8 365.0 535.3 366.8 539.6" stroke="#1d1715" stroke-width="1.6" opacity="0.63"/>
<path d="M527.0 112.8C530.3 115.5 540.9 123.0 547.1 128.8C553.4 134.7 559.3 141.1 564.5 147.9C569.7 154.7 574.6 162.0 578.5 169.5C582.5 177.0 586.2 185.1 588.1 192.8C590.0 200.5 589.7 211.9 590.0 215.8" stroke="#5c524e" stroke-width="1.7" opacity="0.31"/>
<path d="M455.8 115.4C454.0 117.9 448.6 124.7 444.9 130.3C441.3 135.9 437.5 141.9 433.9 148.9C430.3 156.0 426.8 164.4 423.4 172.6C420.1 180.8 416.7 189.7 413.6 198.1C410.6 206.6 407.8 214.8 405.2 223.4C402.6 232.1 399.2 245.6 398.0 250.0" stroke="#573a2d" stroke-width="1.7" opacity="0.43"/>
<path d="M381.5 434.9C381.4 439.8 380.7 454.7 381.0 464.0C381.3 473.4 382.1 482.4 383.2 491.1C384.3 499.8 385.8 508.3 387.8 516.5C389.8 524.6 394.1 536.3 395.4 540.2" stroke="#4e3e35" stroke-width="1.0" opacity="0.37"/>
<path d="M363.4 489.5C364.1 493.9 365.3 507.5 367.4 515.9C369.5 524.4 374.7 536.1 376.2 540.1" stroke="#191412" stroke-width="2.0" opacity="0.34"/>
<path d="M377.6 320.7C378.0 324.5 380.0 334.9 379.8 343.6C379.7 352.3 378.0 362.9 376.9 372.7C375.8 382.6 374.3 392.8 373.1 402.8C371.9 412.8 370.1 423.0 369.4 432.9C368.7 442.8 368.5 452.6 368.8 462.2C369.2 471.8 370.1 481.5 371.5 490.6C372.9 499.6 376.2 512.3 377.2 516.6" stroke="#44352e" stroke-width="2.0" opacity="0.33"/>
<path d="M629.4 465.0C630.2 469.2 633.1 481.5 634.0 490.4C634.9 499.2 635.7 508.7 635.1 518.3C634.4 527.9 631.0 543.1 630.2 548.0" stroke="#7e695e" stroke-width="0.7" opacity="0.37"/>
<path d="M384.2 291.3C384.2 295.0 383.6 306.5 384.1 313.6C384.7 320.6 386.9 325.8 387.5 333.5C388.0 341.2 387.7 350.3 387.5 359.6C387.2 368.9 386.6 379.2 386.0 389.3C385.4 399.3 384.5 409.6 383.8 419.7C383.1 429.8 382.1 440.2 381.9 450.0C381.8 459.7 382.2 468.9 382.9 477.9C383.6 486.9 385.5 499.4 386.0 503.7" stroke="#1e1815" stroke-width="1.5" opacity="0.43"/>
<path d="M594.5 297.2C595.2 302.6 598.2 319.8 598.9 329.3C599.6 338.8 599.0 345.2 598.8 354.4C598.6 363.6 599.2 374.7 597.8 384.5C596.5 394.3 593.4 403.7 590.8 413.1C588.1 422.4 583.4 435.9 581.9 440.5" stroke="#3f2c24" stroke-width="1.2" opacity="0.70"/>
<path d="M434.7 108.1C432.3 111.0 424.4 118.7 419.9 125.5C415.4 132.2 411.4 140.2 407.7 148.7C404.0 157.3 401.0 167.8 397.7 176.8C394.3 185.9 391.0 194.5 387.5 203.1C384.0 211.7 380.5 219.5 376.7 228.5C372.9 237.5 366.8 252.2 364.8 256.9" stroke="#4e3427" stroke-width="1.9" opacity="0.51"/>
<path d="M418.4 185.5C417.0 189.7 412.7 202.3 410.1 210.8C407.5 219.3 405.2 227.6 402.7 236.5C400.3 245.5 397.6 255.1 395.4 264.5C393.2 273.9 390.5 284.4 389.7 292.9C388.8 301.3 389.4 308.1 390.1 315.1C390.9 322.2 393.2 327.4 394.1 335.1C394.9 342.7 395.2 351.7 395.2 360.9C395.2 370.1 394.9 380.2 394.3 390.2C393.7 400.2 392.1 415.8 391.7 420.9" stroke="#684838" stroke-width="1.5" opacity="0.70"/>
<path d="M481.0 87.6C484.5 87.8 495.2 87.2 502.2 88.7C509.1 90.2 515.4 93.0 522.6 96.8C529.8 100.5 537.8 105.9 545.4 111.5C552.9 117.0 564.2 127.1 568.0 130.2" stroke="#151517" stroke-width="1.3" opacity="0.72"/>
<path d="M437.7 109.3C435.2 112.2 427.3 119.8 422.6 126.5C417.9 133.2 413.5 141.1 409.5 149.6C405.5 158.1 402.2 168.6 398.7 177.6C395.3 186.6 390.4 199.5 388.7 203.9" stroke="#46464b" stroke-width="2.0" opacity="0.61"/>
<path d="M593.0 175.9C594.0 179.6 597.6 190.5 599.2 198.3C600.8 206.0 600.6 213.1 602.8 222.6C605.0 232.1 609.3 243.6 612.4 255.3C615.5 267.0 618.7 280.9 621.2 292.7C623.8 304.5 626.0 316.5 627.7 326.1C629.4 335.7 630.1 341.4 631.6 350.4C633.2 359.5 636.8 370.7 637.1 380.5C637.4 390.3 635.2 399.8 633.3 409.1C631.3 418.4 626.6 431.9 625.3 436.5" stroke="#9a7260" stroke-width="1.7" opacity="0.36"/>
<path d="M471.4 87.0C474.9 86.9 485.1 85.4 492.4 86.0C499.7 86.6 507.8 88.0 515.3 90.7C522.8 93.3 530.0 97.2 537.3 102.1C544.6 106.9 552.4 113.5 559.3 119.7C566.1 125.8 572.6 132.3 578.3 139.1C584.0 145.9 589.2 153.2 593.5 160.7C597.8 168.1 602.2 179.9 603.9 183.8" stroke="#36363a" stroke-width="1.1" opacity="0.52"/>
<path d="M424.1 173.2C422.4 177.4 417.1 190.1 414.1 198.5C411.0 206.9 408.4 215.1 405.9 223.8C403.4 232.4 401.3 241.1 399.3 250.4C397.2 259.7 394.8 270.2 393.5 279.4C392.2 288.5 391.3 297.6 391.5 305.2C391.7 312.8 393.8 317.9 394.6 325.0C395.5 332.0 396.3 343.8 396.6 347.5" stroke="#4e3427" stroke-width="1.7" opacity="0.67"/>
<path d="M384.6 344.8C384.6 349.6 384.6 363.8 384.2 373.6C383.7 383.5 382.9 393.6 381.8 403.7C380.7 413.8 378.7 424.2 377.7 434.1C376.6 444.1 375.6 453.9 375.5 463.3C375.4 472.8 375.8 482.0 376.9 490.9C378.1 499.8 379.9 508.3 382.4 516.5C384.9 524.7 390.3 536.3 391.9 540.2" stroke="#56433a" stroke-width="1.0" opacity="0.55"/>
<path d="M595.8 369.2C595.5 374.3 596.0 389.9 594.1 399.5C592.2 409.1 587.1 417.4 584.5 426.7C581.9 436.0 579.9 445.9 578.7 455.2C577.5 464.5 577.3 474.1 577.3 482.7C577.3 491.3 579.5 497.8 578.9 506.8C578.3 515.8 574.3 531.6 573.4 536.6" stroke="#96816f" stroke-width="1.6" opacity="0.60"/>
<path d="M604.3 257.2C605.7 263.3 609.9 282.2 612.6 293.9C615.3 305.5 618.2 317.3 620.5 326.9C622.8 336.5 624.4 342.4 626.3 351.6C628.2 360.7 632.0 371.8 632.0 381.6C632.1 391.4 629.4 400.9 626.8 410.2C624.1 419.6 618.2 428.2 616.3 437.6C614.5 447.0 615.0 457.5 615.7 466.5C616.4 475.6 619.2 483.0 620.4 491.7C621.6 500.5 622.5 514.6 622.9 519.2" stroke="#8b6350" stroke-width="1.0" opacity="0.31"/>
<path d="M388.8 247.1C387.4 251.9 382.7 266.9 380.8 276.1C378.9 285.2 377.2 294.3 377.2 301.9C377.2 309.5 379.8 314.5 380.7 321.6C381.6 328.7 382.6 335.8 382.5 344.4C382.4 353.0 380.9 363.5 380.1 373.3C379.2 383.1 378.2 393.3 377.3 403.4C376.3 413.4 374.9 428.6 374.4 433.7" stroke="#634e43" stroke-width="2.1" opacity="0.63"/>
<path d="M366.1 432.3C366.0 437.2 364.9 451.9 365.2 461.6C365.4 471.3 366.2 481.2 367.6 490.3C369.0 499.5 371.0 508.3 373.4 516.6C375.9 524.9 380.9 536.3 382.4 540.3" stroke="#5f4c40" stroke-width="0.8" opacity="0.36"/>
<path d="M614.7 398.2C613.0 402.7 606.7 416.1 604.5 425.4C602.2 434.7 601.3 444.6 601.1 453.9C601.0 463.3 602.6 472.8 603.7 481.4C604.9 490.0 608.0 496.4 608.0 505.5C607.9 514.6 604.2 531.0 603.5 536.1" stroke="#7e695e" stroke-width="0.8" opacity="0.40"/>
<path d="M368.7 447.4C368.9 452.2 369.1 467.1 369.8 476.4C370.4 485.8 371.0 494.9 372.5 503.7C374.1 512.5 376.8 521.9 379.0 529.3C381.1 536.7 384.3 544.9 385.4 548.0" stroke="#3a2e29" stroke-width="2.0" opacity="0.58"/>
<path d="M472.8 85.8C476.0 85.6 485.3 84.0 492.2 84.6C499.1 85.1 506.8 86.5 514.2 89.2C521.7 91.9 533.1 98.8 536.9 100.7" stroke="#46464b" stroke-width="1.2" opacity="0.54"/>
<path d="M506.2 124.7C508.8 126.5 516.8 131.2 522.0 135.4C527.1 139.6 532.8 144.2 537.2 149.9C541.6 155.6 545.3 162.4 548.3 169.5C551.3 176.7 553.5 185.1 555.3 192.8C557.1 200.4 557.9 207.9 559.2 215.6C560.4 223.3 560.8 230.3 562.6 238.8C564.5 247.4 568.9 262.2 570.2 266.8" stroke="#4a413d" stroke-width="1.0" opacity="0.42"/>
<path d="M434.0 134.2C432.2 137.9 426.7 148.1 423.2 156.2C419.7 164.3 416.3 174.0 413.0 182.8C409.7 191.5 406.3 199.9 403.2 208.5C400.0 217.1 397.1 225.2 394.2 234.1C391.3 243.0 387.1 257.4 385.7 262.0" stroke="#684838" stroke-width="1.0" opacity="0.32"/>
<path d="M640.2 463.3C641.3 467.5 645.3 479.6 646.8 488.5C648.3 497.5 649.7 507.1 649.3 517.0C648.9 526.9 645.2 542.8 644.4 548.0" stroke="#5a463b" stroke-width="1.3" opacity="0.47"/>
<path d="M388.6 333.5C388.4 337.9 388.2 350.3 387.6 359.6C387.0 368.9 385.9 379.3 385.0 389.3C384.2 399.3 383.2 409.6 382.6 419.7C382.0 429.8 381.6 444.9 381.4 450.0" stroke="#1e1815" stroke-width="1.6" opacity="0.59"/>
<path d="M615.1 353.1C615.9 358.1 619.7 373.4 619.6 383.2C619.5 393.0 616.9 402.5 614.5 411.8C612.1 421.1 606.8 429.8 605.2 439.2C603.6 448.6 604.3 459.1 604.9 468.1C605.5 477.1 608.0 484.5 608.8 493.1C609.6 501.8 610.4 510.9 609.7 520.0C609.1 529.2 605.7 543.3 604.9 548.0" stroke="#96816f" stroke-width="1.1" opacity="0.63"/>
<path d="M402.7 259.3C402.3 264.2 400.5 279.5 400.3 288.4C400.1 297.4 400.7 305.5 401.6 312.9C402.6 320.2 404.6 325.8 405.9 332.7C407.1 339.5 408.1 346.3 409.0 353.9C409.8 361.5 410.2 370.0 410.9 378.4C411.6 386.8 412.8 399.8 413.2 404.1" stroke="#806c5e" stroke-width="1.5" opacity="0.32"/>
<path d="M558.9 136.8C561.4 140.2 569.5 150.1 573.8 157.3C578.2 164.5 582.1 172.3 584.9 179.9C587.7 187.5 589.1 194.9 590.6 202.8C592.0 210.8 591.8 218.3 593.8 227.6C595.9 236.9 599.9 247.5 602.6 258.7C605.4 269.9 608.3 283.3 610.5 294.8C612.7 306.3 614.4 318.0 615.8 327.6C617.1 337.2 617.4 343.3 618.5 352.5C619.6 361.6 621.8 377.5 622.5 382.5" stroke="#4a3a33" stroke-width="0.8" opacity="0.52"/>
<path d="M586.0 230.8C587.1 235.9 590.3 250.1 592.7 261.0C595.1 271.8 598.0 284.9 600.3 296.1C602.6 307.4 604.9 319.0 606.5 328.6C608.1 338.1 609.2 349.4 609.7 353.6" stroke="#75625a" stroke-width="0.8" opacity="0.39"/>
<path d="M396.9 317.9C397.4 321.2 399.1 330.3 399.7 337.7C400.2 345.2 400.0 353.9 400.1 362.7C400.2 371.5 400.2 381.1 400.1 390.7C400.0 400.3 399.7 410.4 399.6 420.3C399.6 430.2 399.2 440.6 399.6 450.1C399.9 459.5 401.0 468.2 401.8 476.8C402.7 485.4 403.6 493.1 404.7 501.6C405.9 510.1 407.5 520.0 408.7 527.7C409.9 535.5 411.4 544.6 412.0 548.0" stroke="#634e43" stroke-width="2.0" opacity="0.49"/>
<path d="M371.1 462.4C371.4 467.1 371.6 481.6 372.6 490.6C373.7 499.6 375.2 508.3 377.4 516.6C379.5 524.8 384.4 536.3 385.8 540.3" stroke="#1d1715" stroke-width="0.7" opacity="0.62"/>
<path d="M379.7 260.1C378.3 264.9 372.8 280.1 371.5 288.6C370.2 297.0 371.1 303.7 371.9 310.8C372.8 317.8 376.0 322.9 376.8 330.7C377.5 338.4 377.0 347.9 376.5 357.3C375.9 366.8 374.5 377.5 373.4 387.6C372.3 397.6 370.5 412.5 369.9 417.5" stroke="#634e43" stroke-width="1.3" opacity="0.32"/>
<path d="M509.2 97.6C512.7 99.4 523.1 104.0 530.4 108.6C537.6 113.2 545.9 119.3 552.8 125.3C559.6 131.3 566.2 137.7 571.6 144.5C577.1 151.3 581.9 158.6 585.7 166.1C589.4 173.6 592.5 181.7 594.1 189.3C595.7 196.9 595.1 207.8 595.3 211.5" stroke="#222225" stroke-width="1.4" opacity="0.56"/>
<path d="M586.6 179.9C587.2 183.7 589.6 194.9 590.5 202.8C591.4 210.8 590.5 218.3 592.2 227.6C593.8 236.9 597.7 247.5 600.6 258.7C603.5 269.9 606.9 283.3 609.6 294.8C612.3 306.3 614.9 318.0 616.8 327.6C618.6 337.2 620.0 348.3 620.6 352.5" stroke="#85726a" stroke-width="1.3" opacity="0.36"/>
<path d="M632.5 464.3C633.4 468.5 636.5 480.8 637.9 489.7C639.3 498.7 640.9 508.2 641.0 517.9C641.0 527.6 638.4 543.0 637.9 548.0" stroke="#96816f" stroke-width="1.1" opacity="0.43"/>
<path d="M608.2 203.0C609.6 208.0 613.1 221.6 616.6 232.8C620.1 243.9 625.1 257.2 629.0 269.9C632.9 282.6 637.0 298.0 639.8 309.1C642.7 320.1 645.1 331.5 646.1 336.0" stroke="#75625a" stroke-width="1.2" opacity="0.31"/>
<path d="M635.8 421.2C635.3 426.0 632.6 440.4 632.9 449.7C633.2 459.1 635.5 468.6 637.5 477.4C639.4 486.1 643.8 492.6 644.6 502.2C645.3 511.8 642.4 529.6 642.0 535.1" stroke="#8a7060" stroke-width="0.9" opacity="0.47"/>
<path d="M610.9 179.6C611.3 183.0 611.5 191.3 613.4 199.7C615.3 208.0 618.8 218.5 622.4 229.9C626.0 241.3 631.2 255.1 635.2 268.1C639.2 281.1 643.4 296.8 646.3 308.0C649.2 319.1 650.8 326.0 652.8 335.0C654.9 344.0 657.5 357.5 658.4 362.0" stroke="#75625a" stroke-width="1.8" opacity="0.50"/>
<path d="M632.2 396.0C630.5 400.5 624.3 413.9 622.3 423.2C620.3 432.4 619.8 442.3 620.1 451.7C620.4 461.0 622.6 470.6 624.2 479.2C625.7 487.9 629.3 494.3 629.5 503.7C629.7 513.1 625.9 530.3 625.2 535.6" stroke="#2a201c" stroke-width="1.0" opacity="0.62"/>
<path d="M469.6 91.5C467.6 93.1 462.0 97.4 457.7 101.1C453.4 104.9 448.6 109.2 443.8 114.1C439.0 119.0 433.4 124.1 428.8 130.7C424.3 137.2 420.1 144.9 416.5 153.2C412.9 161.6 410.0 171.8 407.1 180.8C404.1 189.7 401.6 198.3 398.9 206.9C396.2 215.5 392.4 228.2 391.0 232.4" stroke="#56565b" stroke-width="1.5" opacity="0.41"/>
<path d="M580.4 264.2C581.5 269.8 585.0 287.1 586.8 298.1C588.6 309.0 590.4 320.4 591.1 329.9C591.8 339.4 591.4 345.8 591.1 355.0C590.8 364.2 591.0 375.3 589.5 385.1C587.9 394.9 584.8 404.4 581.8 413.7C578.8 423.0 574.1 431.7 571.6 441.1C569.2 450.5 567.8 465.2 567.0 470.0" stroke="#7d5442" stroke-width="0.9" opacity="0.47"/>
<path d="M600.2 277.3C601.3 283.3 605.0 302.9 606.7 313.4C608.5 324.0 609.5 331.5 610.8 340.6C612.1 349.7 613.6 358.4 614.4 368.0C615.1 377.6 617.1 388.6 615.6 398.2C614.1 407.8 607.7 416.1 605.4 425.4C603.0 434.7 601.7 444.6 601.3 453.9C600.9 463.3 602.6 476.9 602.9 481.4" stroke="#7d5442" stroke-width="1.8" opacity="0.31"/>
<path d="M479.5 95.1C482.6 95.5 491.8 95.7 497.9 97.4C504.0 99.1 509.6 101.9 516.2 105.5C522.8 109.1 530.3 113.9 537.4 119.2C544.4 124.4 552.0 130.6 558.4 137.0C564.8 143.4 570.8 150.3 575.7 157.5C580.5 164.7 584.8 172.5 587.4 180.1C590.1 187.7 590.7 195.1 591.5 203.1C592.3 211.0 592.1 223.7 592.2 227.8" stroke="#36363a" stroke-width="1.1" opacity="0.32"/>
<path d="M575.1 186.2C575.8 190.0 578.6 201.3 579.5 209.1C580.4 217.0 579.5 224.4 580.7 233.3C581.9 242.2 584.5 252.0 586.6 262.6C588.7 273.3 591.3 286.1 593.2 297.2C595.2 308.3 597.3 323.9 598.1 329.2" stroke="#3b2f2a" stroke-width="1.6" opacity="0.32"/>
<path d="M425.7 380.8C427.0 384.5 431.5 395.0 433.5 402.6C435.4 410.3 436.6 418.6 437.4 426.8C438.3 434.9 438.6 443.4 438.5 451.7C438.4 460.0 437.2 472.3 436.9 476.4" stroke="#44352e" stroke-width="1.4" opacity="0.39"/>
<path d="M391.8 421.0C391.6 426.1 390.6 442.0 390.7 451.6C390.8 461.3 391.7 470.2 392.6 478.9C393.5 487.6 394.5 495.4 396.0 503.8C397.6 512.1 400.8 524.8 401.7 529.0" stroke="#191412" stroke-width="0.8" opacity="0.71"/>
<path d="M465.9 86.1C463.4 87.7 456.1 91.8 451.2 95.6C446.3 99.4 441.4 103.8 436.5 108.9C431.7 114.0 426.5 119.4 422.0 126.1C417.5 132.8 413.3 140.7 409.4 149.3C405.5 157.8 402.2 168.3 398.6 177.3C395.0 186.4 391.5 194.9 388.0 203.6C384.5 212.2 381.2 220.1 377.7 229.0C374.1 238.0 370.2 247.8 366.8 257.4C363.4 266.9 358.8 281.6 357.2 286.5" stroke="#36363a" stroke-width="1.7" opacity="0.44"/>
<path d="M598.8 296.4C599.6 301.8 602.4 319.1 603.6 328.7C604.9 338.3 605.3 344.6 606.2 353.8C607.1 363.0 609.3 374.1 608.9 383.9C608.5 393.6 606.0 403.1 603.5 412.4C601.1 421.8 596.1 430.4 594.3 439.8C592.4 449.2 592.3 459.8 592.4 468.8C592.5 477.8 594.4 485.2 594.7 493.8C595.1 502.5 595.5 511.5 594.6 520.5C593.7 529.6 590.2 543.4 589.3 548.0" stroke="#9a7260" stroke-width="1.2" opacity="0.49"/>
<path d="M634.3 325.3C635.1 329.4 637.5 340.4 639.2 349.5C641.0 358.5 644.6 369.7 644.7 379.5C644.9 389.3 642.3 398.8 640.0 408.1C637.8 417.5 632.3 426.1 631.1 435.5C629.9 444.9 631.4 455.3 632.8 464.4C634.1 473.5 637.6 480.9 639.0 489.8C640.4 498.8 641.0 513.3 641.4 518.0" stroke="#8b6350" stroke-width="1.1" opacity="0.42"/>
<path d="M576.2 299.7C575.7 304.8 575.6 319.8 573.3 329.8C571.0 339.9 566.9 350.3 562.5 360.2C558.2 370.0 551.1 378.1 547.2 388.8C543.3 399.6 541.0 413.2 538.9 424.7C536.8 436.3 535.8 447.7 534.6 458.1C533.5 468.5 532.9 478.3 532.1 487.2C531.3 496.2 530.2 507.8 529.8 511.9" stroke="#4d3329" stroke-width="0.8" opacity="0.37"/>
<path d="M585.5 150.9C587.5 154.7 594.7 166.2 597.7 173.6C600.6 181.1 601.8 188.0 603.4 195.7C604.9 203.4 604.4 210.2 606.7 219.8C609.0 229.4 613.8 241.4 617.2 253.3C620.7 265.3 624.5 279.6 627.5 291.5C630.6 303.5 633.3 315.6 635.3 325.2C637.4 334.8 638.2 340.3 639.9 349.3C641.6 358.3 644.5 374.3 645.4 379.3" stroke="#4a3a33" stroke-width="2.1" opacity="0.46"/>
<path d="M415.1 227.7C414.0 232.7 410.0 247.4 408.8 257.7C407.6 268.0 407.2 280.1 407.7 289.6C408.1 299.1 409.7 307.3 411.5 314.9C413.3 322.5 416.2 328.6 418.5 335.3C420.7 341.9 422.8 348.5 425.1 354.9C427.4 361.3 429.6 367.5 432.3 373.7C435.1 379.8 438.8 385.5 441.7 391.9C444.5 398.2 448.3 408.4 449.6 411.7" stroke="#573a2d" stroke-width="0.9" opacity="0.35"/>
<path d="M648.0 379.1C647.2 383.8 645.8 398.4 643.5 407.7C641.3 417.0 635.8 425.7 634.6 435.0C633.3 444.4 634.8 454.9 636.1 463.9C637.4 473.0 640.9 480.4 642.3 489.4C643.7 498.3 644.4 513.0 644.8 517.7" stroke="#4c3a31" stroke-width="2.2" opacity="0.71"/>
<path d="M449.5 107.2C447.4 109.6 441.0 116.1 436.8 121.7C432.6 127.3 428.1 133.4 424.2 140.9C420.3 148.4 415.2 162.5 413.4 166.8" stroke="#28282b" stroke-width="0.9" opacity="0.51"/>
<path d="M460.7 119.9C458.7 122.3 453.0 129.1 448.9 134.6C444.8 140.2 440.3 146.3 436.2 153.3C432.2 160.4 428.1 168.7 424.6 176.9C421.1 185.1 417.7 193.9 415.0 202.5C412.2 211.1 409.3 224.3 408.2 228.7" stroke="#56565b" stroke-width="1.5" opacity="0.48"/>
<path d="M583.3 280.3C584.3 286.0 588.1 304.3 589.1 314.5C590.2 324.7 590.1 332.5 589.8 341.6C589.5 350.7 587.9 364.6 587.5 369.2" stroke="#3f2c24" stroke-width="0.8" opacity="0.34"/>
<path d="M397.9 267.4C397.3 272.1 394.4 287.2 394.1 295.5C393.7 303.9 394.7 310.6 395.7 317.6C396.6 324.6 398.8 330.0 399.8 337.5C400.7 345.0 400.9 353.7 401.1 362.5C401.3 371.4 400.9 386.0 400.8 390.7" stroke="#775846" stroke-width="1.5" opacity="0.59"/>
<path d="M644.6 308.2C645.9 312.7 650.1 326.2 652.4 335.2C654.8 344.2 657.2 352.5 658.7 362.1C660.2 371.7 662.9 383.2 661.4 392.8C659.8 402.4 651.9 410.5 649.3 419.6C646.7 428.7 645.6 438.4 645.8 447.6C645.9 456.8 648.3 466.2 650.4 474.8C652.5 483.4 657.2 489.4 658.3 499.2C659.3 509.1 656.8 528.3 656.5 534.1" stroke="#3f2c24" stroke-width="2.0" opacity="0.39"/>
<path d="M576.1 299.0C575.7 304.0 576.0 319.1 573.6 329.2C571.3 339.3 566.9 349.8 562.1 359.7C557.4 369.5 549.6 377.5 545.3 388.3C541.0 399.1 538.4 413.0 536.2 424.6C533.9 436.3 532.8 447.8 531.8 458.2C530.8 468.7 530.5 478.5 530.0 487.4C529.4 496.4 529.0 503.6 528.5 512.1C527.9 520.6 527.0 534.0 526.7 538.3" stroke="#3f2c24" stroke-width="1.0" opacity="0.36"/>
<path d="M519.5 102.5C523.4 104.8 535.2 111.2 542.5 116.5C549.8 121.9 557.3 128.2 563.5 134.7C569.7 141.1 575.1 147.9 579.5 155.1C583.9 162.3 587.5 170.3 589.9 177.8C592.3 185.4 592.8 192.6 593.9 200.4C595.0 208.3 594.3 215.5 596.4 224.9C598.4 234.4 602.9 245.4 606.2 256.9C609.6 268.4 613.5 282.1 616.4 293.7C619.4 305.4 622.7 321.3 623.9 326.8" stroke="#231e1c" stroke-width="1.6" opacity="0.63"/>
<path d="M431.0 132.4C428.9 136.1 422.2 146.4 418.5 154.7C414.8 162.9 411.7 172.9 408.8 181.7C405.8 190.6 403.3 199.1 400.7 207.7C398.1 216.3 396.0 224.3 393.4 233.2C390.8 242.2 387.7 251.8 385.0 261.2C382.2 270.5 378.2 284.8 376.8 289.6" stroke="#3a271f" stroke-width="1.5" opacity="0.49"/>
<path d="M658.8 406.1C657.1 410.6 649.8 423.7 648.4 432.9C647.0 442.1 648.8 452.5 650.4 461.3C652.0 470.2 656.0 477.0 658.0 486.0C659.9 494.9 661.3 510.2 662.0 515.1" stroke="#6a5447" stroke-width="2.2" opacity="0.74"/>
<path d="M528.8 129.4C531.7 132.1 541.1 139.7 546.1 145.9C551.1 152.1 555.2 159.3 558.8 166.5C562.3 173.7 565.3 181.7 567.4 189.2C569.6 196.8 570.4 204.2 571.5 212.0C572.6 219.8 572.4 227.1 574.0 235.8C575.6 244.6 578.8 254.0 581.2 264.3C583.5 274.7 587.0 292.4 588.2 298.0" stroke="#231e1c" stroke-width="1.9" opacity="0.36"/>
<path d="M395.5 248.9C394.3 253.7 389.8 268.7 387.9 277.9C386.0 287.0 384.3 296.2 384.2 303.7C384.1 311.3 386.3 316.4 387.2 323.5C388.1 330.5 389.3 342.3 389.7 346.1" stroke="#2a1b15" stroke-width="0.7" opacity="0.55"/>
<path d="M455.3 98.9C453.1 101.1 446.6 107.0 442.0 112.0C437.3 116.9 431.9 122.1 427.3 128.7C422.6 135.3 418.2 143.1 414.2 151.6C410.2 160.0 406.7 170.4 403.2 179.4C399.8 188.4 396.6 197.0 393.6 205.6C390.6 214.2 388.0 222.2 385.1 231.1C382.2 240.0 377.6 254.5 376.2 259.1" stroke="#36363a" stroke-width="1.0" opacity="0.71"/>
<path d="M628.0 396.7C626.1 401.2 619.4 414.6 617.1 423.9C614.7 433.2 613.8 443.1 613.8 452.4C613.9 461.8 615.8 471.3 617.4 479.9C618.9 488.6 622.7 495.0 623.1 504.3C623.4 513.6 620.2 530.5 619.7 535.8" stroke="#6a5447" stroke-width="1.7" opacity="0.41"/>
<path d="M480.0 111.9C482.3 112.7 489.4 114.6 493.7 116.8C498.1 119.1 501.4 122.1 506.0 125.2C510.7 128.4 516.5 131.6 521.6 135.8C526.6 140.0 532.2 144.5 536.6 150.2C540.9 155.8 545.7 166.5 547.5 169.7" stroke="#46464b" stroke-width="1.6" opacity="0.44"/>
<path d="M556.5 167.4C558.1 171.2 563.7 182.7 565.9 190.3C568.1 197.9 568.8 205.4 569.5 213.1C570.3 220.8 569.5 228.1 570.6 236.8C571.7 245.4 574.1 255.2 576.1 265.1C578.1 274.9 581.0 285.7 582.8 295.7C584.5 305.8 586.4 316.0 586.9 325.5C587.4 335.0 586.7 343.2 585.6 352.6C584.4 362.1 582.6 372.2 580.1 382.1C577.6 392.0 572.2 406.8 570.7 411.8" stroke="#3b2f2a" stroke-width="1.1" opacity="0.71"/>
<path d="M590.9 342.3C590.8 346.8 591.0 360.1 590.3 369.7C589.5 379.3 589.0 390.4 586.5 400.0C584.1 409.5 578.7 417.9 575.6 427.2C572.6 436.5 569.4 450.9 568.2 455.7" stroke="#6e4838" stroke-width="1.0" opacity="0.45"/>
<path d="M633.0 310.0C633.9 314.5 636.8 327.9 638.6 336.9C640.4 345.8 642.3 354.2 643.7 363.7C645.0 373.2 647.8 384.4 646.7 394.0C645.5 403.6 638.8 411.9 636.7 421.2C634.7 430.5 634.1 440.3 634.4 449.7C634.7 459.0 636.9 468.6 638.6 477.3C640.4 486.1 644.3 492.5 644.8 502.2C645.2 511.8 641.9 529.6 641.3 535.1" stroke="#9a7260" stroke-width="1.0" opacity="0.43"/>
<path d="M385.1 231.1C383.4 235.8 377.7 249.7 374.5 259.2C371.3 268.6 367.2 279.3 365.9 287.8C364.6 296.3 365.8 303.0 366.9 310.0C368.0 317.1 371.7 322.1 372.6 330.0C373.5 337.8 373.0 347.3 372.3 356.9C371.7 366.5 370.0 377.4 368.7 387.5C367.3 397.5 365.7 407.2 364.4 417.0C363.1 426.8 361.5 436.4 360.9 446.1C360.4 455.8 361.1 470.3 361.1 475.2" stroke="#1e1815" stroke-width="1.3" opacity="0.60"/>
<path d="M413.8 218.1C412.5 222.6 408.3 236.1 406.1 245.6C403.9 255.1 401.8 265.7 400.7 275.2C399.5 284.6 398.6 294.2 399.0 302.3C399.4 310.4 401.2 316.9 402.8 323.8C404.5 330.7 407.1 336.4 408.8 343.6C410.5 350.7 411.8 358.5 413.1 366.4C414.3 374.4 415.7 387.0 416.2 391.1" stroke="#2a1b15" stroke-width="1.4" opacity="0.52"/>
<path d="M540.2 118.7C543.5 121.7 554.1 130.2 560.0 136.6C565.8 143.0 571.0 149.9 575.3 157.1C579.6 164.3 583.3 172.1 585.9 179.7C588.4 187.3 589.3 194.7 590.6 202.6C591.8 210.5 591.3 218.0 593.2 227.3C595.2 236.7 599.3 247.3 602.2 258.6C605.2 269.8 609.5 288.7 611.0 294.7" stroke="#5c524e" stroke-width="1.7" opacity="0.53"/>
<path d="M530.7 88.2C534.7 90.8 546.6 97.9 554.3 103.7C562.1 109.5 570.0 116.3 577.1 122.9C584.2 129.5 591.4 136.0 597.0 143.2C602.6 150.4 607.5 158.8 610.9 166.1C614.3 173.5 616.3 183.7 617.4 187.2" stroke="#303034" stroke-width="1.7" opacity="0.61"/>
<path d="M350.6 443.9C350.6 448.7 350.1 463.1 350.5 472.5C350.9 482.0 351.4 491.2 353.2 500.3C355.0 509.5 358.6 519.7 361.3 527.6C364.0 535.5 368.1 544.6 369.5 548.0" stroke="#1d1715" stroke-width="0.9" opacity="0.58"/>
<path d="M435.5 121.2C433.3 124.4 426.2 132.8 422.3 140.4C418.4 147.9 415.2 157.5 411.9 166.4C408.7 175.3 405.7 185.0 402.7 193.8C399.6 202.7 396.6 210.6 393.6 219.2C390.6 227.9 386.0 241.2 384.5 245.6" stroke="#2a1b15" stroke-width="1.5" opacity="0.46"/>
<path d="M607.6 204.0C608.8 209.0 611.5 222.6 614.5 233.7C617.5 244.7 622.0 257.8 625.6 270.5C629.3 283.1 633.4 298.4 636.4 309.4C639.4 320.4 641.4 327.3 643.7 336.3C645.9 345.3 648.8 358.7 649.8 363.1" stroke="#4a3a33" stroke-width="1.0" opacity="0.61"/>
<path d="M587.8 134.2C590.6 137.8 600.4 148.3 604.7 155.7C609.1 163.2 612.3 171.6 613.9 178.8C615.5 185.9 613.0 190.3 614.4 198.6C615.7 207.0 618.4 217.6 621.8 229.0C625.2 240.5 630.5 254.4 634.9 267.5C639.2 280.6 644.2 296.4 647.8 307.6C651.4 318.8 654.0 325.7 656.6 334.7C659.2 343.7 662.1 357.2 663.3 361.7" stroke="#907d74" stroke-width="1.3" opacity="0.41"/>
<path d="M551.4 125.2C554.5 128.4 564.4 137.7 570.0 144.5C575.6 151.3 580.8 158.6 585.0 166.0C589.2 173.5 593.0 181.7 595.0 189.3C597.0 196.8 595.8 203.0 597.1 211.5C598.4 219.9 600.5 229.6 602.9 240.1C605.2 250.6 608.6 262.5 611.2 274.5C613.9 286.5 617.5 305.6 618.8 311.8" stroke="#231e1c" stroke-width="0.9" opacity="0.64"/>
<path d="M609.2 438.7C609.0 443.5 607.8 458.6 608.3 467.6C608.7 476.6 611.1 484.0 612.0 492.7C612.8 501.4 613.8 510.6 613.4 519.8C613.0 529.0 610.1 543.3 609.5 548.0" stroke="#4c3a31" stroke-width="1.9" opacity="0.33"/>
<path d="M635.8 325.1C636.8 329.1 639.5 340.2 641.4 349.2C643.4 358.2 647.2 369.4 647.4 379.2C647.5 389.0 644.8 398.5 642.4 407.8C640.0 417.2 634.3 425.8 632.9 435.2C631.6 444.6 632.9 455.1 634.2 464.1C635.4 473.2 639.0 480.6 640.5 489.6C642.1 498.5 643.0 513.1 643.5 517.8" stroke="#6e4838" stroke-width="1.4" opacity="0.35"/>
<path d="M606.1 328.5C606.6 332.7 608.2 344.3 609.4 353.5C610.5 362.7 613.2 373.8 613.0 383.6C612.7 393.4 610.2 402.9 607.8 412.2C605.4 421.5 600.3 430.2 598.4 439.6C596.6 449.0 596.7 459.5 596.9 468.5C597.1 477.5 599.1 485.0 599.6 493.6C600.1 502.2 599.8 515.9 599.8 520.3" stroke="#9a7260" stroke-width="1.5" opacity="0.40"/>
<path d="M497.4 103.4C500.0 104.8 507.5 108.1 513.3 111.6C519.0 115.1 525.7 119.6 531.9 124.6C538.2 129.6 544.9 135.5 550.6 141.7C556.3 148.0 561.5 155.1 566.0 162.3C570.4 169.5 574.6 177.4 577.3 185.0C580.0 192.6 581.2 200.0 582.2 207.9C583.3 215.8 583.5 228.2 583.7 232.3" stroke="#37302d" stroke-width="2.2" opacity="0.33"/>
<path d="M637.2 434.6C637.7 439.4 638.5 454.4 640.2 463.4C641.8 472.4 645.7 479.7 647.2 488.7C648.7 497.6 649.9 507.3 649.3 517.1C648.7 527.0 644.4 542.9 643.5 548.0" stroke="#7e695e" stroke-width="1.2" opacity="0.31"/>
<path d="M481.3 88.0C484.8 88.2 495.5 87.6 502.4 89.1C509.2 90.7 515.4 93.4 522.5 97.2C529.5 101.0 537.3 106.3 544.8 111.8C552.2 117.4 563.3 127.4 567.1 130.6" stroke="#222225" stroke-width="1.7" opacity="0.73"/>
<path d="M419.1 379.5C419.6 383.5 421.6 395.1 422.3 403.4C423.0 411.7 423.0 420.8 423.4 429.4C423.9 438.1 424.4 446.9 424.9 455.4C425.4 463.9 426.2 476.2 426.5 480.4" stroke="#342924" stroke-width="2.1" opacity="0.57"/>
</g>

<g clip-path="url(#hairclip)">
  <g filter="url(#b5)" fill="none" stroke-linecap="round">
    <!-- dark bands near the face -->
    <path d="M440 142 C424 166 412 200 404 236 C397 268 397 300 405 330 C412 352 430 374 444 398 C456 425 454 470 448 505 L440 548" stroke="#120d0c" stroke-width="22" opacity="1"/>
    <path d="M478 96 C470 108 462 122 452 138" stroke="#171311" stroke-width="16" opacity=".9"/>
    <path d="M500 118 C525 128 545 150 556 190 C562 225 572 260 580 295 C584 320 578 345 562 370 C548 390 540 420 536 460 C534 500 536 530 540 548" stroke="#19120f" stroke-width="11" opacity=".9"/>
    <path d="M350 500 C360 520 370 535 380 548" stroke="#17110f" stroke-width="26" opacity=".8"/>
    <path d="M552 480 C556 510 560 530 566 548" stroke="#17110f" stroke-width="24" opacity=".85"/>
    <path d="M622 210 C634 250 648 290 656 330 C662 360 668 380 668 395" stroke="#201713" stroke-width="7" opacity=".8"/>
    <path d="M600 262 C606 285 612 305 616 325" stroke="#1b1411" stroke-width="9" opacity=".7"/>
    <path d="M640 425 C640 450 648 475 654 500" stroke="#1d1512" stroke-width="9" opacity=".65"/>
  </g>
</g>

<g clip-path="url(#hairclip)" fill="none" stroke-linecap="round">
  <g filter="url(#b3)">
    <path d="M488 106 C512 104 542 116 564 142" stroke="#7f7772" stroke-width="9" opacity="0.33"/>
    <path d="M560 128 C584 150 600 178 606 210" stroke="#7a6f69" stroke-width="8" opacity="0.27"/>
    <path d="M472 98 C452 108 434 128 420 158" stroke="#6a625e" stroke-width="7" opacity="0.24"/>
    <path d="M600 440 C612 470 626 500 630 540" stroke="#85746a" stroke-width="7" opacity=".45"/>
    <path d="M366 250 C360 275 356 295 358 315" stroke="#7a6455" stroke-width="7" opacity=".4"/>
    <path d="M372 380 C376 410 384 440 396 470" stroke="#76665c" stroke-width="8" opacity=".4"/>
  </g>
  <g filter="url(#b05)">
    <path d="M490 98 C520 100 552 114 582 146" stroke="#a39b96" stroke-width="1.200" opacity="0.42"/>
    <path d="M489 103 C516 104 546 118 570 146" stroke="#968e89" stroke-width="1" opacity="0.42"/>
    <path d="M490 110 C512 110 538 122 558 146" stroke="#aaa29d" stroke-width="1.100" opacity="0.39"/>
    <path d="M492 116 C510 116 530 126 548 146" stroke="#8f8782" stroke-width="1" opacity="0.36"/>
    <path d="M540 108 C566 124 590 150 604 186" stroke="#90857f" stroke-width="1.100" opacity="0.36"/>
    <path d="M556 122 C580 142 598 170 608 204" stroke="#9a8f89" stroke-width="1" opacity="0.33"/>
    <path d="M470 96 C450 106 432 126 418 154" stroke="#857d78" stroke-width="1" opacity="0.33"/>
    <path d="M476 104 C458 114 442 132 430 156" stroke="#7d7570" stroke-width="1" opacity="0.30"/>
    <path d="M462 90 C440 102 420 124 406 156" stroke="#777069" stroke-width="1" opacity="0.30"/>
  </g>
</g>


<!-- lapels peeking between hair and chest -->
<path d="M443 493 C448 505 453 520 458 548 L436 548 C440 530 442 510 443 493 Z" fill="#7089aa" filter="url(#b1)"/>
<path d="M519 548 L521 520 C528 528 536 538 541 548 Z" fill="#7089aa" filter="url(#b1)"/>
<path d="M384 548 C387 534 393 524 401 518 C404 528 404 540 403 548 Z" fill="#566a8a" filter="url(#b2)" opacity=".75"/>
<path d="M558 548 C558 532 561 520 567 512 C572 522 572 537 570 548 Z" fill="#566a8a" filter="url(#b2)" opacity=".75"/>
<!-- neck + chest -->
<defs>
  <linearGradient id="neckg" x1="0" y1="330" x2="0" y2="550" gradientUnits="userSpaceOnUse">
    <stop offset="0" stop-color="#a87050"/><stop offset="0.22" stop-color="#b47c59"/><stop offset="0.33" stop-color="#c48d69"/><stop offset="0.45" stop-color="#dcaa8a"/><stop offset="0.6" stop-color="#eec3a7"/><stop offset="1" stop-color="#e9bb9e"/>
  </linearGradient>
  <clipPath id="neckclip"><path d="M425 330 L440 365 C444 375 450 388 453 398 C456 410 457 422 456 432 C455 450 454 465 454.5 480 C455 495 457 505 458 513 L459.5 548 L519 548 L521 513 C522 500 523 490 524 480 C525 462 527 445 530 430 C533 418 538 408 541 398 C544 388 548 372 549 362 L560 330 Z"/></clipPath>
  <clipPath id="faceclip"><path id="facepath" d="M488 134 C503 134 519 138 530 146 C538 152 543 161 546 171 C549 180 550 186 551 192 C554 208 557 224 559 238 C566 258 574 282 576 301 C577 318 574 333 568 346 C563 356 556 362 548 367 C540 372 530 377 520 380 C512 382 504 382.5 496 382.5 C480 382 470 380 462 375 C453 370 446 364 440 356 C432 346 426 337 422 329 C417 320 415 316 414 312 C411 300 409 288 409 275 C408 268 408 262 409 256 C410 248 411 243 412.5 237 C415 222 418 205 422 190 C423.500 183 425 177 427.500 171 C431 161 438 152 446 146 C458 137.500 473 134 488 134 Z"/></clipPath>
</defs>
<g clip-path="url(#neckclip)">
  <rect x="420" y="330" width="140" height="220" fill="url(#neckg)"/>
  <path d="M440 360 C452 374 470 384 496 386 C522 386 545 372 556 352" fill="none" stroke="#99623f" stroke-width="9" opacity=".75" filter="url(#b3)"/>
  <g filter="url(#b5)">
    <path d="M436 350 C466 402 524 404 556 350 L556 330 L436 330 Z" fill="#a36d4e" opacity=".9"/>
    <ellipse cx="490" cy="480" rx="20" ry="50" fill="#f6d0b8" opacity=".8"/>
    <path d="M450 420 L459 420 L462 548 L450 548 Z" fill="#c8967a" opacity=".7"/>
    <path d="M534 420 L524 420 L516 548 L530 548 Z" fill="#c69275" opacity=".75"/>
    <path d="M455 398 C475 410 515 410 538 398" fill="none" stroke="#ab7452" stroke-width="3" opacity=".6"/>
  </g>
</g>
<!-- face -->
<g clip-path="url(#faceclip)">
  <rect x="400" y="130" width="185" height="260" fill="#f5cfba"/>
  <g filter="url(#b8)">
    <ellipse cx="489" cy="188" rx="36" ry="30" fill="#fde4d5"/>
    <ellipse cx="494" cy="270" rx="12" ry="34" fill="#fbdac8"/>
    <ellipse cx="450" cy="287" rx="24" ry="22" fill="#fce4d9"/>
    <ellipse cx="542" cy="288" rx="22" ry="22" fill="#fbe1d5"/>
    <ellipse cx="494" cy="366" rx="24" ry="10" fill="#f6cdb5"/>
    <path d="M400 140 L440 150 L424 230 L420 300 L436 350 L474 392 L400 392 Z" fill="#dfa383" opacity=".9"/>
    <path d="M590 200 L556 220 L568 290 L566 340 L540 392 L590 392 Z" fill="#cf9577" opacity=".9"/>
    <path d="M436 372 C468 392 522 392 552 370 L552 395 L436 395 Z" fill="#dda482" opacity=".85"/>
    <ellipse cx="496" cy="366" rx="30" ry="10" fill="#efbe9f" opacity=".6"/>
    <path d="M436 160 C460 135 520 135 548 170 L548 130 L436 130 Z" fill="#dca98d" opacity=".7"/>
  </g>
</g>

<!-- facial features -->
<g>
  <!-- eye socket shading -->
  <g filter="url(#b3)" opacity=".55">
    <ellipse cx="453" cy="238" rx="19" ry="7" fill="#dfa98c"/>
    <ellipse cx="533" cy="238" rx="19" ry="7" fill="#dfa98c"/>
    <ellipse cx="454" cy="256" rx="16" ry="4" fill="#e0ab90"/>
    <ellipse cx="532" cy="256" rx="16" ry="4" fill="#e0ab90"/>
  </g>
  <!-- eyebrows -->
  <g filter="url(#b1)">
    <path d="M427.500 228.500 C434 221.500 446 218.500 456 220 C464 221.200 471 224 475.500 227.500 C476 229.500 475 230.800 473 230.500 C462 225.500 446 224 429 229.800 C427.500 230 427 229.200 427.500 228.500 Z" fill="#80594a"/>
    <path d="M509.500 226 C516 220.500 526 218 536 217.800 C544 218 551 219.800 556 222.500 C549 223 540 223 531 224.500 C523 226 516 228.500 511.500 230.500 C509.500 230.500 508.800 228 509.500 226 Z" fill="#80594a"/>
  </g>
  <!-- eyes -->
  <g filter="url(#b05)">
    <path d="M437.500 248.500 C443 241 452 238.800 460 240 C466 241.500 470 245.500 472 250 C465 253 457 254 450 253.500 C445 253 441 251.500 437.500 248.500 Z" fill="#d2b7ac"/>
    <path d="M515.500 249.500 C518 244 523 240.500 529 239.500 C538 238.200 546 241 551 247.500 C546 251.500 541 253.500 535 254 C527 254.500 520 253 515.500 249.500 Z" fill="#d2b7ac"/>
    <circle cx="455.800" cy="246.200" r="6.300" fill="#1a1312"/>
    <circle cx="532" cy="246" r="6.300" fill="#1a1312"/>
    <path d="M435.500 249.500 C441 240.500 451 237.200 461 239 C467.500 240.500 471 245 473 250.500 C469 246 464 243.500 458 243 C449 242.500 442 245 435.500 249.500 Z" fill="#140e0d" stroke="#140e0d" stroke-width="1.400" stroke-linejoin="round"/>
    <path d="M514 250.500 C517 243.500 522 239.500 529 238.500 C539 237 547.500 240.500 552.500 248 C547 243.500 541 242 534 242.200 C526 242.500 519 245.500 514 250.500 Z" fill="#140e0d" stroke="#140e0d" stroke-width="1.400" stroke-linejoin="round"/>
    <path d="M439 250.500 C447 254.800 461 255 471 250.500" fill="none" stroke="#6b443a" stroke-width="1" opacity=".8"/>
    <path d="M517 251.500 C525 255.600 541 255.500 550 249.500" fill="none" stroke="#6b443a" stroke-width="1" opacity=".8"/>
    <circle cx="454.200" cy="244.600" r="1.200" fill="#f4f0ee"/>
    <circle cx="533.600" cy="244.400" r="1.200" fill="#f4f0ee"/>
  </g>
  <!-- nose -->
  <g filter="url(#b2)">
    <path d="M483 248 C480 268 476 286 474 298" fill="none" stroke="#e4ad92" stroke-width="3" opacity=".7"/>
    <path d="M508 248 C510 268 514 286 519 298" fill="none" stroke="#e9b79d" stroke-width="3" opacity=".6"/>
    <ellipse cx="495" cy="296" rx="9" ry="7" fill="#fbdccb" opacity=".8"/>
  </g>
  <g filter="url(#b1)">
    <path d="M473 299 C472 306 478 309.5 485 307.5 C491 311.5 501 311.5 507 307.5 C514 309.5 521 306 520 298" fill="none" stroke="#c7886d" stroke-width="1.8" opacity=".9"/>
    <ellipse cx="484" cy="306" rx="3.2" ry="1.5" fill="#8d5641" opacity=".85"/>
    <ellipse cx="508" cy="306" rx="3.2" ry="1.5" fill="#8d5641" opacity=".85"/>
    <!-- smile lines -->
    <path d="M471 297 C464 303 455 309 449 314 C447 318 446.500 322 447 326" fill="none" stroke="#d9a58b" stroke-width="2.200" opacity=".6"/>
    <path d="M522 296 C530 302 538 308 544 313 C546 317 546.500 321 546 325" fill="none" stroke="#d9a58b" stroke-width="2.200" opacity=".6"/>
  </g>
  <!-- mouth -->
  <g filter="url(#b05)">
    <path d="M465 324.5 C475 322 488 321.2 496 323.4 C504 321 518 320.6 529.5 323.5 C527.500 334 518 345 505 348.500 C497 350.300 488 350 481 346.800 C473 342.500 468 333 465 324.500 Z" fill="#c8616a"/>
    <path d="M468 326.5 C480 325.3 490 326 496 326.6 C504 326 516 325 527 325.6 C524 332 516 338 506 339.500 C497 340.600 487 340 480 338 C474 335.500 470.500 331 468 326.500 Z" fill="#f5f0e9"/>
    <path d="M468 326.5 C470 329 471 331 474 334" stroke="#5c2a2c" stroke-width="1.6" fill="none" opacity=".7"/>
    <path d="M527 325.6 C525.5 328.5 524 331 521 334" stroke="#5c2a2c" stroke-width="1.6" fill="none" opacity=".7"/>
    <path d="M478 327 L478.5 336 M485 326.5 L485.5 338 M496 326.6 L496 339 M507 326.3 L506.5 338 M515 325.8 L514 336" stroke="#d9cfc4" stroke-width="0.6" fill="none"/>
    <ellipse cx="492.500" cy="344" rx="7" ry="2.200" fill="#f3c9c9" opacity=".9"/>
  </g>
  <ellipse cx="496" cy="356" rx="16" ry="2.5" fill="#dfa98e" opacity=".6" filter="url(#b2)"/>
  <!-- earring -->
  <circle cx="409.2" cy="275" r="2.4" fill="#e9dcc0" stroke="#8a6a4a" stroke-width="0.6"/>
  <!-- forehead spot -->
  
</g>

<!-- red arrow annotation -->
<g>
  <path d="M659 161.800 L525 167.800" stroke="#e3202c" stroke-width="2" fill="none"/>
  <path d="M518.500 168.200 L526.800 164.600 L527.200 171 Z" fill="#e3202c"/>
  <path d="M505 165.200 L512 168.800" stroke="#d8a48d" stroke-width="1.200" fill="none" opacity=".8" filter="url(#b05)"/>
</g>

</g>
</svg>

</div>

<!-- ============ menu bar ============ -->
<div id="menubar">
  <div class="abs" style="left:4px;top:2px;width:9px;height:9px;background:#0c2b52;border-radius:2px;border:0.6px solid #2d6bb5"></div>
  <span class="t" style="left:5.6px;top:4.2px;font-size:4.6px;color:#7db9f5">Ps</span>
  <span class="t" style="left:19px">File</span>
  <span class="t" style="left:34.5px">Edit</span>
  <span class="t" style="left:52px">Image</span>
  <span class="t" style="left:76px">Layer</span>
  <span class="t" style="left:97.5px">Type</span>
  <span class="t" style="left:117px">Select</span>
  <span class="t" style="left:140px">Filter</span>
  <span class="t" style="left:160.5px">3D</span>
  <span class="t" style="left:173.5px">View</span>
  <span class="t" style="left:194px">Plugins</span>
  <span class="t" style="left:220.5px">Window</span>
  <span class="t" style="left:250.5px">Help</span>
  <!-- window controls -->
  <div class="abs" style="left:972.500px;top:6px;width:6px;height:1.600px;background:#d0d0d0"></div>
  <div class="abs" style="left:987px;top:4px;width:5px;height:5px;border:1px solid #cfcfcf"></div>
  <div class="abs" style="left:989px;top:2.5px;width:5px;height:5px;border-top:1px solid #cfcfcf;border-right:1px solid #cfcfcf"></div>
  <svg class="ico" style="left:1006px;top:2px" width="8" height="8" viewBox="0 0 8 8"><path d="M1 1 L7 7 M7 1 L1 7" stroke="#dcdcdc" stroke-width="1.3" fill="none"/></svg>
</div>

<!-- ============ options bar ============ -->
<div id="optbar">
  <!-- home -->
  <svg class="ico" style="left:10px;top:5px" width="11" height="10" viewBox="0 0 11 10"><path d="M5.5 0.2 L0.2 5 L1.6 5 L1.6 9.6 L4.3 9.6 L4.3 6.2 L6.7 6.2 L6.7 9.6 L9.4 9.6 L9.4 5 L10.8 5 Z" fill="#ededed"/></svg>
  <!-- patch tool icon -->
  <svg class="ico" style="left:33px;top:6px" width="11" height="9" viewBox="0 0 11 9"><rect x="1.2" y="1.2" width="8.6" height="6.4" rx="1.6" fill="none" stroke="#e4e4e4" stroke-width="1.2"/><path d="M3 0.2v2M5.5 0.2v2M8 0.2v2M3 6.8v2M5.5 6.8v2M8 6.8v2M0.2 3h2M0.2 5.6h2M8.8 3h2M8.8 5.6h2" stroke="#535353" stroke-width="0.6"/></svg>
  <svg class="ico" style="left:50px;top:9px" width="5" height="4" viewBox="0 0 5 4"><path d="M0.5 2.2 L1.8 3.4 L4.5 0.5" stroke="#7a7a7a" stroke-width="0.9" fill="none"/></svg>
  <div class="abs" style="left:58.5px;top:3px;width:1px;height:15px;background:#444"></div>
  <!-- selection mode buttons -->
  <div class="abs" style="left:63.5px;top:3px;width:13px;height:13.5px;background:#2b2b2b;border-radius:1px"></div>
  <div class="abs" style="left:67px;top:6.5px;width:6.4px;height:6.6px;background:#ececec"></div>
  <div class="abs" style="left:78.5px;top:5.5px;width:6.2px;height:6.2px;background:#ececec"></div>
  <div class="abs" style="left:81.5px;top:8.5px;width:6.4px;height:6.4px;background:#ececec;box-shadow:-0.6px -0.6px 0 #535353"></div>
  <div class="abs" style="left:93.5px;top:6px;width:5px;height:5px;background:#ececec"></div>
  <div class="abs" style="left:95.8px;top:8.5px;width:6px;height:6px;background:#535353;border:1px solid #e0e0e0"></div>
  <div class="abs" style="left:106.2px;top:5.8px;width:6.2px;height:6.2px;border:1px solid #dcdcdc"></div>
  <div class="abs" style="left:109.4px;top:9px;width:6.2px;height:6.2px;border:1px solid #dcdcdc"></div>
  <div class="abs" style="left:109.4px;top:9px;width:3px;height:3px;background:#e6e6e6"></div>
  <div class="abs" style="left:122.5px;top:3px;width:1px;height:15px;background:#444"></div>
  <!-- patch dropdown -->
  <span class="t" style="left:129.5px;top:6.8px;font-size:6.5px;color:#d2d2d2">Patch:</span>
  <div class="dd" style="left:152px;top:4.5px;width:57.5px;height:11.5px"></div>
  <span class="t" style="left:156.5px;top:7px;font-size:6.4px">Normal</span>
  <svg class="ico" style="left:203px;top:9.2px" width="4.4" height="3" viewBox="0 0 4.4 3"><path d="M0.4 0.5 L2.2 2.3 L4 0.5" stroke="#cfcfcf" stroke-width="0.8" fill="none"/></svg>
  <!-- source / destination -->
  <div class="abs" style="left:222px;top:4.5px;width:35.3px;height:12px;background:#3a3a3a;border-radius:1px 0 0 1px"></div>
  <span class="t" style="left:229px;top:7.2px;font-size:6.4px">Source</span>
  <div class="abs" style="left:257.8px;top:4.5px;width:49.2px;height:12px;background:#5c5c5c;border-radius:0 1px 1px 0"></div>
  <span class="t" style="left:265.5px;top:7.2px;font-size:6.4px">Destination</span>
  <div class="abs" style="left:313px;top:7.5px;width:6.4px;height:6.4px;background:#484848;border:0.8px solid #6a6a6a"></div>
  <span class="t" style="left:323px;top:7.4px;font-size:6.4px">Transparent</span>
  <div class="abs" style="left:374.5px;top:5px;width:45.5px;height:11px;background:#5a5a5a;border-radius:1px"></div>
  <span class="t" style="left:381px;top:7.4px;font-size:6.2px;color:#767676;font-weight:normal">Use Pattern</span>
  <div class="abs" style="left:440.5px;top:5px;width:4px;height:11px;background:#595959;border:0.5px solid #4a4a4a"></div>
  <span class="t" style="left:456.5px;top:7.2px;font-size:6.4px;color:#d2d2d2">Diffusion:</span>
  <div class="dd" style="left:491.5px;top:4.5px;width:18.5px;height:11.5px"></div>
  <span class="t" style="left:494.5px;top:7px;font-size:6.6px">5</span>
  <div class="abs" style="left:511.4px;top:4.5px;width:7px;height:11.5px;background:#4a4a4a;border:0.6px solid #606060"></div>
  <svg class="ico" style="left:512.8px;top:9.5px" width="4.4" height="3" viewBox="0 0 4.4 3"><path d="M0.4 0.5 L2.2 2.3 L4 0.5" stroke="#cfcfcf" stroke-width="0.8" fill="none"/></svg>
  <!-- right side icons -->
  <svg class="ico" style="left:969.500px;top:5.800px" width="11" height="11" viewBox="0 0 11 11"><circle cx="4.4" cy="4.4" r="3.2" fill="none" stroke="#e2e2e2" stroke-width="1.2"/><path d="M6.8 6.8 L10 10" stroke="#e2e2e2" stroke-width="1.4"/></svg>
  <svg class="ico" style="left:986.800px;top:6.200px" width="11" height="9" viewBox="0 0 11 9"><rect x="0.6" y="0.6" width="9.4" height="7.4" fill="none" stroke="#e0e0e0" stroke-width="1.1"/><rect x="1.5" y="2" width="2.6" height="5.4" fill="#e0e0e0"/></svg>
  <svg class="ico" style="left:1002.800px;top:9.400px" width="4.4" height="3" viewBox="0 0 4.4 3"><path d="M0.4 0.5 L2.2 2.3 L4 0.5" stroke="#bdbdbd" stroke-width="0.8" fill="none"/></svg>
  <svg class="ico" style="left:1009px;top:3.5px" width="11" height="12" viewBox="0 0 11 12"><path d="M3 4.5 L0.8 4.5 L0.8 11 L10.2 11 L10.2 4.5 L8 4.5" fill="none" stroke="#e6e6e6" stroke-width="1.2"/><path d="M5.5 8 L5.5 1 M3.2 3 L5.5 0.8 L7.8 3" fill="none" stroke="#e6e6e6" stroke-width="1.2"/></svg>

</div>

<!-- ============ tab bar ============ -->
<div id="tabbar">
  <div id="tab">
    <span class="t" style="left:6px;top:4px;font-size:6.6px;color:#f0f0f0">8.psd @ 134% (Layer 1, RGB/8*) *</span>
    <span class="t" style="left:119.500px;top:4.200px;font-size:6px;color:#9a9a9a;font-weight:normal">×</span>
  </div>
</div>

<!-- ============ tools ============ -->
<div id="tools">
  <div id="toolshead"><span class="t" style="left:3px;top:0.5px;font-size:5px;color:#ccc">»</span></div>
<svg class="ico" style="left:0;top:0" width="25" height="517" viewBox="0 35 25 517" fill="none" stroke="#e4e4e4" stroke-width="1.1" stroke-linecap="round" stroke-linejoin="round">
  <!-- selected tool bg -->
  <rect x="2.3" y="163.6" width="17" height="13.6" rx="1" fill="#383838" stroke="none"/>
  <!-- corner triangles -->
  <g fill="#cfcfcf" stroke="none">
    <path d="M20.2 63.5v-1.6l-1.6 1.6z M20.2 79.5v-1.6l-1.6 1.6z M20.2 95.5v-1.6l-1.6 1.6z M20.2 111.5v-1.6l-1.6 1.6z M20.2 127.5v-1.6l-1.6 1.6z M20.2 160.5v-1.6l-1.6 1.6z M20.2 192.5v-1.6l-1.6 1.6z M20.2 208.5v-1.6l-1.6 1.6z M20.2 224.5v-1.6l-1.6 1.6z M20.2 240v-1.6l-1.6 1.6z M20.2 256v-1.6l-1.6 1.6z M20.2 272v-1.6l-1.6 1.6z M20.2 288v-1.6l-1.6 1.6z M20.2 304v-1.6l-1.6 1.6z M20.2 320v-1.6l-1.6 1.6z M20.2 336v-1.6l-1.6 1.6z M20.2 352v-1.6l-1.6 1.6z M20.2 368v-1.6l-1.6 1.6z M20.2 400v-1.6l-1.6 1.6z M20.2 468v-1.6l-1.6 1.6z"/>
  </g>
  <!-- move -->
  <path d="M12 54v9.5M7.2 58.7h9.6" stroke-width="1.2"/>
  <path d="M12 53.2l-1.8 2.2h3.6z M12 64.2l-1.8-2.2h3.6z M6.5 58.7l2.2-1.8v3.6z M17.5 58.7l-2.2-1.8v3.6z" fill="#e4e4e4" stroke="none"/>
  <!-- marquee -->
  <rect x="7" y="69.5" width="10.6" height="8.6" stroke-dasharray="1.8 1.1" stroke-width="1.1" stroke-linecap="butt"/>
  <!-- lasso -->
  <ellipse cx="13" cy="89" rx="4.8" ry="3.6" transform="rotate(-15 13 89)"/>
  <path d="M9.2 91.5c-1.2 0.6-1.4 2 .2 2.6c1.2.4 1 1.2.2 1.6" stroke-width="1"/>
  <!-- wand -->
  <path d="M7.8 110.5L14.6 103.7" stroke-width="2"/>
  <path d="M16.2 101v2M15.2 102h2M18 104.6v1.6M17.2 105.4h1.6M13 101.4v1.2" stroke-width=".8"/>
  <!-- crop -->
  <path d="M9 117.5v8h8.8M6.4 120h8.8v8" stroke-width="1.4" stroke-linecap="butt"/>
  <!-- frame -->
  <rect x="7.2" y="133.4" width="10.4" height="9.4"/>
  <path d="M7.2 133.4l10.4 9.4M17.6 133.4l-10.4 9.4" stroke-width=".9"/>
  <!-- eyedropper -->
  <path d="M7.6 159.6l1.2-3l5-5l1.8 1.8l-5 5z" fill="#e4e4e4" stroke-width=".6"/>
  <path d="M13.2 152.2l2.2-2.6c.8-.8 2.2.4 1.4 1.4l-2.4 2.4" fill="#e4e4e4" stroke-width=".8"/>
  <!-- patch (selected) -->
  <rect x="7" y="166.6" width="9.8" height="7.6" rx="1.8" stroke-width="1.3"/>
  <path d="M9.2 165.6v2M12 165.6v2M14.6 165.6v2M9.2 173.2v2M12 173.2v2M14.6 173.2v2M6 169v0M6 169h2M6 171.8h2M15.8 169h2M15.8 171.8h2" stroke="#383838" stroke-width=".55"/>
  <!-- brush -->
  <path d="M16.6 181.6l-6 6.6" stroke-width="1.8"/>
  <path d="M7.4 191.8c.2-1.6.8-2.8 2.2-3.2c1.2.2 1.6 1.200 1.400 2c-.8 1.2-2.200 1.400-3.600 1.200z" fill="#e4e4e4" stroke-width=".5"/>
  <!-- stamp -->
  <path d="M10.600 200.600a1.900 1.900 0 1 1 3 0c-.4.800-.4 1.600 0 2.400h2.400v2.200h-7.800v-2.200h2.400c.4-.8.400-1.600 0-2.400z" fill="#e4e4e4" stroke-width=".5"/>
  <path d="M8.200 207h7.800" stroke-width="1"/>
  <!-- history brush -->
  <path d="M17 213.800l-5.400 6.400" stroke-width="1.700"/>
  <path d="M8.400 223.800c.2-1.500.7-2.600 2-3c1.100.2 1.500 1.100 1.300 1.900c-.7 1.100-2 1.300-3.300 1.100z" fill="#e4e4e4" stroke-width=".5"/>
  <path d="M6.400 217.600a3 3 0 0 1 4.800-2.400M11.600 213.800v1.800h-1.800" stroke-width=".9"/>
  <!-- eraser -->
  <path d="M8.400 236.200l5.400-5.600l3.800 3l-4.200 5h-3.200z" stroke-width="1"/>
  <path d="M11.200 233.200l3.900 3.100l2.500-2.700l-3.800-3z" fill="#e4e4e4" stroke="none"/>
  <path d="M8 239.200h9.800" stroke-width=".9"/>
  <!-- gradient -->
  <defs><linearGradient id="tg" x1="0" y1="0" x2="1" y2="0"><stop offset="0" stop-color="#3a3a3a"/><stop offset="1" stop-color="#e6e6e6"/></linearGradient></defs>
  <rect x="6.800" y="245.800" width="10.400" height="8" fill="url(#tg)" stroke="#dcdcdc" stroke-width=".9"/>
  <!-- smudge -->
  <path d="M9 271l2.600-4.400c-1.400-.6-1.600-2.200-.4-3.200c1.400-1.200 3.600-1.600 5.200-.8c.6 1.800-.4 4.200-2 5c-.8.400-1.400.2-1.800-.2z" fill="#e4e4e4" stroke-width=".5"/>
  <!-- dodge -->
  <path d="M7.400 281.200c.6-1.800 2.600-2.600 4.600-2.200c2.400.6 4.400 2.400 5 4.800c-1.600 1-3.600.8-5 .6c-2.600-.2-4.800-1.200-4.600-3.200z" fill="#e4e4e4" stroke-width=".5"/>
  <circle cx="10.200" cy="281.600" r="1.300" fill="#535353" stroke="none"/>
  <!-- pen -->
  <path d="M8.200 303l.8-4.200l4.400-4.200l3.400 3.200l-4.400 4.400z" stroke-width="1"/>
  <path d="M8.400 302.800l3.800-3.800" stroke-width=".8"/><circle cx="12.600" cy="298.600" r=".9" fill="#e4e4e4" stroke="none"/>
  <path d="M14.600 293.400l3.200 3" stroke-width="1.200"/>
  <!-- path select arrow -->
  <path d="M10 325.200v9l2.200-2l1.600 3.400l1.400-.6l-1.600-3.400h2.800z" fill="#e4e4e4" stroke-width=".4"/>
  <!-- rectangle -->
  <rect x="6.800" y="342.200" width="11" height="7.800" fill="#6e6e6e" stroke-width="1"/>
  <!-- hand -->
  <path d="M9.400 367.600c-1-1.600-2-3.200-2.200-4.400c.6-.8 1.400-.4 2.200.8v-4.600c.2-.9 1.300-.9 1.500 0v-1.200c.2-.9 1.400-.9 1.600 0v1c.2-.9 1.400-.8 1.500.1v1c.3-.8 1.400-.7 1.500.2v4c0 1.400-.4 2.300-1 3.100z" fill="#e4e4e4" stroke-width=".4"/>
  <!-- zoom -->
  <circle cx="11.300" cy="376.800" r="3.400" stroke-width="1.200"/><path d="M13.800 379.400l3.400 3.400" stroke-width="1.600"/>
  <!-- dots -->
  <g fill="#e4e4e4" stroke="none"><circle cx="8.400" cy="394" r="1.100"/><circle cx="12.200" cy="394" r="1.100"/><circle cx="16" cy="394" r="1.100"/></g>
  <!-- default / swap -->
  <rect x="3.600" y="405.800" width="3.200" height="3.200" fill="#111" stroke="#ddd" stroke-width=".5"/>
  <rect x="5.400" y="407.600" width="3.200" height="3.200" fill="#f4f4f4" stroke="none"/>
  <path d="M15 406.400h3.400v3.400M16.400 405.200l-1.600 1.200l1.600 1.200M17.200 408.400l1.200 1.600l1.200-1.600" stroke-width=".7"/>
  <!-- fg/bg -->
  <rect x="9.400" y="421.400" width="11.400" height="11" fill="#ffffff" stroke="#bdbdbd" stroke-width=".5"/>
  <rect x="3" y="415.400" width="11.200" height="10.400" fill="#000" stroke="#c8c8c8" stroke-width=".7"/>
  <!-- quick mask -->
  <rect x="6.800" y="439.800" width="11" height="8.600" stroke-width="1"/>
  <ellipse cx="12.300" cy="444.100" rx="2.600" ry="2.200" stroke-width=".8" stroke-dasharray="1 .7"/>
  <!-- screen mode -->
  <rect x="9.400" y="455.200" width="9" height="6.200" stroke-width="1"/>
  <rect x="6.400" y="458" width="9" height="6.200" fill="#535353" stroke-width="1"/>
</svg>
<!-- T tool as real text -->
<span class="t" style="left:7.6px;top:273.4px;font-family:'Liberation Serif',serif;font-size:13px;color:#e8e8e8">T</span>

</div>

<!-- ============ scrollbars / status ============ -->
<div id="vscroll"><div id="vthumb"></div></div>
<div id="status"><span class="t" id="st1" style="left:2.300px;top:1.300px;font-size:7px;font-weight:normal;color:#dedede;transform-origin:0 0;transform:scaleX(.8)">133.54%</span><span class="t" id="st2" style="left:29px;top:1.300px;font-size:7px;font-weight:normal;color:#dedede;transform-origin:0 0;transform:scaleX(.968)">1012 px x 1280 px (300 ppi)</span><span class="t" style="left:119.500px;top:0.600px;font-size:7px;font-weight:normal;color:#cfcfcf">›</span><span class="t" style="left:128px;top:0.600px;font-size:7px;font-weight:normal;color:#8a8a8a">‹</span></div>
<div id="hscroll"><div id="hthumb"></div></div>

<!-- ============ right strip ============ -->
<div id="rstrip">
  <div class="abs" style="left:-2px;top:0;width:23px;height:6.500px;background:#424242"></div>
  <span class="t" style="left:13.500px;top:0.800px;font-size:4.600px;color:#d0d0d0">«</span>
  <svg class="ico" style="left:0;top:0" width="19" height="517" viewBox="1005 35 19 517" fill="none" stroke="#e2e2e2" stroke-width="1" stroke-linecap="round" stroke-linejoin="round">
    <!-- brush settings -->
    <path d="M1018.600 49.600l-5.200 5.600" stroke-width="1.700"/><path d="M1010.200 58.600c.2-1.400.7-2.400 1.900-2.800c1 .2 1.400 1 1.200 1.800c-.7 1-1.900 1.200-3.100 1z" fill="#e2e2e2" stroke-width=".4"/>
    <path d="M1008.400 49.400h2.400v3h-2.400zM1008.400 50.900h2.400" stroke-width=".6"/>
    <!-- brushes -->
    <path d="M1009.400 66.200h9.200M1009.400 71h9.200" stroke-width="1"/><ellipse cx="1012" cy="66.200" rx="1.800" ry="1.300" fill="#e2e2e2" stroke="none"/><path d="M1015.400 69.200h3v3.600h-3z" fill="#e2e2e2" stroke="none"/>
    <path d="M1007 77h17M1007 114.400h17M1007 151.400h17" stroke="#454545" stroke-width=".8"/>
    <!-- history -->
    <rect x="1010" y="86.400" width="3.400" height="8" rx=".6" stroke-width=".9"/><path d="M1010.600 89h2.200M1010.600 91.400h2.200" stroke-width=".6"/>
    <path d="M1015.200 86.600c2.600.4 3.800 3.600 1.600 6.400M1015 85.400l-.4 1.600l1.600.4" stroke-width=".9"/>
    <!-- comment -->
    <path d="M1010.600 102h7.800v5h-4.600l-1.800 2v-2h-1.400z" fill="#e2e2e2" stroke-width=".5"/>
    <!-- paragraph -->
    <path d="M1014.600 138h3M1015 138v8M1016.800 138v8" stroke-width=".9"/><path d="M1015 138h-1.200a2.300 2.300 0 0 0 0 4.600h1.200z" fill="#e2e2e2" stroke-width=".4"/>
    <!-- adjustments -->
    <path d="M1009.800 161.400h8.400M1009.800 164.400h8.400M1009.800 167.400h8.400" stroke-width=".8"/>
    <g fill="#535353" stroke-width=".7"><circle cx="1012.400" cy="161.400" r="1"/><circle cx="1015.800" cy="164.400" r="1"/><circle cx="1012.800" cy="167.400" r="1"/></g>
    <!-- half circle -->
    <circle cx="1013.900" cy="179.500" r="3.700" stroke-width="1"/><path d="M1011.300 182.100a3.700 3.700 0 0 0 5.200-5.200z" fill="#e2e2e2" stroke="none"/>
    <!-- libraries -->
    <rect x="1010.200" y="190" width="7.600" height="7.400" rx=".6" stroke-width="1"/><path d="M1014.200 190v3.400h3.600" stroke-width=".9"/>
  </svg>
  <span class="t" style="left:5.400px;top:87.600px;font-size:8.500px;color:#e6e6e6;font-weight:normal">A</span>
  <div class="abs" style="left:12.200px;top:88px;width:0.800px;height:8px;background:#e0e0e0"></div>

</div>

<!-- ============ layers panel ============ -->
<div id="lp">
  <!-- tab row -->
  <div class="abs" style="left:0;top:0;width:135px;height:17px;background:#424242;border-top:1px solid #2c2c2c"></div>
  <div class="abs" style="left:0;top:1px;width:28.500px;height:16px;background:#535353"></div>
  <span class="t" style="left:5.400px;top:6.300px;font-size:6.100px;color:#f4f4f4">Layers</span>
  <span class="t" style="left:33px;top:6.300px;font-size:6.100px;color:#b8b8b8;font-weight:normal">Channels</span>
  <span class="t" style="left:70px;top:6.300px;font-size:6.100px;color:#b8b8b8;font-weight:normal">Paths</span>
  <span class="t" style="left:115.500px;top:5.600px;font-size:6px;color:#b0b0b0;font-weight:normal">»</span>
  <div class="abs" style="left:124px;top:5.500px;width:0.800px;height:8px;background:#8a8a8a"></div>
  <div class="abs" style="left:128.400px;top:7.400px;width:5.400px;height:0.900px;background:#c8c8c8;box-shadow:0 1.700px 0 #c8c8c8,0 3.400px 0 #c8c8c8"></div>
  <!-- kind row -->
  <div class="dd" style="left:3.800px;top:23.200px;width:51px;height:10.400px"></div>
  <span class="t" style="left:14.500px;top:24.600px;font-size:6.200px">Kind</span>
  <!-- blend row -->
  <div class="dd" style="left:3.800px;top:38.800px;width:66px;height:10.800px"></div>
  <span class="t" style="left:7.300px;top:40.800px;font-size:6.200px">Normal</span>
  <span class="t" style="left:73.700px;top:40.800px;font-size:6.200px;color:#cfcfcf;font-weight:normal">Opacity:</span>
  <div class="dd" style="left:101.500px;top:38.800px;width:23.600px;height:10.800px"></div>
  <span class="t" style="left:104px;top:40.800px;font-size:6.200px">100%</span>
  <div class="abs" style="left:126px;top:38.800px;width:8px;height:10.800px;background:#4a4a4a;border:0.600px solid #606060"></div>
  <!-- lock row -->
  <span class="t" style="left:3.800px;top:56.400px;font-size:6.200px;color:#cfcfcf;font-weight:normal">Lock:</span>
  <span class="t" style="left:87.400px;top:56.400px;font-size:6.200px;color:#cfcfcf;font-weight:normal">Fill:</span>
  <div class="dd" style="left:101.500px;top:54.800px;width:23.600px;height:10.400px"></div>
  <span class="t" style="left:104px;top:56.400px;font-size:6.200px">100%</span>
  <div class="abs" style="left:126px;top:54.800px;width:8px;height:10.400px;background:#4a4a4a;border:0.600px solid #606060"></div>
  <!-- layer row -->
  <div class="abs" style="left:16.300px;top:69px;width:111.500px;height:21.400px;background:#6a6a6a"></div>
  <span class="t" style="left:37.600px;top:76.400px;font-size:7.200px;color:#e8e8e8;font-weight:normal;transform-origin:0 0;transform:scaleX(.88)">Layer 1</span>
  <!-- thumbnail -->
  <div class="abs" style="left:16.700px;top:69.800px;width:17.200px;height:19.800px;background:#e4e4e2;border:0.900px solid #b9b9b9;overflow:hidden">
    <div class="abs" style="left:0;top:0;width:3px;height:19px;background:#cfd6e0;opacity:.6"></div>
    <div class="abs" style="left:4.400px;top:2.400px;width:7.400px;height:12.500px;background:#2a2423;border-radius:3.600px 3.600px 1.500px 1.500px"></div>
    <div class="abs" style="left:6.400px;top:4.600px;width:3.400px;height:4.600px;background:#e6bda6;border-radius:1.700px"></div>
    <div class="abs" style="left:1.600px;top:13px;width:12.600px;height:5.400px;background:#cf4f5e;border-radius:2.500px 2.500px 0 0"></div>
    <div class="abs" style="left:5px;top:11.500px;width:6px;height:6px;background:#3a2a28;border-radius:1px;opacity:.7"></div>
  </div>
  <!-- bottom separator -->
  <div class="abs" style="left:0;top:136.500px;width:135px;height:1px;background:#4a4a4a"></div>
  <svg class="ico" style="left:0;top:0" width="135" height="155" viewBox="743 69 135 155" fill="none" stroke="#e2e2e2" stroke-width="1" stroke-linecap="round" stroke-linejoin="round">
    <!-- search -->
    <circle cx="750.600" cy="96" r="1.700" stroke-width=".9"/><path d="M751.900 97.300l1.600 1.600" stroke-width="1"/>
    <path d="M792 95.400l1.800 1.800l1.800-1.800M806.600 111.600l1.800 1.800l1.800-1.800M870.600 111.600l1.800 1.800l1.800-1.800M870.600 127.600l1.800 1.800l1.800-1.800" stroke="#c4c4c4" stroke-width=".8"/>
    <!-- filter icons -->
    <rect x="804.800" y="92.600" width="8" height="7" stroke-width=".9"/><path d="M806 98.400l2-2.600l1.600 1.600l1-1l1.200 2z" fill="#e2e2e2" stroke="none"/>
    <circle cx="822" cy="96.200" r="3.600" stroke-width=".9"/><path d="M819.400 98.800a3.600 3.600 0 0 0 5.200-5.200z" fill="#e2e2e2" stroke="none"/>
    <rect x="843.900" y="92.800" width="7.200" height="7" stroke-width=".9"/><g fill="#e2e2e2" stroke="none"><rect x="842.900" y="91.800" width="2" height="2"/><rect x="850.100" y="91.800" width="2" height="2"/><rect x="842.900" y="98.800" width="2" height="2"/><rect x="850.100" y="98.800" width="2" height="2"/></g>
    <path d="M857.400 92.400h4l2.400 2.400v5.400h-6.400z" stroke-width=".9"/><rect x="859.400" y="96.400" width="3.400" height="2.800" fill="#e2e2e2" stroke="none"/>
    <circle cx="873.700" cy="93.400" r="2" fill="#f0f0f0" stroke="none"/>
    <!-- lock icons -->
    <g stroke="none" fill="#e2e2e2"><rect x="765.400" y="124.200" width="7.600" height="7.600" fill="none" stroke="#e2e2e2" stroke-width=".7"/><rect x="765.600" y="124.400" width="2.400" height="2.400"/><rect x="770.400" y="124.400" width="2.400" height="2.400"/><rect x="768" y="126.800" width="2.400" height="2.400"/><rect x="765.600" y="129.200" width="2.400" height="2.400"/><rect x="770.400" y="129.200" width="2.400" height="2.400"/></g>
    <path d="M784.600 124.200l-4.400 4.800" stroke-width="1.500"/><path d="M777.400 132c.2-1.300.6-2.200 1.700-2.500c.9.200 1.200.900 1 1.600c-.6.900-1.700 1-2.700.9z" fill="#e2e2e2" stroke-width=".4"/>
    <path d="M792.700 123.800v8.400M788.500 128h8.400" stroke-width=".9"/><path d="M792.700 123.200l-1.400 1.700h2.800zM792.700 132.800l-1.400-1.700h2.800zM787.900 128l1.700-1.400v2.800zM797.500 128l-1.700-1.400v2.800z" fill="#e2e2e2" stroke="none"/>
    <path d="M802.400 123.600v7h7.200M800.400 125.600h7v7.200" stroke-width=".9" stroke-linecap="butt"/><path d="M805 128.200l3.600-3.600" stroke-width=".7"/>
    <rect x="813.400" y="127" width="6.400" height="5" fill="#e2e2e2" stroke="none" rx=".5"/><path d="M814.800 127v-1.400a1.800 1.800 0 0 1 3.600 0v1.400" stroke-width="1"/>
    <!-- eye -->
    <path d="M747 148.700c1.600-2.600 5.600-2.600 7.200 0c-1.600 2.600-5.600 2.600-7.200 0z" fill="#ececec" stroke="none"/><circle cx="750.600" cy="148.700" r="1.300" fill="#535353" stroke="none"/>
    <!-- bottom icons -->
    <g stroke="#787878"><rect x="753" y="211" width="4.600" height="3" rx="1.500" stroke-width=".8"/><rect x="757" y="211" width="4.600" height="3" rx="1.500" stroke-width=".8"/></g>
    <rect x="786" y="209.600" width="8.400" height="6" fill="#e2e2e2" stroke="none"/><circle cx="790.200" cy="212.600" r="1.900" fill="#535353" stroke="none"/>
    <circle cx="807.700" cy="212.600" r="3.200" stroke-width=".9"/><path d="M805.400 214.900a3.200 3.200 0 0 0 4.600-4.600z" fill="#e2e2e2" stroke="none"/>
    <path d="M820.200 210h3l.8 1h4.200v5h-8z" fill="#e2e2e2" stroke="none"/>
    <rect x="837.600" y="209.200" width="7" height="7" stroke-width=".9"/><path d="M841.100 210.900v3.600M839.300 212.700h3.600" stroke-width=".8"/>
    <g stroke="#767676" stroke-width=".8"><path d="M854.800 210.600h5.400M855.400 210.600l.4 5.800h3.400l.4-5.800M856.600 210.400v-1h1.800v1"/></g>
    <path d="M780.600 216.400v-1l-1 1zM813 216.400v-1l-1 1z" fill="#ddd" stroke="none"/>
  </svg>
  <span class="t" style="left:89.600px;top:24.400px;font-family:'Liberation Serif',serif;font-size:9px;color:#e6e6e6">T</span>
  <span class="t" style="left:28.500px;top:139.600px;font-family:'Liberation Serif',serif;font-style:italic;font-size:8.500px;color:#e6e6e6;font-weight:normal">fx</span>

</div>
<div id="mp">
  <div class="abs" style="left:0;top:0;width:48px;height:7px;background:#484848"></div>
  <span class="t" style="left:34px;top:1px;font-size:4.600px;color:#d0d0d0">«</span>
  <svg class="ico" style="left:43px;top:2px" width="4" height="4" viewBox="0 0 4 4"><path d="M.4.400l3.200 3.200M3.600.400l-3.200 3.200" stroke="#d8d8d8" stroke-width=".9"/></svg>
  <div class="abs" style="left:2.500px;top:13.200px;width:44.500px;height:11.400px;background:#3a3a3a"></div>
  <span class="t" style="left:20px;top:16.400px;font-size:6.200px;color:#f4f4f4">Layers</span>
  <span class="t" style="left:20px;top:31px;font-size:6.200px;color:#f4f4f4">Chan...</span>
  <span class="t" style="left:20px;top:46px;font-size:6.200px;color:#f4f4f4">Paths</span>
  <svg class="ico" style="left:0;top:0" width="48" height="56" viewBox="880 64 48 56" fill="none" stroke="#e6e6e6" stroke-width="1" stroke-linejoin="round" stroke-linecap="round">
    <path d="M889.500 79l4.600 2.300l-4.600 2.300l-4.600-2.300z" fill="#ececec" stroke="none"/>
    <path d="M885 83.800l4.500 2.200l4.500-2.200M885 85.900l4.500 2.200l4.500-2.200" stroke-width=".9"/>
    <circle cx="887.800" cy="96.600" r="2.600" stroke-width="1"/><circle cx="891.200" cy="96.600" r="2.600" stroke-width="1"/><circle cx="889.500" cy="99.600" r="2.600" stroke-width="1"/>
    <path d="M886.200 117v-5.500c0-2 1.500-3.100 3.300-3.100s3.300 1.100 3.300 3.100v5.500" stroke-width=".9"/>
    <g fill="#ececec" stroke="none"><rect x="885.200" y="116" width="2" height="2"/><rect x="891.800" y="116" width="2" height="2"/><rect x="888.500" y="107.400" width="2" height="2"/><rect x="884.400" y="107.800" width="1.600" height="1.200"/><rect x="893" y="107.800" width="1.600" height="1.200"/></g>
    <path d="M886 108.400h7" stroke-width=".6"/>
  </svg>

</div>

<!-- ============ flyout ============ -->
<div id="fly">
  <div class="abs" style="left:0.500px;top:1px;width:116px;height:15px;background:#686868"></div>
  <span class="t" style="top:7.400px">Spot Healing Brush Tool</span><span class="t k" style="top:7.400px;font-weight:normal">J</span>
  <span class="t" style="top:18.900px">Healing Brush Tool</span><span class="t k" style="top:18.900px;font-weight:normal">J</span>
  <span class="t" style="top:30.600px">Patch Tool</span><span class="t k" style="top:30.600px;font-weight:normal">J</span>
  <span class="t" style="top:42.400px">Content-Aware Move Tool</span><span class="t k" style="top:42.400px;font-weight:normal">J</span>
  <span class="t" style="top:53.900px">Red Eye Tool</span><span class="t k" style="top:53.900px;font-weight:normal">J</span>
  <div class="abs" style="left:5.600px;top:31.200px;width:2px;height:2px;background:#f0f0f0"></div>
  <svg class="ico" style="left:0;top:0" width="118" height="63" viewBox="20 160 118 63" fill="none" stroke="#e8e8e8" stroke-width="1" stroke-linecap="round" stroke-linejoin="round">
    <!-- spot healing: bandage -->
    <g transform="rotate(-45 39 170)"><rect x="33.500" y="168" width="11" height="4.200" rx="1.200" fill="#e8e8e8" stroke="none"/><path d="M37 168v4.200M41 168v4.200" stroke="#686868" stroke-width=".5"/></g>
    <path d="M34 175.500c.8.600 1.600.600 2.400 0" stroke-width=".7"/>
    <!-- healing -->
    <g transform="rotate(-45 39 182)"><rect x="33.500" y="180" width="11" height="4.200" rx="1.200" fill="#e8e8e8" stroke="none"/><path d="M37 180v4.200M41 180v4.200" stroke="#535353" stroke-width=".5"/></g>
    <!-- patch -->
    <rect x="34.800" y="190.400" width="8" height="6.400" rx="1.500" stroke-width="1.100"/>
    <path d="M36.800 189.600v1.600M38.800 189.600v1.600M40.800 189.600v1.600M36.800 196v1.600M38.800 196v1.600M40.800 196v1.600" stroke="#535353" stroke-width=".5"/>
    <!-- content aware move -->
    <path d="M34.600 202.400l7.800 6.400M34.600 208.800l7.800-6.400" stroke-width="1.100"/>
    <path d="M42.800 201.800l-2 .2M42.800 201.800l-.2 2M42.800 209.400l-2-.2M42.800 209.400l-.2-2" stroke-width=".9"/>
    <!-- red eye -->
    <path d="M36.600 217.600c1.400-2 5-2 6.600 0c-1.600 2-5.200 2-6.600 0z" stroke-width="1"/><circle cx="39.900" cy="217.600" r="1" fill="#e8e8e8" stroke="none"/>
    <path d="M34.800 213v2.400M33.600 214.200h2.400" stroke-width=".7"/>
  </svg>

</div>
<div id="flysel"></div>

</div>
</body>
</html>
